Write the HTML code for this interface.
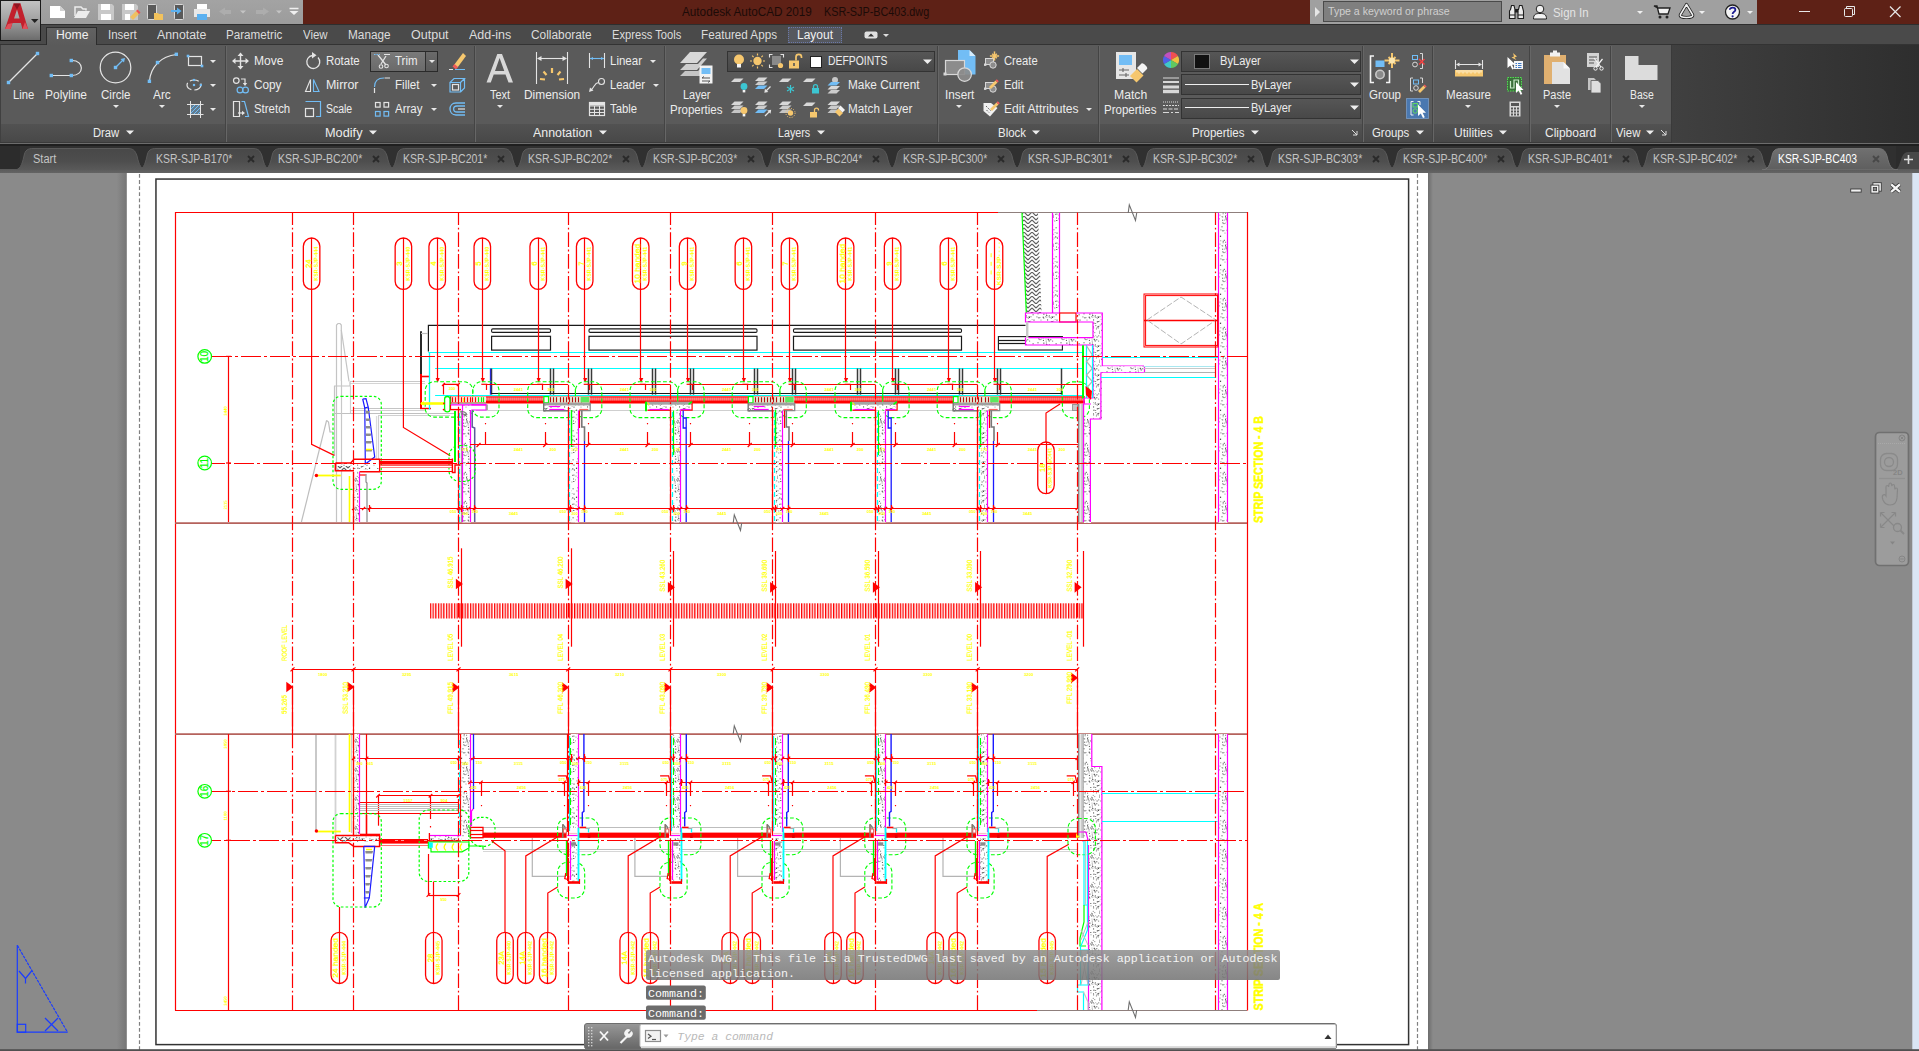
<!DOCTYPE html>
<html><head><meta charset="utf-8"><title>Autodesk AutoCAD 2019 - KSR-SJP-BC403.dwg</title>
<style>
html,body{margin:0;padding:0;background:#8a8a8a;overflow:hidden}
body{width:1919px;height:1051px;position:relative;font-family:"Liberation Sans",sans-serif}
.abs{position:absolute;display:block}
.t{position:absolute;white-space:nowrap;transform-origin:0 0;display:block}
</style></head><body>
<svg class="abs" style="left:0;top:0" width="1919" height="1051" fill="none" font-family="Liberation Sans, sans-serif">
<defs><pattern id="conc" width="23" height="29" patternUnits="userSpaceOnUse"><rect width="23" height="29" fill="#fff"/><rect x="13.7" y="20.8" width="0.8" height="0.8" fill="#333"/><rect x="10.2" y="26.4" width="0.8" height="0.8" fill="#666"/><rect x="2.5" y="13.1" width="1" height="1" fill="#999"/><rect x="12.0" y="16.1" width="0.8" height="0.8" fill="#777"/><rect x="4.8" y="7.8" width="1.1" height="1.1" fill="#666"/><rect x="16.8" y="2.0" width="1.1" height="1.1" fill="#666"/><rect x="2.9" y="27.2" width="0.8" height="0.8" fill="#666"/><rect x="17.0" y="26.9" width="1" height="1" fill="#333"/><rect x="3.7" y="8.8" width="1" height="1" fill="#555"/><rect x="19.3" y="17.5" width="1" height="1" fill="#777"/><rect x="4.3" y="27.0" width="1.1" height="1.1" fill="#888"/><rect x="0.5" y="11.6" width="1" height="1" fill="#888"/><rect x="1.4" y="8.4" width="0.8" height="0.8" fill="#555"/><rect x="14.9" y="9.5" width="1" height="1" fill="#888"/><rect x="18.0" y="13.5" width="1" height="1" fill="#666"/><rect x="10.6" y="19.7" width="0.8" height="0.8" fill="#888"/><rect x="21.5" y="0.6" width="1" height="1" fill="#333"/><rect x="8.9" y="15.4" width="1.1" height="1.1" fill="#888"/><rect x="8.3" y="23.6" width="1.1" height="1.1" fill="#444"/><rect x="15.6" y="17.5" width="1" height="1" fill="#444"/><rect x="16.6" y="26.0" width="1.1" height="1.1" fill="#888"/><rect x="11.3" y="25.0" width="1" height="1" fill="#333"/><rect x="10.2" y="16.5" width="1" height="1" fill="#333"/><rect x="6.5" y="12.1" width="0.8" height="0.8" fill="#666"/><rect x="7.5" y="17.1" width="1" height="1" fill="#888"/><rect x="6.1" y="19.7" width="0.8" height="0.8" fill="#888"/><rect x="15.1" y="8.6" width="0.8" height="0.8" fill="#777"/><rect x="3.3" y="19.3" width="1.1" height="1.1" fill="#666"/><rect x="15.8" y="2.3" width="1.1" height="1.1" fill="#444"/><rect x="5.2" y="16.6" width="1" height="1" fill="#999"/><rect x="14.3" y="4.1" width="0.8" height="0.8" fill="#333"/><rect x="10.9" y="23.5" width="1" height="1" fill="#777"/><rect x="12.4" y="3.7" width="1.1" height="1.1" fill="#444"/><rect x="3.7" y="10.4" width="0.8" height="0.8" fill="#333"/><rect x="9.3" y="4.0" width="1" height="1" fill="#555"/><rect x="10.0" y="13.7" width="1" height="1" fill="#999"/><rect x="6.0" y="13.2" width="1" height="1" fill="#444"/><rect x="8.3" y="27.7" width="1" height="1" fill="#777"/><rect x="20.6" y="24.3" width="1" height="1" fill="#444"/><rect x="10.8" y="14.4" width="1" height="1" fill="#444"/><rect x="17.3" y="21.7" width="0.8" height="0.8" fill="#333"/><rect x="6.7" y="15.7" width="1" height="1" fill="#333"/><rect x="10.7" y="21.6" width="1" height="1" fill="#888"/><rect x="14.3" y="16.3" width="0.8" height="0.8" fill="#999"/><rect x="12.0" y="7.0" width="1" height="1" fill="#999"/><rect x="6.4" y="14.0" width="1" height="1" fill="#888"/><rect x="6.0" y="9.7" width="1.1" height="1.1" fill="#888"/><rect x="20.3" y="4.8" width="1.1" height="1.1" fill="#888"/><rect x="21.0" y="14.5" width="1" height="1" fill="#666"/><rect x="18.4" y="26.2" width="1.1" height="1.1" fill="#888"/><rect x="15.2" y="20.2" width="1.1" height="1.1" fill="#666"/><rect x="13.6" y="26.2" width="1.1" height="1.1" fill="#888"/><rect x="13.7" y="21.7" width="1" height="1" fill="#777"/><rect x="21.9" y="5.5" width="1.1" height="1.1" fill="#555"/><rect x="14.3" y="6.1" width="1" height="1" fill="#777"/><rect x="15.8" y="27.6" width="1" height="1" fill="#666"/><rect x="1.2" y="3.7" width="1" height="1" fill="#666"/><rect x="10.6" y="15.4" width="1.1" height="1.1" fill="#999"/><rect x="7.7" y="18.6" width="0.8" height="0.8" fill="#555"/><rect x="4.5" y="20.1" width="1" height="1" fill="#444"/><rect x="7.7" y="26.7" width="1.1" height="1.1" fill="#333"/><rect x="2.5" y="23.3" width="1" height="1" fill="#444"/><rect x="12.1" y="8.4" width="1" height="1" fill="#555"/><rect x="11.3" y="26.6" width="1" height="1" fill="#888"/><rect x="18.0" y="11.7" width="1" height="1" fill="#999"/><rect x="3.1" y="16.7" width="1.1" height="1.1" fill="#666"/><rect x="21.3" y="17.0" width="1" height="1" fill="#333"/><rect x="19.7" y="0.0" width="0.8" height="0.8" fill="#888"/><rect x="12.4" y="17.2" width="1" height="1" fill="#888"/><rect x="13.8" y="25.0" width="1.1" height="1.1" fill="#999"/><rect x="9.5" y="6.3" width="1" height="1" fill="#999"/><rect x="21.4" y="10.6" width="1" height="1" fill="#555"/><rect x="13.1" y="20.7" width="1" height="1" fill="#999"/><rect x="5.5" y="0.6" width="1" height="1" fill="#999"/><rect x="20.4" y="4.0" width="0.8" height="0.8" fill="#444"/><rect x="14.5" y="26.9" width="1" height="1" fill="#888"/><rect x="0.9" y="3.8" width="1.1" height="1.1" fill="#444"/><rect x="10.6" y="15.7" width="1" height="1" fill="#999"/><rect x="17.2" y="6.9" width="1" height="1" fill="#333"/><rect x="3.4" y="27.7" width="1" height="1" fill="#999"/><rect x="13.4" y="13.3" width="0.8" height="0.8" fill="#444"/><rect x="16.7" y="8.4" width="1" height="1" fill="#555"/><rect x="6.5" y="14.8" width="1.1" height="1.1" fill="#888"/><rect x="7.9" y="20.9" width="1" height="1" fill="#444"/><rect x="0.1" y="15.5" width="0.8" height="0.8" fill="#777"/><rect x="12.0" y="0.4" width="1.1" height="1.1" fill="#555"/><rect x="12.7" y="19.8" width="1.1" height="1.1" fill="#333"/><rect x="20.1" y="10.8" width="1.1" height="1.1" fill="#777"/><rect x="18.7" y="5.5" width="1" height="1" fill="#999"/><rect x="18.3" y="1.8" width="0.8" height="0.8" fill="#777"/><rect x="17.1" y="16.3" width="1.1" height="1.1" fill="#888"/><rect x="3.1" y="13.4" width="1.1" height="1.1" fill="#888"/><rect x="11.8" y="11.9" width="0.8" height="0.8" fill="#444"/><rect x="16.1" y="7.5" width="0.8" height="0.8" fill="#333"/><rect x="1.4" y="26.4" width="1" height="1" fill="#777"/></pattern><pattern id="vh" width="2.67" height="4" patternUnits="userSpaceOnUse"><rect width="1.3" height="4" fill="#ff0000"/></pattern><pattern id="wt" width="2" height="4" patternUnits="userSpaceOnUse"><rect x=".5" width=".9" height="4" fill="#ffffff"/></pattern><pattern id="vh2" width="2.2" height="4" patternUnits="userSpaceOnUse"><rect width="1.5" height="4" fill="#ff0000"/></pattern><pattern id="herr" width="8" height="8" patternUnits="userSpaceOnUse"><rect width="8" height="8" fill="#fff"/><path d="M0 0L4 4M0 4L4 8M4 4L8 0M4 8L8 4" stroke="#5e5e5e" stroke-width="1.1" fill="none"/></pattern><linearGradient id="shl" x1="0" x2="1"><stop offset="0" stop-color="#8a8a8a"/><stop offset="1" stop-color="#757575"/></linearGradient><linearGradient id="shr" x1="0" x2="1"><stop offset="0" stop-color="#6c6c6c"/><stop offset="1" stop-color="#8a8a8a"/></linearGradient></defs>
<rect x="0" y="173" width="1919" height="878" fill="#8a8a8a" stroke="none" stroke-width="1" />
<rect x="116.8" y="173" width="10.2" height="878" fill="url(#shl)" stroke="none" stroke-width="1" />
<rect x="1428" y="173" width="5" height="878" fill="url(#shr)" stroke="none" stroke-width="1" />
<rect x="126.8" y="172.8" width="1301.2" height="879" fill="#ffffff" stroke="none" stroke-width="1" />
<path d="M139.5 174L139.5 1051" stroke="#808080" stroke-width="1.2" stroke-dasharray="3.8 2.3"/>
<path d="M1417.5 174L1417.5 1051" stroke="#808080" stroke-width="1.2" stroke-dasharray="3.8 2.3"/>
<rect x="155.95" y="179.05" width="1252.65" height="865.55" fill="none" stroke="#333" stroke-width="1.5" />
<rect x="1912.3" y="172.9" width="6.7" height="878" fill="#dae5f4" stroke="none" stroke-width="1" />
<path d="M175 212.5L998 212.5" stroke="#ff0000" stroke-width="1.2" />
<path d="M998 212.5L1247 212.5" stroke="#8f7f7c" stroke-width="1.2" />
<path d="M175 1010.5L1037 1010.5" stroke="#ff0000" stroke-width="1.2" />
<path d="M1037 1010.5L1247 1010.5" stroke="#8f7f7c" stroke-width="1.2" />
<path d="M175.5 212L175.5 1010.5" stroke="#ff0000" stroke-width="1.2" />
<path d="M1247.5 212L1247.5 1010.5" stroke="#ff0000" stroke-width="1.2" />
<path d="M1128.2 213L1129.3 204.8L1135.5 220.4L1136.7 213" stroke="#6e6e6e" stroke-width="1.1" fill="none" />
<path d="M1128.2 1010L1129.3 1001.8L1135.5 1017.4L1136.7 1010" stroke="#6e6e6e" stroke-width="1.1" fill="none" />
<path d="M175 523.1L1247 523.1" stroke="#b5625c" stroke-width="1.7" />
<path d="M175 734.2L1247 734.2" stroke="#b5625c" stroke-width="1.7" />
<path d="M733.2 523L734.3 514.8L740.5 530.4L741.7 523" stroke="#6e6e6e" stroke-width="1.1" fill="none" />
<path d="M733.2 734L734.3 725.8L740.5 741.4L741.7 734" stroke="#6e6e6e" stroke-width="1.1" fill="none" />
<path d="M228.5 356L228.5 522" stroke="#ff0000" stroke-width="1.2" />
<path d="M228.5 734L228.5 1010" stroke="#ff0000" stroke-width="1.2" />
<path d="M226 356.4L231 356.4" stroke="#ff0000" stroke-width="1.2" />
<path d="M226 463L231 463" stroke="#ff0000" stroke-width="1.2" />
<path d="M226 791.3L231 791.3" stroke="#ff0000" stroke-width="1.2" />
<path d="M226 840.3L231 840.3" stroke="#ff0000" stroke-width="1.2" />
<text x="227" y="411" font-size="4.2" fill="#ffff00" stroke="none" text-anchor="middle" font-weight="bold" transform="rotate(-90 227 411)">3440</text>
<text x="227" y="505" font-size="4.2" fill="#ffff00" stroke="none" text-anchor="middle" font-weight="bold" transform="rotate(-90 227 505)">2115</text>
<text x="227" y="744" font-size="4.2" fill="#ffff00" stroke="none" text-anchor="middle" font-weight="bold" transform="rotate(-90 227 744)">3050</text>
<text x="227" y="816" font-size="4.2" fill="#ffff00" stroke="none" text-anchor="middle" font-weight="bold" transform="rotate(-90 227 816)">1100</text>
<text x="227" y="1001" font-size="4.2" fill="#ffff00" stroke="none" text-anchor="middle" font-weight="bold" transform="rotate(-90 227 1001)">3450</text>
<circle cx="204.7" cy="356.4" r="6.8" fill="none" stroke="#00ff00" stroke-width="1.2"/>
<text x="208.2" y="356.4" font-size="10" fill="#00ff00" stroke="#00ff00" stroke-width="0.2" text-anchor="middle" transform="rotate(-90 208.2 356.4)">10</text>
<circle cx="204.7" cy="463" r="6.8" fill="none" stroke="#00ff00" stroke-width="1.2"/>
<text x="208.2" y="463" font-size="10" fill="#00ff00" stroke="#00ff00" stroke-width="0.2" text-anchor="middle" transform="rotate(-90 208.2 463)">11</text>
<circle cx="204.7" cy="791.3" r="6.8" fill="none" stroke="#00ff00" stroke-width="1.2"/>
<text x="208.2" y="791.3" font-size="10" fill="#00ff00" stroke="#00ff00" stroke-width="0.2" text-anchor="middle" transform="rotate(-90 208.2 791.3)">16</text>
<circle cx="204.7" cy="840.3" r="6.8" fill="none" stroke="#00ff00" stroke-width="1.2"/>
<text x="208.2" y="840.3" font-size="10" fill="#00ff00" stroke="#00ff00" stroke-width="0.2" text-anchor="middle" transform="rotate(-90 208.2 840.3)">17</text>
<rect x="430" y="603.3" width="654" height="15.2" fill="url(#vh)" stroke="none" stroke-width="1" />
<path d="M292.5 669.5L1077.5 669.5" stroke="#ff0000" stroke-width="1.2" />
<path d="M290.5 671.4L294.5 667.4" stroke="#ff0000" stroke-width="1.2" />
<path d="M351.6 671.4L355.6 667.4" stroke="#ff0000" stroke-width="1.2" />
<path d="M456.5 671.4L460.5 667.4" stroke="#ff0000" stroke-width="1.2" />
<path d="M566.2 671.4L570.2 667.4" stroke="#ff0000" stroke-width="1.2" />
<path d="M668.5 671.4L672.5 667.4" stroke="#ff0000" stroke-width="1.2" />
<path d="M770.7 671.4L774.7 667.4" stroke="#ff0000" stroke-width="1.2" />
<path d="M873.5 671.4L877.5 667.4" stroke="#ff0000" stroke-width="1.2" />
<path d="M975.7 671.4L979.7 667.4" stroke="#ff0000" stroke-width="1.2" />
<path d="M1075.2 671.4L1079.2 667.4" stroke="#ff0000" stroke-width="1.2" />
<path d="M461.5 548.3L461.5 646.7" stroke="#ff0000" stroke-width="1.2" />
<path d="M571.5 548.3L571.5 646.7" stroke="#ff0000" stroke-width="1.2" />
<path d="M673.5 551L673.5 646.7" stroke="#ff0000" stroke-width="1.2" />
<path d="M775.5 551L775.5 646.7" stroke="#ff0000" stroke-width="1.2" />
<path d="M878.5 551L878.5 646.7" stroke="#ff0000" stroke-width="1.2" />
<path d="M980.5 551L980.5 646.7" stroke="#ff0000" stroke-width="1.2" />
<path d="M1083.5 551L1083.5 646.7" stroke="#ff0000" stroke-width="1.2" />
<path d="M455.9 578.65L462.9 584L455.9 589.35Z" fill="#ff0000" stroke="none"/>
<text x="452.9" y="588.5" font-size="7" fill="#ffff00" stroke="#ffff00" stroke-width="0.2" text-anchor="start" transform="rotate(-90 452.9 588.5)" textLength="32" lengthAdjust="spacingAndGlyphs">SSL 46.915</text>
<text x="452.9" y="661" font-size="7" fill="#ffff00" stroke="#ffff00" stroke-width="0.2" text-anchor="start" transform="rotate(-90 452.9 661)" textLength="27.2" lengthAdjust="spacingAndGlyphs">LEVEL 05</text>
<path d="M452.3 682.15L459.3 687.5L452.3 692.85Z" fill="#ff0000" stroke="none"/>
<path d="M458.5 687.5L458.5 734" stroke="#ff0000" stroke-width="1.2" />
<text x="452.9" y="714" font-size="7" fill="#ffff00" stroke="#ffff00" stroke-width="0.2" text-anchor="start" transform="rotate(-90 452.9 714)" textLength="32" lengthAdjust="spacingAndGlyphs">FFL 49.915</text>
<path d="M565.6 578.65L572.6 584L565.6 589.35Z" fill="#ff0000" stroke="none"/>
<text x="562.6" y="588.5" font-size="7" fill="#ffff00" stroke="#ffff00" stroke-width="0.2" text-anchor="start" transform="rotate(-90 562.6 588.5)" textLength="32" lengthAdjust="spacingAndGlyphs">SSL 46.200</text>
<text x="562.6" y="661" font-size="7" fill="#ffff00" stroke="#ffff00" stroke-width="0.2" text-anchor="start" transform="rotate(-90 562.6 661)" textLength="27.2" lengthAdjust="spacingAndGlyphs">LEVEL 04</text>
<path d="M562 682.15L569 687.5L562 692.85Z" fill="#ff0000" stroke="none"/>
<path d="M568.5 687.5L568.5 734" stroke="#ff0000" stroke-width="1.2" />
<text x="562.6" y="714" font-size="7" fill="#ffff00" stroke="#ffff00" stroke-width="0.2" text-anchor="start" transform="rotate(-90 562.6 714)" textLength="32" lengthAdjust="spacingAndGlyphs">FFL 46.300</text>
<path d="M667.9 581.95L674.9 587.3L667.9 592.65Z" fill="#ff0000" stroke="none"/>
<text x="664.9" y="591.8" font-size="7" fill="#ffff00" stroke="#ffff00" stroke-width="0.2" text-anchor="start" transform="rotate(-90 664.9 591.8)" textLength="32" lengthAdjust="spacingAndGlyphs">SSL 43.260</text>
<text x="664.9" y="661" font-size="7" fill="#ffff00" stroke="#ffff00" stroke-width="0.2" text-anchor="start" transform="rotate(-90 664.9 661)" textLength="27.2" lengthAdjust="spacingAndGlyphs">LEVEL 03</text>
<path d="M664.3 682.15L671.3 687.5L664.3 692.85Z" fill="#ff0000" stroke="none"/>
<path d="M670.5 687.5L670.5 734" stroke="#ff0000" stroke-width="1.2" />
<text x="664.9" y="714" font-size="7" fill="#ffff00" stroke="#ffff00" stroke-width="0.2" text-anchor="start" transform="rotate(-90 664.9 714)" textLength="32" lengthAdjust="spacingAndGlyphs">FFL 43.090</text>
<path d="M770.1 581.95L777.1 587.3L770.1 592.65Z" fill="#ff0000" stroke="none"/>
<text x="767.1" y="591.8" font-size="7" fill="#ffff00" stroke="#ffff00" stroke-width="0.2" text-anchor="start" transform="rotate(-90 767.1 591.8)" textLength="32" lengthAdjust="spacingAndGlyphs">SSL 39.690</text>
<text x="767.1" y="661" font-size="7" fill="#ffff00" stroke="#ffff00" stroke-width="0.2" text-anchor="start" transform="rotate(-90 767.1 661)" textLength="27.2" lengthAdjust="spacingAndGlyphs">LEVEL 02</text>
<path d="M766.5 682.15L773.5 687.5L766.5 692.85Z" fill="#ff0000" stroke="none"/>
<path d="M772.5 687.5L772.5 734" stroke="#ff0000" stroke-width="1.2" />
<text x="767.1" y="714" font-size="7" fill="#ffff00" stroke="#ffff00" stroke-width="0.2" text-anchor="start" transform="rotate(-90 767.1 714)" textLength="32" lengthAdjust="spacingAndGlyphs">FFL 39.790</text>
<path d="M872.9 581.95L879.9 587.3L872.9 592.65Z" fill="#ff0000" stroke="none"/>
<text x="869.9" y="591.8" font-size="7" fill="#ffff00" stroke="#ffff00" stroke-width="0.2" text-anchor="start" transform="rotate(-90 869.9 591.8)" textLength="32" lengthAdjust="spacingAndGlyphs">SSL 36.590</text>
<text x="869.9" y="661" font-size="7" fill="#ffff00" stroke="#ffff00" stroke-width="0.2" text-anchor="start" transform="rotate(-90 869.9 661)" textLength="27.2" lengthAdjust="spacingAndGlyphs">LEVEL 01</text>
<path d="M869.3 682.15L876.3 687.5L869.3 692.85Z" fill="#ff0000" stroke="none"/>
<path d="M875.5 687.5L875.5 734" stroke="#ff0000" stroke-width="1.2" />
<text x="869.9" y="714" font-size="7" fill="#ffff00" stroke="#ffff00" stroke-width="0.2" text-anchor="start" transform="rotate(-90 869.9 714)" textLength="32" lengthAdjust="spacingAndGlyphs">FFL 36.490</text>
<path d="M975.1 581.95L982.1 587.3L975.1 592.65Z" fill="#ff0000" stroke="none"/>
<text x="972.1" y="591.8" font-size="7" fill="#ffff00" stroke="#ffff00" stroke-width="0.2" text-anchor="start" transform="rotate(-90 972.1 591.8)" textLength="32" lengthAdjust="spacingAndGlyphs">SSL 33.090</text>
<text x="972.1" y="661" font-size="7" fill="#ffff00" stroke="#ffff00" stroke-width="0.2" text-anchor="start" transform="rotate(-90 972.1 661)" textLength="27.2" lengthAdjust="spacingAndGlyphs">LEVEL 00</text>
<path d="M971.5 682.15L978.5 687.5L971.5 692.85Z" fill="#ff0000" stroke="none"/>
<path d="M977.5 687.5L977.5 734" stroke="#ff0000" stroke-width="1.2" />
<text x="972.1" y="714" font-size="7" fill="#ffff00" stroke="#ffff00" stroke-width="0.2" text-anchor="start" transform="rotate(-90 972.1 714)" textLength="32" lengthAdjust="spacingAndGlyphs">FFL 33.190</text>
<path d="M1074.6 581.95L1081.6 587.3L1074.6 592.65Z" fill="#ff0000" stroke="none"/>
<text x="1071.6" y="591.8" font-size="7" fill="#ffff00" stroke="#ffff00" stroke-width="0.2" text-anchor="start" transform="rotate(-90 1071.6 591.8)" textLength="32" lengthAdjust="spacingAndGlyphs">SSL 32.790</text>
<text x="1071.6" y="661" font-size="7" fill="#ffff00" stroke="#ffff00" stroke-width="0.2" text-anchor="start" transform="rotate(-90 1071.6 661)" textLength="30.6" lengthAdjust="spacingAndGlyphs">LEVEL -01</text>
<path d="M1071 672.45L1078 677.8L1071 683.15Z" fill="#ff0000" stroke="none"/>
<path d="M1077.5 677.8L1077.5 734" stroke="#ff0000" stroke-width="1.2" />
<text x="1071.6" y="704" font-size="7" fill="#ffff00" stroke="#ffff00" stroke-width="0.2" text-anchor="start" transform="rotate(-90 1071.6 704)" textLength="32" lengthAdjust="spacingAndGlyphs">FFL 29.990</text>
<path d="M286.3 681.65L293.3 687L286.3 692.35Z" fill="#ff0000" stroke="none"/>
<path d="M347.4 681.65L354.4 687L347.4 692.35Z" fill="#ff0000" stroke="none"/>
<path d="M292.5 687L292.5 734" stroke="#ff0000" stroke-width="1.2" />
<path d="M353.5 687L353.5 734" stroke="#ff0000" stroke-width="1.2" />
<text x="286.9" y="661" font-size="7" fill="#ffff00" stroke="#ffff00" stroke-width="0.2" text-anchor="start" transform="rotate(-90 286.9 661)" textLength="36" lengthAdjust="spacingAndGlyphs">ROOF LEVEL</text>
<text x="286.9" y="714" font-size="7" fill="#ffff00" stroke="#ffff00" stroke-width="0.2" text-anchor="start" transform="rotate(-90 286.9 714)" textLength="19" lengthAdjust="spacingAndGlyphs">55.265</text>
<text x="348" y="714" font-size="7" fill="#ffff00" stroke="#ffff00" stroke-width="0.2" text-anchor="start" transform="rotate(-90 348 714)" textLength="32" lengthAdjust="spacingAndGlyphs">SSL 53.210</text>
<text x="318" y="675.5" font-size="4.2" fill="#ffff00" stroke="none" text-anchor="start" font-weight="bold">1800</text>
<text x="402" y="675.5" font-size="4.2" fill="#ffff00" stroke="none" text-anchor="start" font-weight="bold">3295</text>
<text x="509" y="675.5" font-size="4.2" fill="#ffff00" stroke="none" text-anchor="start" font-weight="bold">3615</text>
<text x="615" y="675.5" font-size="4.2" fill="#ffff00" stroke="none" text-anchor="start" font-weight="bold">3210</text>
<text x="717" y="675.5" font-size="4.2" fill="#ffff00" stroke="none" text-anchor="start" font-weight="bold">3300</text>
<text x="820" y="675.5" font-size="4.2" fill="#ffff00" stroke="none" text-anchor="start" font-weight="bold">3300</text>
<text x="923" y="675.5" font-size="4.2" fill="#ffff00" stroke="none" text-anchor="start" font-weight="bold">3300</text>
<text x="1024" y="675.5" font-size="4.2" fill="#ffff00" stroke="none" text-anchor="start" font-weight="bold">3200</text>
<path d="M336.5 522L336.5 325L338 323.5L340 323.5L341.3 325L341.3 381" stroke="#c4c4c4" stroke-width="1.2" fill="none" />
<path d="M341.3 330L349 381.4" stroke="#c4c4c4" stroke-width="1.2" fill="none" />
<path d="M326.6 420.4L301.4 522" stroke="#bdbdbd" stroke-width="1.2" fill="none" />
<path d="M326.6 420.4L328.5 422L330 432L333 432" stroke="#bdbdbd" stroke-width="1.2" fill="none" />
<path d="M350 381.5L425 381.5" stroke="#c8c8c8" stroke-width="1.2" />
<path d="M350 383.5L425 383.5" stroke="#d4d4d4" stroke-width="1.2" />
<path d="M334 386L350 386L350 381.4" stroke="#c4c4c4" stroke-width="1.2" fill="none" />
<path d="M334.5 386L334.5 456" stroke="#c4c4c4" stroke-width="1.2" />
<path d="M354 408.5L425 408.5" stroke="#c4c4c4" stroke-width="1.2" />
<path d="M350 410.5L425 410.5" stroke="#d0d0d0" stroke-width="1.2" />
<path d="M335 413.5L455 413.5" stroke="#c0c0c0" stroke-width="1.2" />
<path d="M378 415.5L450 415.5" stroke="#d0d0d0" stroke-width="1.2" />
<path d="M350.5 386L350.5 413" stroke="#cfcfcf" stroke-width="1.2" />
<path d="M378.5 416L378.5 460" stroke="#cfcfcf" stroke-width="1.2" />
<path d="M376.5 416L376.5 460" stroke="#dcdcdc" stroke-width="1.2" />
<path d="M341.5 381L341.5 522" stroke="#c8c8c8" stroke-width="1.2" />
<path d="M476 410.5L1080 410.5" stroke="#cfcfcf" stroke-width="1.2" />
<path d="M428.4 351.5L428.4 325.4L1025.5 325.4" stroke="#1a1a1a" stroke-width="1.2" fill="none" />
<path d="M421 331.3L421 374" stroke="#2a2a2a" stroke-width="2" />
<path d="M421 333.5L428 333.5" stroke="#bdbdbd" stroke-width="1.2" />
<path d="M421 374L421 408.7" stroke="#ff0000" stroke-width="2" />
<path d="M421 376.5L429 376.5" stroke="#ff0000" stroke-width="1.6" />
<path d="M420 408.5L431 408.5" stroke="#ff0000" stroke-width="1.4" />
<rect x="491.6" y="328.9" width="58.9" height="3.5" fill="none" stroke="#1a1a1a" stroke-width="1.1" rx="1.2"/>
<rect x="491.6" y="336.3" width="58.9" height="13.8" fill="none" stroke="#1a1a1a" stroke-width="1.2" />
<rect x="589" y="328.9" width="168" height="3.5" fill="none" stroke="#1a1a1a" stroke-width="1.1" rx="1.2"/>
<rect x="589" y="336.3" width="168" height="13.8" fill="none" stroke="#1a1a1a" stroke-width="1.2" />
<rect x="793.5" y="328.9" width="168" height="3.5" fill="none" stroke="#1a1a1a" stroke-width="1.1" rx="1.2"/>
<rect x="793.5" y="336.3" width="168" height="13.8" fill="none" stroke="#1a1a1a" stroke-width="1.2" />
<rect x="998.4" y="336.6" width="64" height="13.4" fill="none" stroke="#1a1a1a" stroke-width="1.1" />
<path d="M998.4 340.5L1025 340.5" stroke="#1a1a1a" stroke-width="1.2" />
<path d="M998.4 343.5L1025 343.5" stroke="#1a1a1a" stroke-width="1.2" />
<path d="M428.4 352.5L1082 352.5" stroke="#00ffff" stroke-width="1.2" />
<path d="M429.5 352L429.5 409.5" stroke="#00ffff" stroke-width="1.3" />
<path d="M435.1 368.5L1082 368.5" stroke="#00ffff" stroke-width="1.2" />
<path d="M435.1 395.5L1082 395.5" stroke="#00ffff" stroke-width="1.2" />
<path d="M491.5 368.5L491.5 394.6" stroke="#3a3a3a" stroke-width="1.5" />
<path d="M550.5 368.5L550.5 394.6" stroke="#3a3a3a" stroke-width="1.5" />
<path d="M553.5 368.5L553.5 394.6" stroke="#3a3a3a" stroke-width="1.5" />
<path d="M588.5 368.5L588.5 394.6" stroke="#3a3a3a" stroke-width="1.5" />
<path d="M591.5 368.5L591.5 394.6" stroke="#3a3a3a" stroke-width="1.5" />
<path d="M652.5 368.5L652.5 394.6" stroke="#3a3a3a" stroke-width="1.5" />
<path d="M655.5 368.5L655.5 394.6" stroke="#3a3a3a" stroke-width="1.5" />
<path d="M690.5 368.5L690.5 394.6" stroke="#3a3a3a" stroke-width="1.5" />
<path d="M693.5 368.5L693.5 394.6" stroke="#3a3a3a" stroke-width="1.5" />
<path d="M754.5 368.5L754.5 394.6" stroke="#3a3a3a" stroke-width="1.5" />
<path d="M757.5 368.5L757.5 394.6" stroke="#3a3a3a" stroke-width="1.5" />
<path d="M792.5 368.5L792.5 394.6" stroke="#3a3a3a" stroke-width="1.5" />
<path d="M795.5 368.5L795.5 394.6" stroke="#3a3a3a" stroke-width="1.5" />
<path d="M857.5 368.5L857.5 394.6" stroke="#3a3a3a" stroke-width="1.5" />
<path d="M860.5 368.5L860.5 394.6" stroke="#3a3a3a" stroke-width="1.5" />
<path d="M895.5 368.5L895.5 394.6" stroke="#3a3a3a" stroke-width="1.5" />
<path d="M898.5 368.5L898.5 394.6" stroke="#3a3a3a" stroke-width="1.5" />
<path d="M959.5 368.5L959.5 394.6" stroke="#3a3a3a" stroke-width="1.5" />
<path d="M962.5 368.5L962.5 394.6" stroke="#3a3a3a" stroke-width="1.5" />
<path d="M997.5 368.5L997.5 394.6" stroke="#3a3a3a" stroke-width="1.5" />
<path d="M1000.5 368.5L1000.5 394.6" stroke="#3a3a3a" stroke-width="1.5" />
<path d="M1061.5 368.5L1061.5 394.6" stroke="#3a3a3a" stroke-width="1.5" />
<path d="M490.5 368.5L490.5 394.6" stroke="#2a2ad0" stroke-width="1.3" />
<path d="M491 393.5L1062 393.5" stroke="#1a1a1a" stroke-width="1.2" />
<path d="M486 384.5L568.2 384.5" stroke="#ff0000" stroke-width="1.2" />
<path d="M588.5 384.5L670.5 384.5" stroke="#ff0000" stroke-width="1.2" />
<path d="M690.8 384.5L772.7 384.5" stroke="#ff0000" stroke-width="1.2" />
<path d="M793 384.5L875.5 384.5" stroke="#ff0000" stroke-width="1.2" />
<path d="M895.8 384.5L977.7 384.5" stroke="#ff0000" stroke-width="1.2" />
<path d="M998 384.5L1082 384.5" stroke="#ff0000" stroke-width="1.2" />
<rect x="450" y="396.3" width="635" height="7.2" fill="#ff0000" stroke="none" stroke-width="1" />
<rect x="450" y="397.4" width="635" height="3.2" fill="url(#wt)" stroke="none" stroke-width="1" />
<rect x="303.35" y="238" width="16.5" height="51.4" fill="none" stroke="#ff0000" stroke-width="1.3" rx="8.25"/>
<path d="M311.5 238L311.5 289.4" stroke="#ff0000" stroke-width="1.2" />
<text x="310.6" y="263.7" font-size="7.6" fill="#ffff00" stroke="#ffff00" stroke-width="0.3" text-anchor="middle" transform="rotate(-90 310.6 263.7)">24</text>
<text x="318" y="263.7" font-size="5.2" fill="#ffff00" stroke="none" text-anchor="middle" font-weight="bold" transform="rotate(-90 318 263.7)" textLength="33.88" lengthAdjust="spacingAndGlyphs">KSR-SJP-444</text>
<path d="M311.6 289.4L311.6 444.4L334.3 455.4" stroke="#ff0000" stroke-width="1.2" fill="none" />
<rect x="395.15" y="238" width="16.5" height="51.4" fill="none" stroke="#ff0000" stroke-width="1.3" rx="8.25"/>
<path d="M403.5 238L403.5 289.4" stroke="#ff0000" stroke-width="1.2" />
<text x="402.4" y="263.7" font-size="7.6" fill="#ffff00" stroke="#ffff00" stroke-width="0.3" text-anchor="middle" transform="rotate(-90 402.4 263.7)">3</text>
<text x="409.8" y="263.7" font-size="5.2" fill="#ffff00" stroke="none" text-anchor="middle" font-weight="bold" transform="rotate(-90 409.8 263.7)" textLength="33.88" lengthAdjust="spacingAndGlyphs">KSR-SJP-440</text>
<path d="M403.4 289.4L403.4 427.4L450.2 455.8" stroke="#ff0000" stroke-width="1.2" fill="none" />
<rect x="428.95" y="238" width="16.5" height="51.4" fill="none" stroke="#ff0000" stroke-width="1.3" rx="8.25"/>
<path d="M437.5 238L437.5 289.4" stroke="#ff0000" stroke-width="1.2" />
<text x="436.2" y="263.7" font-size="7.6" fill="#ffff00" stroke="#ffff00" stroke-width="0.3" text-anchor="middle" transform="rotate(-90 436.2 263.7)">4</text>
<text x="443.6" y="263.7" font-size="5.2" fill="#ffff00" stroke="none" text-anchor="middle" font-weight="bold" transform="rotate(-90 443.6 263.7)" textLength="33.88" lengthAdjust="spacingAndGlyphs">KSR-SJP-440</text>
<path d="M437.5 289.4L437.5 381.4" stroke="#ff0000" stroke-width="1.2" />
<path d="M435.6 378L437.7 382.5L439.8 378Z" fill="#ff0000"/>
<rect x="474.05" y="238" width="16.5" height="51.4" fill="none" stroke="#ff0000" stroke-width="1.3" rx="8.25"/>
<path d="M482.5 238L482.5 289.4" stroke="#ff0000" stroke-width="1.2" />
<text x="481.3" y="263.7" font-size="7.6" fill="#ffff00" stroke="#ffff00" stroke-width="0.3" text-anchor="middle" transform="rotate(-90 481.3 263.7)">5</text>
<text x="488.7" y="263.7" font-size="5.2" fill="#ffff00" stroke="none" text-anchor="middle" font-weight="bold" transform="rotate(-90 488.7 263.7)" textLength="33.88" lengthAdjust="spacingAndGlyphs">KSR-SJP-440</text>
<path d="M482.5 289.4L482.5 381.4" stroke="#ff0000" stroke-width="1.2" />
<path d="M480.7 378L482.8 382.5L484.9 378Z" fill="#ff0000"/>
<path d="M486.5 384L486.5 390" stroke="#ff0000" stroke-width="1.2" />
<path d="M481.3 384.3L487.3 384.3" stroke="#ff0000" stroke-width="1.2" />
<rect x="529.95" y="238" width="16.5" height="51.4" fill="none" stroke="#ff0000" stroke-width="1.3" rx="8.25"/>
<path d="M538.5 238L538.5 289.4" stroke="#ff0000" stroke-width="1.2" />
<text x="537.2" y="263.7" font-size="7.6" fill="#ffff00" stroke="#ffff00" stroke-width="0.3" text-anchor="middle" transform="rotate(-90 537.2 263.7)">6</text>
<text x="544.6" y="263.7" font-size="5.2" fill="#ffff00" stroke="none" text-anchor="middle" font-weight="bold" transform="rotate(-90 544.6 263.7)" textLength="33.88" lengthAdjust="spacingAndGlyphs">KSR-SJP-441</text>
<path d="M538.5 289.4L538.5 381.4" stroke="#ff0000" stroke-width="1.2" />
<path d="M536.6 378L538.7 382.5L540.8 378Z" fill="#ff0000"/>
<path d="M542.5 384L542.5 390" stroke="#ff0000" stroke-width="1.2" />
<path d="M537.2 384.3L543.2 384.3" stroke="#ff0000" stroke-width="1.2" />
<rect x="576.45" y="238" width="16.5" height="51.4" fill="none" stroke="#ff0000" stroke-width="1.3" rx="8.25"/>
<path d="M584.5 238L584.5 289.4" stroke="#ff0000" stroke-width="1.2" />
<text x="583.7" y="263.7" font-size="7.6" fill="#ffff00" stroke="#ffff00" stroke-width="0.3" text-anchor="middle" transform="rotate(-90 583.7 263.7)">7</text>
<text x="591.1" y="263.7" font-size="5.2" fill="#ffff00" stroke="none" text-anchor="middle" font-weight="bold" transform="rotate(-90 591.1 263.7)" textLength="33.88" lengthAdjust="spacingAndGlyphs">KSR-SJP-441</text>
<path d="M584.5 289.4L584.5 381.4" stroke="#ff0000" stroke-width="1.2" />
<path d="M583.1 378L585.2 382.5L587.3 378Z" fill="#ff0000"/>
<path d="M589.5 384L589.5 390" stroke="#ff0000" stroke-width="1.2" />
<path d="M583.7 384.3L589.7 384.3" stroke="#ff0000" stroke-width="1.2" />
<rect x="632.45" y="238" width="16.5" height="51.4" fill="none" stroke="#ff0000" stroke-width="1.3" rx="8.25"/>
<path d="M640.5 238L640.5 289.4" stroke="#ff0000" stroke-width="1.2" />
<text x="639.7" y="263.7" font-size="7.6" fill="#ffff00" stroke="#ffff00" stroke-width="0.3" text-anchor="middle" transform="rotate(-90 639.7 263.7)" textLength="39.6" lengthAdjust="spacingAndGlyphs">10 handed</text>
<text x="647.1" y="263.7" font-size="5.2" fill="#ffff00" stroke="none" text-anchor="middle" font-weight="bold" transform="rotate(-90 647.1 263.7)" textLength="33.88" lengthAdjust="spacingAndGlyphs">KSR-SJP-441</text>
<path d="M640.5 289.4L640.5 381.4" stroke="#ff0000" stroke-width="1.2" />
<path d="M639.1 378L641.2 382.5L643.3 378Z" fill="#ff0000"/>
<path d="M645.5 384L645.5 390" stroke="#ff0000" stroke-width="1.2" />
<path d="M639.7 384.3L645.7 384.3" stroke="#ff0000" stroke-width="1.2" />
<rect x="679.35" y="238" width="16.5" height="51.4" fill="none" stroke="#ff0000" stroke-width="1.3" rx="8.25"/>
<path d="M687.5 238L687.5 289.4" stroke="#ff0000" stroke-width="1.2" />
<text x="686.6" y="263.7" font-size="7.6" fill="#ffff00" stroke="#ffff00" stroke-width="0.3" text-anchor="middle" transform="rotate(-90 686.6 263.7)">9</text>
<text x="694" y="263.7" font-size="5.2" fill="#ffff00" stroke="none" text-anchor="middle" font-weight="bold" transform="rotate(-90 694 263.7)" textLength="33.88" lengthAdjust="spacingAndGlyphs">KSR-SJP-441</text>
<path d="M687.5 289.4L687.5 381.4" stroke="#ff0000" stroke-width="1.2" />
<path d="M686 378L688.1 382.5L690.2 378Z" fill="#ff0000"/>
<path d="M692.5 384L692.5 390" stroke="#ff0000" stroke-width="1.2" />
<path d="M686.6 384.3L692.6 384.3" stroke="#ff0000" stroke-width="1.2" />
<rect x="735.15" y="238" width="16.5" height="51.4" fill="none" stroke="#ff0000" stroke-width="1.3" rx="8.25"/>
<path d="M743.5 238L743.5 289.4" stroke="#ff0000" stroke-width="1.2" />
<text x="742.4" y="263.7" font-size="7.6" fill="#ffff00" stroke="#ffff00" stroke-width="0.3" text-anchor="middle" transform="rotate(-90 742.4 263.7)">6</text>
<text x="749.8" y="263.7" font-size="5.2" fill="#ffff00" stroke="none" text-anchor="middle" font-weight="bold" transform="rotate(-90 749.8 263.7)" textLength="33.88" lengthAdjust="spacingAndGlyphs">KSR-SJP-441</text>
<path d="M743.5 289.4L743.5 381.4" stroke="#ff0000" stroke-width="1.2" />
<path d="M741.8 378L743.9 382.5L746 378Z" fill="#ff0000"/>
<path d="M747.5 384L747.5 390" stroke="#ff0000" stroke-width="1.2" />
<path d="M742.4 384.3L748.4 384.3" stroke="#ff0000" stroke-width="1.2" />
<rect x="781.25" y="238" width="16.5" height="51.4" fill="none" stroke="#ff0000" stroke-width="1.3" rx="8.25"/>
<path d="M789.5 238L789.5 289.4" stroke="#ff0000" stroke-width="1.2" />
<text x="788.5" y="263.7" font-size="7.6" fill="#ffff00" stroke="#ffff00" stroke-width="0.3" text-anchor="middle" transform="rotate(-90 788.5 263.7)">7</text>
<text x="795.9" y="263.7" font-size="5.2" fill="#ffff00" stroke="none" text-anchor="middle" font-weight="bold" transform="rotate(-90 795.9 263.7)" textLength="33.88" lengthAdjust="spacingAndGlyphs">KSR-SJP-441</text>
<path d="M789.5 289.4L789.5 381.4" stroke="#ff0000" stroke-width="1.2" />
<path d="M787.9 378L790 382.5L792.1 378Z" fill="#ff0000"/>
<path d="M794.5 384L794.5 390" stroke="#ff0000" stroke-width="1.2" />
<path d="M788.5 384.3L794.5 384.3" stroke="#ff0000" stroke-width="1.2" />
<rect x="837.35" y="238" width="16.5" height="51.4" fill="none" stroke="#ff0000" stroke-width="1.3" rx="8.25"/>
<path d="M845.5 238L845.5 289.4" stroke="#ff0000" stroke-width="1.2" />
<text x="844.6" y="263.7" font-size="7.6" fill="#ffff00" stroke="#ffff00" stroke-width="0.3" text-anchor="middle" transform="rotate(-90 844.6 263.7)" textLength="39.6" lengthAdjust="spacingAndGlyphs">10 handed</text>
<text x="852" y="263.7" font-size="5.2" fill="#ffff00" stroke="none" text-anchor="middle" font-weight="bold" transform="rotate(-90 852 263.7)" textLength="33.88" lengthAdjust="spacingAndGlyphs">KSR-SJP-441</text>
<path d="M845.5 289.4L845.5 381.4" stroke="#ff0000" stroke-width="1.2" />
<path d="M844 378L846.1 382.5L848.2 378Z" fill="#ff0000"/>
<path d="M850.5 384L850.5 390" stroke="#ff0000" stroke-width="1.2" />
<path d="M844.6 384.3L850.6 384.3" stroke="#ff0000" stroke-width="1.2" />
<rect x="884.35" y="238" width="16.5" height="51.4" fill="none" stroke="#ff0000" stroke-width="1.3" rx="8.25"/>
<path d="M892.5 238L892.5 289.4" stroke="#ff0000" stroke-width="1.2" />
<text x="891.6" y="263.7" font-size="7.6" fill="#ffff00" stroke="#ffff00" stroke-width="0.3" text-anchor="middle" transform="rotate(-90 891.6 263.7)">9</text>
<text x="899" y="263.7" font-size="5.2" fill="#ffff00" stroke="none" text-anchor="middle" font-weight="bold" transform="rotate(-90 899 263.7)" textLength="33.88" lengthAdjust="spacingAndGlyphs">KSR-SJP-441</text>
<path d="M892.5 289.4L892.5 381.4" stroke="#ff0000" stroke-width="1.2" />
<path d="M891 378L893.1 382.5L895.2 378Z" fill="#ff0000"/>
<path d="M897.5 384L897.5 390" stroke="#ff0000" stroke-width="1.2" />
<path d="M891.6 384.3L897.6 384.3" stroke="#ff0000" stroke-width="1.2" />
<rect x="940.15" y="238" width="16.5" height="51.4" fill="none" stroke="#ff0000" stroke-width="1.3" rx="8.25"/>
<path d="M948.5 238L948.5 289.4" stroke="#ff0000" stroke-width="1.2" />
<text x="947.4" y="263.7" font-size="7.6" fill="#ffff00" stroke="#ffff00" stroke-width="0.3" text-anchor="middle" transform="rotate(-90 947.4 263.7)">6</text>
<text x="954.8" y="263.7" font-size="5.2" fill="#ffff00" stroke="none" text-anchor="middle" font-weight="bold" transform="rotate(-90 954.8 263.7)" textLength="33.88" lengthAdjust="spacingAndGlyphs">KSR-SJP-441</text>
<path d="M948.5 289.4L948.5 381.4" stroke="#ff0000" stroke-width="1.2" />
<path d="M946.8 378L948.9 382.5L951 378Z" fill="#ff0000"/>
<path d="M952.5 384L952.5 390" stroke="#ff0000" stroke-width="1.2" />
<path d="M947.4 384.3L953.4 384.3" stroke="#ff0000" stroke-width="1.2" />
<rect x="986.25" y="238" width="16.5" height="51.4" fill="none" stroke="#ff0000" stroke-width="1.3" rx="8.25"/>
<path d="M994.5 238L994.5 289.4" stroke="#ff0000" stroke-width="1.2" />
<text x="993.5" y="263.7" font-size="7.6" fill="#ffff00" stroke="#ffff00" stroke-width="0.3" text-anchor="middle" transform="rotate(-90 993.5 263.7)" textLength="22" lengthAdjust="spacingAndGlyphs">- - -</text>
<text x="1000.9" y="263.7" font-size="5.2" fill="#ffff00" stroke="none" text-anchor="middle" font-weight="bold" transform="rotate(-90 1000.9 263.7)" textLength="43.12" lengthAdjust="spacingAndGlyphs">KSR-SJP- - - -</text>
<path d="M994.5 289.4L994.5 381.4" stroke="#ff0000" stroke-width="1.2" />
<path d="M992.9 378L995 382.5L997.1 378Z" fill="#ff0000"/>
<path d="M999.5 384L999.5 390" stroke="#ff0000" stroke-width="1.2" />
<path d="M993.5 384.3L999.5 384.3" stroke="#ff0000" stroke-width="1.2" />
<rect x="527.7" y="381.8" width="47.7" height="35.8" fill="none" stroke="#00ff00" stroke-width="1.1" rx="9" stroke-dasharray="3.8 2.2"/>
<rect x="575.4" y="381.8" width="26.4" height="35.8" fill="none" stroke="#00ff00" stroke-width="1.1" rx="9" stroke-dasharray="3.8 2.2"/>
<rect x="543.7" y="396.5" width="46" height="6.4" fill="#e6f6e0" stroke="none" stroke-width="1" />
<path d="M550.5 397.2L550.5 402.4" stroke="#b01010" stroke-width="1.2" />
<path d="M553.5 397.2L553.5 402.4" stroke="#b01010" stroke-width="1.2" />
<path d="M556.5 397.2L556.5 402.4" stroke="#b01010" stroke-width="1.2" />
<path d="M560.5 397.2L560.5 402.4" stroke="#b01010" stroke-width="1.2" />
<path d="M563.5 397.2L563.5 402.4" stroke="#b01010" stroke-width="1.2" />
<path d="M566.5 397.2L566.5 402.4" stroke="#b01010" stroke-width="1.2" />
<path d="M569.5 397.2L569.5 402.4" stroke="#b01010" stroke-width="1.2" />
<path d="M572.5 397.2L572.5 402.4" stroke="#b01010" stroke-width="1.2" />
<path d="M575.5 397.2L575.5 402.4" stroke="#b01010" stroke-width="1.2" />
<path d="M578.5 397.2L578.5 402.4" stroke="#b01010" stroke-width="1.2" />
<path d="M581.5 397.2L581.5 402.4" stroke="#b01010" stroke-width="1.2" />
<rect x="543.9" y="396.6" width="4.6" height="6.2" fill="#fff" stroke="#00ff00" stroke-width="1.2" />
<rect x="580.7" y="396.8" width="8.5" height="5.6" fill="#5de85d" stroke="none" stroke-width="1" />
<rect x="543.7" y="402.7" width="46.5" height="3" fill="#a0a0a0" stroke="none" stroke-width="1" />
<rect x="545.7" y="405.6" width="43" height="4.6" fill="url(#conc)" stroke="none" stroke-width="1" />
<path d="M543.7 402.7L543.7 410.7L569.2 410.7" stroke="#777" stroke-width="1.4" fill="none" />
<path d="M579.2 410.7L590.2 410.7L590.2 402.7" stroke="#888" stroke-width="1.3" fill="none" />
<path d="M549.2 406.5L560.2 406.5" stroke="#ff00ff" stroke-width="1.2" />
<path d="M549.2 409.5L564.2 409.5" stroke="#ff00ff" stroke-width="1.2" />
<path d="M579.2 409.5L588.2 409.5" stroke="#ff6060" stroke-width="1.2" />
<circle cx="544.7" cy="409.8" r="1.3" fill="none" stroke="#777"/>
<rect x="571.4" y="410.5" width="7" height="112" fill="url(#conc)" stroke="none" stroke-width="1" />
<path d="M568.5 410.5L568.5 522" stroke="#ff0000" stroke-width="1.2" />
<path d="M578.5 410.5L578.5 522" stroke="#ff00ff" stroke-width="1.2" />
<path d="M569.5 412L569.5 522" stroke="#00ffff" stroke-width="1.2" stroke-dasharray="5 3"/>
<path d="M571.5 410L571.5 447" stroke="#00ff00" stroke-width="1.4" />
<path d="M579.5 410.5L579.5 428" stroke="#ff0000" stroke-width="1.2" />
<path d="M581.8 410.5L581.8 427L584.5 427L584.5 441" stroke="#777" stroke-width="1.6" fill="none" />
<path d="M584.5 441L584.5 522" stroke="#1a1aff" stroke-width="1.3" />
<path d="M545.5 432L545.5 445" stroke="#ff0000" stroke-width="1.2" />
<path d="M545.5 423L545.5 424.3" stroke="#ff0000" stroke-width="1.2" />
<path d="M588.5 432L588.5 445" stroke="#ff0000" stroke-width="1.2" />
<path d="M588.5 423L588.5 424.3" stroke="#ff0000" stroke-width="1.2" />
<rect x="630" y="381.8" width="47.7" height="35.8" fill="none" stroke="#00ff00" stroke-width="1.1" rx="9" stroke-dasharray="3.8 2.2"/>
<rect x="677.7" y="381.8" width="26.4" height="35.8" fill="none" stroke="#00ff00" stroke-width="1.1" rx="9" stroke-dasharray="3.8 2.2"/>
<rect x="646.2" y="401.6" width="46" height="3.2" fill="#a4a4a4" stroke="none" stroke-width="1" />
<rect x="648" y="404.8" width="42.5" height="4.8" fill="url(#conc)" stroke="none" stroke-width="1" />
<path d="M646 401.8L646 411.2" stroke="#00ff00" stroke-width="2" />
<path d="M647.5 410.2L670.2 410.2" stroke="#ff0000" stroke-width="1.3" fill="none" />
<path d="M680.5 410.2L692.1 410.2L692.1 402" stroke="#ff0000" stroke-width="1.2" fill="none" />
<path d="M649.5 409.5L668.5 409.5" stroke="#ff00ff" stroke-width="1.2" />
<path d="M680.5 409.5L690.5 409.5" stroke="#ff00ff" stroke-width="1.2" />
<path d="M688.5 404.5L691.9 401.6" stroke="#00ff00" stroke-width="1.6" />
<path d="M647.5 402.5L649.5 405" stroke="#ffff00" stroke-width="1.2" />
<rect x="673.7" y="410.5" width="7" height="112" fill="url(#conc)" stroke="none" stroke-width="1" />
<path d="M670.5 410.5L670.5 522" stroke="#ff0000" stroke-width="1.2" />
<path d="M680.5 410.5L680.5 522" stroke="#ff00ff" stroke-width="1.2" />
<path d="M672.5 412L672.5 522" stroke="#00ffff" stroke-width="1.2" stroke-dasharray="5 3"/>
<path d="M673.5 410.5L673.5 455" stroke="#00ff00" stroke-width="1.2" />
<path d="M683.2 410.5L683.2 428L686.2 428" stroke="#1a1aff" stroke-width="1.3" fill="none" />
<path d="M683.2 418L686.2 418L686.2 522" stroke="#1a1aff" stroke-width="1.3" fill="none" />
<path d="M647.5 432L647.5 445" stroke="#ff0000" stroke-width="1.2" />
<path d="M647.5 423L647.5 424.3" stroke="#ff0000" stroke-width="1.2" />
<path d="M690.5 432L690.5 445" stroke="#ff0000" stroke-width="1.2" />
<path d="M690.5 423L690.5 424.3" stroke="#ff0000" stroke-width="1.2" />
<rect x="732.2" y="381.8" width="47.7" height="35.8" fill="none" stroke="#00ff00" stroke-width="1.1" rx="9" stroke-dasharray="3.8 2.2"/>
<rect x="779.9" y="381.8" width="26.4" height="35.8" fill="none" stroke="#00ff00" stroke-width="1.1" rx="9" stroke-dasharray="3.8 2.2"/>
<rect x="748.2" y="396.5" width="46" height="6.4" fill="#e6f6e0" stroke="none" stroke-width="1" />
<path d="M755.5 397.2L755.5 402.4" stroke="#b01010" stroke-width="1.2" />
<path d="M758.5 397.2L758.5 402.4" stroke="#b01010" stroke-width="1.2" />
<path d="M761.5 397.2L761.5 402.4" stroke="#b01010" stroke-width="1.2" />
<path d="M764.5 397.2L764.5 402.4" stroke="#b01010" stroke-width="1.2" />
<path d="M767.5 397.2L767.5 402.4" stroke="#b01010" stroke-width="1.2" />
<path d="M770.5 397.2L770.5 402.4" stroke="#b01010" stroke-width="1.2" />
<path d="M773.5 397.2L773.5 402.4" stroke="#b01010" stroke-width="1.2" />
<path d="M776.5 397.2L776.5 402.4" stroke="#b01010" stroke-width="1.2" />
<path d="M780.5 397.2L780.5 402.4" stroke="#b01010" stroke-width="1.2" />
<path d="M783.5 397.2L783.5 402.4" stroke="#b01010" stroke-width="1.2" />
<path d="M786.5 397.2L786.5 402.4" stroke="#b01010" stroke-width="1.2" />
<rect x="748.4" y="396.6" width="4.6" height="6.2" fill="#fff" stroke="#00ff00" stroke-width="1.2" />
<rect x="785.2" y="396.8" width="8.5" height="5.6" fill="#5de85d" stroke="none" stroke-width="1" />
<rect x="748.2" y="402.7" width="46.5" height="3" fill="#a0a0a0" stroke="none" stroke-width="1" />
<rect x="750.2" y="405.6" width="43" height="4.6" fill="url(#conc)" stroke="none" stroke-width="1" />
<path d="M748.2 402.7L748.2 410.7L773.7 410.7" stroke="#777" stroke-width="1.4" fill="none" />
<path d="M783.7 410.7L794.7 410.7L794.7 402.7" stroke="#888" stroke-width="1.3" fill="none" />
<path d="M753.7 406.5L764.7 406.5" stroke="#ff00ff" stroke-width="1.2" />
<path d="M753.7 409.5L768.7 409.5" stroke="#ff00ff" stroke-width="1.2" />
<path d="M783.7 409.5L792.7 409.5" stroke="#ff6060" stroke-width="1.2" />
<circle cx="749.2" cy="409.8" r="1.3" fill="none" stroke="#777"/>
<rect x="775.9" y="410.5" width="7" height="112" fill="url(#conc)" stroke="none" stroke-width="1" />
<path d="M772.5 410.5L772.5 522" stroke="#ff0000" stroke-width="1.2" />
<path d="M782.5 410.5L782.5 522" stroke="#ff00ff" stroke-width="1.2" />
<path d="M774.5 412L774.5 522" stroke="#00ffff" stroke-width="1.2" stroke-dasharray="5 3"/>
<path d="M775.5 410L775.5 447" stroke="#00ff00" stroke-width="1.4" />
<path d="M784.5 410.5L784.5 428" stroke="#ff0000" stroke-width="1.2" />
<path d="M786.3 410.5L786.3 427L789 427L789 441" stroke="#777" stroke-width="1.6" fill="none" />
<path d="M788.5 441L788.5 522" stroke="#1a1aff" stroke-width="1.3" />
<path d="M749.5 432L749.5 445" stroke="#ff0000" stroke-width="1.2" />
<path d="M749.5 423L749.5 424.3" stroke="#ff0000" stroke-width="1.2" />
<path d="M792.5 432L792.5 445" stroke="#ff0000" stroke-width="1.2" />
<path d="M792.5 423L792.5 424.3" stroke="#ff0000" stroke-width="1.2" />
<rect x="835" y="381.8" width="47.7" height="35.8" fill="none" stroke="#00ff00" stroke-width="1.1" rx="9" stroke-dasharray="3.8 2.2"/>
<rect x="882.7" y="381.8" width="26.4" height="35.8" fill="none" stroke="#00ff00" stroke-width="1.1" rx="9" stroke-dasharray="3.8 2.2"/>
<rect x="851.2" y="401.6" width="46" height="3.2" fill="#a4a4a4" stroke="none" stroke-width="1" />
<rect x="853" y="404.8" width="42.5" height="4.8" fill="url(#conc)" stroke="none" stroke-width="1" />
<path d="M851 401.8L851 411.2" stroke="#00ff00" stroke-width="2" />
<path d="M852.5 410.2L875.2 410.2" stroke="#ff0000" stroke-width="1.3" fill="none" />
<path d="M885.5 410.2L897.1 410.2L897.1 402" stroke="#ff0000" stroke-width="1.2" fill="none" />
<path d="M854.5 409.5L873.5 409.5" stroke="#ff00ff" stroke-width="1.2" />
<path d="M885.5 409.5L895.5 409.5" stroke="#ff00ff" stroke-width="1.2" />
<path d="M893.5 404.5L896.9 401.6" stroke="#00ff00" stroke-width="1.6" />
<path d="M852.5 402.5L854.5 405" stroke="#ffff00" stroke-width="1.2" />
<rect x="878.7" y="410.5" width="7" height="112" fill="url(#conc)" stroke="none" stroke-width="1" />
<path d="M875.5 410.5L875.5 522" stroke="#ff0000" stroke-width="1.2" />
<path d="M885.5 410.5L885.5 522" stroke="#ff00ff" stroke-width="1.2" />
<path d="M877.5 412L877.5 522" stroke="#00ffff" stroke-width="1.2" stroke-dasharray="5 3"/>
<path d="M878.5 410.5L878.5 455" stroke="#00ff00" stroke-width="1.2" />
<path d="M888.2 410.5L888.2 428L891.2 428" stroke="#1a1aff" stroke-width="1.3" fill="none" />
<path d="M888.2 418L891.2 418L891.2 522" stroke="#1a1aff" stroke-width="1.3" fill="none" />
<path d="M852.5 432L852.5 445" stroke="#ff0000" stroke-width="1.2" />
<path d="M852.5 423L852.5 424.3" stroke="#ff0000" stroke-width="1.2" />
<path d="M895.5 432L895.5 445" stroke="#ff0000" stroke-width="1.2" />
<path d="M895.5 423L895.5 424.3" stroke="#ff0000" stroke-width="1.2" />
<rect x="937.2" y="381.8" width="47.7" height="35.8" fill="none" stroke="#00ff00" stroke-width="1.1" rx="9" stroke-dasharray="3.8 2.2"/>
<rect x="984.9" y="381.8" width="26.4" height="35.8" fill="none" stroke="#00ff00" stroke-width="1.1" rx="9" stroke-dasharray="3.8 2.2"/>
<rect x="953.2" y="396.5" width="46" height="6.4" fill="#e6f6e0" stroke="none" stroke-width="1" />
<path d="M960.5 397.2L960.5 402.4" stroke="#b01010" stroke-width="1.2" />
<path d="M963.5 397.2L963.5 402.4" stroke="#b01010" stroke-width="1.2" />
<path d="M966.5 397.2L966.5 402.4" stroke="#b01010" stroke-width="1.2" />
<path d="M969.5 397.2L969.5 402.4" stroke="#b01010" stroke-width="1.2" />
<path d="M972.5 397.2L972.5 402.4" stroke="#b01010" stroke-width="1.2" />
<path d="M975.5 397.2L975.5 402.4" stroke="#b01010" stroke-width="1.2" />
<path d="M978.5 397.2L978.5 402.4" stroke="#b01010" stroke-width="1.2" />
<path d="M981.5 397.2L981.5 402.4" stroke="#b01010" stroke-width="1.2" />
<path d="M985.5 397.2L985.5 402.4" stroke="#b01010" stroke-width="1.2" />
<path d="M988.5 397.2L988.5 402.4" stroke="#b01010" stroke-width="1.2" />
<path d="M991.5 397.2L991.5 402.4" stroke="#b01010" stroke-width="1.2" />
<rect x="953.4" y="396.6" width="4.6" height="6.2" fill="#fff" stroke="#00ff00" stroke-width="1.2" />
<rect x="990.2" y="396.8" width="8.5" height="5.6" fill="#5de85d" stroke="none" stroke-width="1" />
<rect x="953.2" y="402.7" width="46.5" height="3" fill="#a0a0a0" stroke="none" stroke-width="1" />
<rect x="955.2" y="405.6" width="43" height="4.6" fill="url(#conc)" stroke="none" stroke-width="1" />
<path d="M953.2 402.7L953.2 410.7L978.7 410.7" stroke="#777" stroke-width="1.4" fill="none" />
<path d="M988.7 410.7L999.7 410.7L999.7 402.7" stroke="#888" stroke-width="1.3" fill="none" />
<path d="M958.7 406.5L969.7 406.5" stroke="#ff00ff" stroke-width="1.2" />
<path d="M958.7 409.5L973.7 409.5" stroke="#ff00ff" stroke-width="1.2" />
<path d="M988.7 409.5L997.7 409.5" stroke="#ff6060" stroke-width="1.2" />
<circle cx="954.2" cy="409.8" r="1.3" fill="none" stroke="#777"/>
<rect x="980.9" y="410.5" width="7" height="112" fill="url(#conc)" stroke="none" stroke-width="1" />
<path d="M977.5 410.5L977.5 522" stroke="#ff0000" stroke-width="1.2" />
<path d="M987.5 410.5L987.5 522" stroke="#ff00ff" stroke-width="1.2" />
<path d="M979.5 412L979.5 522" stroke="#00ffff" stroke-width="1.2" stroke-dasharray="5 3"/>
<path d="M980.5 410L980.5 447" stroke="#00ff00" stroke-width="1.4" />
<path d="M989.5 410.5L989.5 428" stroke="#ff0000" stroke-width="1.2" />
<path d="M991.3 410.5L991.3 427L994 427L994 441" stroke="#777" stroke-width="1.6" fill="none" />
<path d="M993.5 441L993.5 522" stroke="#1a1aff" stroke-width="1.3" />
<path d="M954.5 432L954.5 445" stroke="#ff0000" stroke-width="1.2" />
<path d="M954.5 423L954.5 424.3" stroke="#ff0000" stroke-width="1.2" />
<path d="M997.5 432L997.5 445" stroke="#ff0000" stroke-width="1.2" />
<path d="M997.5 423L997.5 424.3" stroke="#ff0000" stroke-width="1.2" />
<rect x="425.2" y="381.7" width="47.6" height="35.4" fill="none" stroke="#00ff00" stroke-width="1.1" rx="9" stroke-dasharray="3.8 2.2"/>
<rect x="472.8" y="381.7" width="26.2" height="35.4" fill="none" stroke="#00ff00" stroke-width="1.1" rx="9" stroke-dasharray="3.8 2.2"/>
<rect x="450" y="396.5" width="36" height="6" fill="#fbeee6" stroke="none" stroke-width="1" />
<path d="M450.5 396.5L450.5 410" stroke="#c01010" stroke-width="1.3" />
<path d="M452.5 397.2L452.5 402.2" stroke="#ff0000" stroke-width="1.2" />
<path d="M455.5 397.2L455.5 402.2" stroke="#ff0000" stroke-width="1.2" />
<path d="M458.5 397.2L458.5 402.2" stroke="#ff0000" stroke-width="1.2" />
<path d="M461.5 397.2L461.5 402.2" stroke="#ff0000" stroke-width="1.2" />
<path d="M464.5 397.2L464.5 402.2" stroke="#ff0000" stroke-width="1.2" />
<path d="M467.5 397.2L467.5 402.2" stroke="#ff0000" stroke-width="1.2" />
<path d="M470.5 397.2L470.5 402.2" stroke="#ff0000" stroke-width="1.2" />
<path d="M472.5 397.2L472.5 402.2" stroke="#ff0000" stroke-width="1.2" />
<path d="M475.5 397.2L475.5 402.2" stroke="#ff0000" stroke-width="1.2" />
<path d="M478.5 397.2L478.5 402.2" stroke="#00ff00" stroke-width="1.2" />
<path d="M481.5 397.2L481.5 402.2" stroke="#00ff00" stroke-width="1.2" />
<path d="M483.5 397.2L483.5 402.2" stroke="#00ff00" stroke-width="1.2" />
<path d="M463.5 398L463.5 402.5" stroke="#ffff00" stroke-width="1.2" />
<rect x="444.6" y="396.5" width="5.4" height="15.3" fill="#fff" stroke="#00ff00" stroke-width="1.3" rx="2.6"/>
<path d="M421 403.5L444 403.5" stroke="#ffff00" stroke-width="2.6" />
<path d="M420 403.4L424 401.200V405.600Z" fill="#ffff00"/>
<circle cx="444" cy="403.4" r="0.9" fill="#ff0000"/><circle cx="443.6" cy="409.6" r="0.9" fill="#ff0000"/>
<path d="M443.5 394.6L443.5 384.4L458.3 384.4" stroke="#ff0000" stroke-width="1.2" fill="none" />
<path d="M442 386L445 383" stroke="#ff0000" stroke-width="1.2" />
<path d="M456.8 386L459.8 383" stroke="#ff0000" stroke-width="1.2" />
<text x="452" y="390" font-size="4" fill="#ffff00" stroke="none" text-anchor="middle" font-weight="bold">300</text>
<path d="M452 403.5L486 403.5" stroke="#a8a8a8" stroke-width="1.4" />
<rect x="451" y="404.9" width="35" height="5" fill="#fff" stroke="none" stroke-width="1" />
<rect x="462.5" y="405" width="8.5" height="6" fill="url(#conc)" stroke="none" stroke-width="1" />
<path d="M450.5 404.9L486.5 404.9" stroke="#ff00ff" stroke-width="1.2" fill="none" />
<path d="M471.3 404.9L486.1 404.9L486.1 410L471.3 410" stroke="#ff00ff" stroke-width="1.2" fill="none" />
<path d="M450.5 409.6L461 409.6" stroke="#ff0000" stroke-width="1.4" fill="none" />
<path d="M450.5 404.9L450.5 410" stroke="#ff0000" stroke-width="1.2" />
<rect x="486.2" y="404.5" width="1.6" height="5.5" fill="#999" stroke="none" stroke-width="1" />
<rect x="462.4" y="410.5" width="8.3" height="112" fill="url(#conc)" stroke="none" stroke-width="1" />
<path d="M461.5 410.5L461.5 522" stroke="#a0a0a0" stroke-width="1.2" />
<path d="M462.5 405L462.5 522" stroke="#ff00ff" stroke-width="1.2" />
<path d="M470.5 410L470.5 522" stroke="#ff00ff" stroke-width="1.2" />
<path d="M458.5 410.5L458.5 522" stroke="#ff0000" stroke-width="1.2" stroke-dasharray="6 2"/>
<path d="M459.5 413L459.5 522" stroke="#00ffff" stroke-width="1.2" stroke-dasharray="5 3"/>
<path d="M455 411L455 462" stroke="#00ff00" stroke-width="2" />
<path d="M472.2 410.5L472.2 427L474.7 428L474.7 522" stroke="#5a5a9a" stroke-width="1.5" fill="none" />
<path d="M460 412C463 411 466 412 467 415M461 414C463 413.5 465 414 466 416" stroke="#777" stroke-width="1.2" fill="none"/>
<path d="M485.5 432L485.5 445" stroke="#ff0000" stroke-width="1.2" />
<path d="M485.5 423L485.5 424.3" stroke="#ff0000" stroke-width="1.2" />
<path d="M470 444.5L1078 444.5" stroke="#ff0000" stroke-width="1.2" />
<path d="M476.5 447L480.5 443" stroke="#ff0000" stroke-width="1.2" />
<path d="M586.2 447L590.2 443" stroke="#ff0000" stroke-width="1.2" />
<path d="M688.5 447L692.5 443" stroke="#ff0000" stroke-width="1.2" />
<path d="M790.7 447L794.7 443" stroke="#ff0000" stroke-width="1.2" />
<path d="M893.5 447L897.5 443" stroke="#ff0000" stroke-width="1.2" />
<path d="M995.7 447L999.7 443" stroke="#ff0000" stroke-width="1.2" />
<path d="M543.2 447L547.2 443" stroke="#ff0000" stroke-width="1.2" />
<path d="M645.5 447L649.5 443" stroke="#ff0000" stroke-width="1.2" />
<path d="M747.7 447L751.7 443" stroke="#ff0000" stroke-width="1.2" />
<path d="M850.5 447L854.5 443" stroke="#ff0000" stroke-width="1.2" />
<path d="M952.7 447L956.7 443" stroke="#ff0000" stroke-width="1.2" />
<path d="M353.6 508.5L1078 508.5" stroke="#ff0000" stroke-width="1.2" />
<path d="M352 510.2L355.2 506.8" stroke="#ff0000" stroke-width="1.2" />
<path d="M354.5 510.2L357.7 506.8" stroke="#ff0000" stroke-width="1.2" />
<path d="M362 510.2L365.2 506.8" stroke="#ff0000" stroke-width="1.2" />
<path d="M368 510.2L371.2 506.8" stroke="#ff0000" stroke-width="1.2" />
<path d="M356.5 505L356.5 512" stroke="#ff0000" stroke-width="1.2" />
<path d="M369.5 505L369.5 512" stroke="#ff0000" stroke-width="1.2" />
<path d="M456.9 510.2L460.1 506.8" stroke="#ff0000" stroke-width="1.2" />
<path d="M459.4 510.2L462.6 506.8" stroke="#ff0000" stroke-width="1.2" />
<path d="M466.9 510.2L470.1 506.8" stroke="#ff0000" stroke-width="1.2" />
<path d="M472.9 510.2L476.1 506.8" stroke="#ff0000" stroke-width="1.2" />
<path d="M461.5 505L461.5 512" stroke="#ff0000" stroke-width="1.2" />
<path d="M474.5 505L474.5 512" stroke="#ff0000" stroke-width="1.2" />
<path d="M566.6 510.2L569.8 506.8" stroke="#ff0000" stroke-width="1.2" />
<path d="M569.1 510.2L572.3 506.8" stroke="#ff0000" stroke-width="1.2" />
<path d="M576.6 510.2L579.8 506.8" stroke="#ff0000" stroke-width="1.2" />
<path d="M582.6 510.2L585.8 506.8" stroke="#ff0000" stroke-width="1.2" />
<path d="M570.5 505L570.5 512" stroke="#ff0000" stroke-width="1.2" />
<path d="M584.5 505L584.5 512" stroke="#ff0000" stroke-width="1.2" />
<path d="M668.9 510.2L672.1 506.8" stroke="#ff0000" stroke-width="1.2" />
<path d="M671.4 510.2L674.6 506.8" stroke="#ff0000" stroke-width="1.2" />
<path d="M678.9 510.2L682.1 506.8" stroke="#ff0000" stroke-width="1.2" />
<path d="M684.9 510.2L688.1 506.8" stroke="#ff0000" stroke-width="1.2" />
<path d="M673.5 505L673.5 512" stroke="#ff0000" stroke-width="1.2" />
<path d="M686.5 505L686.5 512" stroke="#ff0000" stroke-width="1.2" />
<path d="M771.1 510.2L774.3 506.8" stroke="#ff0000" stroke-width="1.2" />
<path d="M773.6 510.2L776.8 506.8" stroke="#ff0000" stroke-width="1.2" />
<path d="M781.1 510.2L784.3 506.8" stroke="#ff0000" stroke-width="1.2" />
<path d="M787.1 510.2L790.3 506.8" stroke="#ff0000" stroke-width="1.2" />
<path d="M775.5 505L775.5 512" stroke="#ff0000" stroke-width="1.2" />
<path d="M788.5 505L788.5 512" stroke="#ff0000" stroke-width="1.2" />
<path d="M873.9 510.2L877.1 506.8" stroke="#ff0000" stroke-width="1.2" />
<path d="M876.4 510.2L879.6 506.8" stroke="#ff0000" stroke-width="1.2" />
<path d="M883.9 510.2L887.1 506.8" stroke="#ff0000" stroke-width="1.2" />
<path d="M889.9 510.2L893.1 506.8" stroke="#ff0000" stroke-width="1.2" />
<path d="M878.5 505L878.5 512" stroke="#ff0000" stroke-width="1.2" />
<path d="M891.5 505L891.5 512" stroke="#ff0000" stroke-width="1.2" />
<path d="M976.1 510.2L979.3 506.8" stroke="#ff0000" stroke-width="1.2" />
<path d="M978.6 510.2L981.8 506.8" stroke="#ff0000" stroke-width="1.2" />
<path d="M986.1 510.2L989.3 506.8" stroke="#ff0000" stroke-width="1.2" />
<path d="M992.1 510.2L995.3 506.8" stroke="#ff0000" stroke-width="1.2" />
<path d="M980.5 505L980.5 512" stroke="#ff0000" stroke-width="1.2" />
<path d="M993.5 505L993.5 512" stroke="#ff0000" stroke-width="1.2" />
<path d="M1075.6 510.2L1078.8 506.8" stroke="#ff0000" stroke-width="1.2" />
<text x="513.35" y="515" font-size="4.2" fill="#ffff00" stroke="none" text-anchor="middle" font-weight="bold">3445</text>
<text x="518.35" y="450.6" font-size="4.2" fill="#ffff00" stroke="none" text-anchor="middle" font-weight="bold">2441</text>
<text x="518.35" y="390.5" font-size="4.2" fill="#ffff00" stroke="none" text-anchor="middle" font-weight="bold">2441</text>
<text x="461.5" y="450.6" font-size="4" fill="#ffff00" stroke="none" text-anchor="start" font-weight="bold">175</text>
<text x="556.2" y="450.6" font-size="4" fill="#ffff00" stroke="none" text-anchor="end" font-weight="bold">200</text>
<text x="461.5" y="515" font-size="4" fill="#ffff00" stroke="none" text-anchor="start" font-weight="bold">300</text>
<text x="471.5" y="513" font-size="4" fill="#ffff00" stroke="none" text-anchor="start" font-weight="bold">150</text>
<text x="456.5" y="513" font-size="4" fill="#ffff00" stroke="none" text-anchor="end" font-weight="bold">050</text>
<text x="554.2" y="390.5" font-size="4" fill="#ffff00" stroke="none" text-anchor="end" font-weight="bold">300</text>
<text x="619.35" y="515" font-size="4.2" fill="#ffff00" stroke="none" text-anchor="middle" font-weight="bold">3445</text>
<text x="624.35" y="450.6" font-size="4.2" fill="#ffff00" stroke="none" text-anchor="middle" font-weight="bold">2441</text>
<text x="624.35" y="390.5" font-size="4.2" fill="#ffff00" stroke="none" text-anchor="middle" font-weight="bold">2441</text>
<text x="571.2" y="450.6" font-size="4" fill="#ffff00" stroke="none" text-anchor="start" font-weight="bold">175</text>
<text x="658.5" y="450.6" font-size="4" fill="#ffff00" stroke="none" text-anchor="end" font-weight="bold">200</text>
<text x="571.2" y="515" font-size="4" fill="#ffff00" stroke="none" text-anchor="start" font-weight="bold">300</text>
<text x="581.2" y="513" font-size="4" fill="#ffff00" stroke="none" text-anchor="start" font-weight="bold">150</text>
<text x="566.2" y="513" font-size="4" fill="#ffff00" stroke="none" text-anchor="end" font-weight="bold">050</text>
<text x="656.5" y="390.5" font-size="4" fill="#ffff00" stroke="none" text-anchor="end" font-weight="bold">300</text>
<text x="721.6" y="515" font-size="4.2" fill="#ffff00" stroke="none" text-anchor="middle" font-weight="bold">3445</text>
<text x="726.6" y="450.6" font-size="4.2" fill="#ffff00" stroke="none" text-anchor="middle" font-weight="bold">2441</text>
<text x="726.6" y="390.5" font-size="4.2" fill="#ffff00" stroke="none" text-anchor="middle" font-weight="bold">2441</text>
<text x="673.5" y="450.6" font-size="4" fill="#ffff00" stroke="none" text-anchor="start" font-weight="bold">175</text>
<text x="760.7" y="450.6" font-size="4" fill="#ffff00" stroke="none" text-anchor="end" font-weight="bold">200</text>
<text x="673.5" y="515" font-size="4" fill="#ffff00" stroke="none" text-anchor="start" font-weight="bold">300</text>
<text x="683.5" y="513" font-size="4" fill="#ffff00" stroke="none" text-anchor="start" font-weight="bold">150</text>
<text x="668.5" y="513" font-size="4" fill="#ffff00" stroke="none" text-anchor="end" font-weight="bold">050</text>
<text x="758.7" y="390.5" font-size="4" fill="#ffff00" stroke="none" text-anchor="end" font-weight="bold">300</text>
<text x="824.1" y="515" font-size="4.2" fill="#ffff00" stroke="none" text-anchor="middle" font-weight="bold">3445</text>
<text x="829.1" y="450.6" font-size="4.2" fill="#ffff00" stroke="none" text-anchor="middle" font-weight="bold">2441</text>
<text x="829.1" y="390.5" font-size="4.2" fill="#ffff00" stroke="none" text-anchor="middle" font-weight="bold">2441</text>
<text x="775.7" y="450.6" font-size="4" fill="#ffff00" stroke="none" text-anchor="start" font-weight="bold">175</text>
<text x="863.5" y="450.6" font-size="4" fill="#ffff00" stroke="none" text-anchor="end" font-weight="bold">200</text>
<text x="775.7" y="515" font-size="4" fill="#ffff00" stroke="none" text-anchor="start" font-weight="bold">300</text>
<text x="785.7" y="513" font-size="4" fill="#ffff00" stroke="none" text-anchor="start" font-weight="bold">150</text>
<text x="770.7" y="513" font-size="4" fill="#ffff00" stroke="none" text-anchor="end" font-weight="bold">050</text>
<text x="861.5" y="390.5" font-size="4" fill="#ffff00" stroke="none" text-anchor="end" font-weight="bold">300</text>
<text x="926.6" y="515" font-size="4.2" fill="#ffff00" stroke="none" text-anchor="middle" font-weight="bold">3445</text>
<text x="931.6" y="450.6" font-size="4.2" fill="#ffff00" stroke="none" text-anchor="middle" font-weight="bold">2441</text>
<text x="931.6" y="390.5" font-size="4.2" fill="#ffff00" stroke="none" text-anchor="middle" font-weight="bold">2441</text>
<text x="878.5" y="450.6" font-size="4" fill="#ffff00" stroke="none" text-anchor="start" font-weight="bold">175</text>
<text x="965.7" y="450.6" font-size="4" fill="#ffff00" stroke="none" text-anchor="end" font-weight="bold">200</text>
<text x="878.5" y="515" font-size="4" fill="#ffff00" stroke="none" text-anchor="start" font-weight="bold">300</text>
<text x="888.5" y="513" font-size="4" fill="#ffff00" stroke="none" text-anchor="start" font-weight="bold">150</text>
<text x="873.5" y="513" font-size="4" fill="#ffff00" stroke="none" text-anchor="end" font-weight="bold">050</text>
<text x="963.7" y="390.5" font-size="4" fill="#ffff00" stroke="none" text-anchor="end" font-weight="bold">300</text>
<text x="1027.45" y="515" font-size="4.2" fill="#ffff00" stroke="none" text-anchor="middle" font-weight="bold">3445</text>
<text x="1032.45" y="450.6" font-size="4.2" fill="#ffff00" stroke="none" text-anchor="middle" font-weight="bold">2441</text>
<text x="1032.45" y="390.5" font-size="4.2" fill="#ffff00" stroke="none" text-anchor="middle" font-weight="bold">2441</text>
<text x="980.7" y="450.6" font-size="4" fill="#ffff00" stroke="none" text-anchor="start" font-weight="bold">175</text>
<text x="1065.2" y="450.6" font-size="4" fill="#ffff00" stroke="none" text-anchor="end" font-weight="bold">200</text>
<text x="980.7" y="515" font-size="4" fill="#ffff00" stroke="none" text-anchor="start" font-weight="bold">300</text>
<text x="990.7" y="513" font-size="4" fill="#ffff00" stroke="none" text-anchor="start" font-weight="bold">150</text>
<text x="975.7" y="513" font-size="4" fill="#ffff00" stroke="none" text-anchor="end" font-weight="bold">050</text>
<text x="1063.2" y="390.5" font-size="4" fill="#ffff00" stroke="none" text-anchor="end" font-weight="bold">300</text>
<rect x="333" y="396.3" width="48.3" height="93" fill="none" stroke="#00ff00" stroke-width="1.2" rx="8" stroke-dasharray="2.6 2.1"/>
<rect x="449" y="445.5" width="26.4" height="36" fill="none" stroke="#00ff00" stroke-width="1.2" rx="11" stroke-dasharray="2.6 2.1"/>
<rect x="1062.4" y="381.9" width="27" height="36" fill="none" stroke="#00ff00" stroke-width="1.1" rx="10" stroke-dasharray="3.8 2.2"/>
<path d="M362.7 399L366 398.6L368.2 407L374.7 457L365.3 464L364.8 408" stroke="#1a1aff" stroke-width="1.2" fill="none" />
<path d="M362.7 399L364.8 408L368.2 407" stroke="#1a1aff" stroke-width="1.2" fill="none" />
<path d="M365.5 411H369.82L368.82 413.6H366.2Z" fill="#8c8c8c"/>
<path d="M365.5 418.5H370.39L369.39 421.1H366.2Z" fill="#8c8c8c"/>
<path d="M365.5 426H370.95L369.95 428.6H366.2Z" fill="#8c8c8c"/>
<path d="M365.5 433.5H371.51L370.51 436.1H366.2Z" fill="#8c8c8c"/>
<path d="M365.5 441H372.07L371.07 443.6H366.2Z" fill="#8c8c8c"/>
<path d="M365.5 449H372.68L371.68 451.6H366.2Z" fill="#8c8c8c"/>
<path d="M366 449.5L372 449.5" stroke="#ffff00" stroke-width="1.5" />
<path d="M335.4 463L350.7 463L354 459.3L379.6 459.3L379.6 471.8L359.5 471.8" stroke="#ff0000" stroke-width="1.4" fill="none" />
<path d="M335.4 463L335.4 470.7L354 470.7" stroke="#ff0000" stroke-width="1.6" fill="none" />
<rect x="337" y="464.5" width="16" height="5.5" fill="url(#conc)" stroke="none" stroke-width="1" />
<rect x="354" y="464.5" width="25" height="5" fill="url(#conc)" stroke="none" stroke-width="1" />
<rect x="337.5" y="466" width="13" height="4" fill="url(#herr)" stroke="none" stroke-width="1" />
<rect x="380" y="460.8" width="72.4" height="3.8" fill="#ff0000" stroke="none" stroke-width="1" />
<path d="M380 459.5L452 459.5" stroke="#ff0000" stroke-width="1.2" />
<path d="M380 465.5L452 465.5" stroke="#ff5a5a" stroke-width="1.2" />
<path d="M380 467.5L452 467.5" stroke="#ff8080" stroke-width="1.2" />
<path d="M380 471.5L452 471.5" stroke="#ff0000" stroke-width="1.2" />
<path d="M452.4 458.5L452.4 472.5L455 472.5L455 465L460.5 465" stroke="#ff0000" stroke-width="1.4" fill="none" />
<path d="M317 475.5L340.8 475.5" stroke="#ffff00" stroke-width="1.8" />
<circle cx="316.4" cy="475.5" r="1.7" fill="#ff0000"/>
<path d="M349.5 476L349.5 522" stroke="#ffff00" stroke-width="1.6" />
<rect x="354.2" y="471.8" width="5.2" height="50.5" fill="url(#conc)" stroke="none" stroke-width="1" />
<path d="M353.5 471.8L353.5 522" stroke="#ff0000" stroke-width="1.2" />
<path d="M359.5 471.8L359.5 522" stroke="#ff00ff" stroke-width="1.2" />
<path d="M366 474L366 482L367 483L367 522" stroke="#8a8a8a" stroke-width="1.2" fill="none" />
<path d="M359.8 475L365.5 475" stroke="#ff0000" stroke-width="1.2" fill="none" />
<path d="M1022 212.8L1038 212.8L1041.5 313L1026.3 313Z" fill="url(#herr)"/>
<path d="M1022 212.8L1026.3 313" stroke="#00ff00" stroke-width="1.2" />
<rect x="1052" y="212.8" width="7.6" height="100.2" fill="url(#conc)" stroke="none" stroke-width="1" />
<path d="M1052.5 212.8L1052.5 313" stroke="#ff00ff" stroke-width="1.2" />
<path d="M1059.5 212.8L1059.5 313" stroke="#ff00ff" stroke-width="1.2" />
<rect x="1025.5" y="313" width="34" height="9" fill="url(#conc)" stroke="none" stroke-width="1" />
<rect x="1076" y="313" width="26" height="9" fill="url(#conc)" stroke="none" stroke-width="1" />
<rect x="1093" y="322" width="9" height="97" fill="url(#conc)" stroke="none" stroke-width="1" />
<rect x="1025.5" y="337.6" width="67.5" height="7.4" fill="url(#conc)" stroke="none" stroke-width="1" />
<rect x="1084" y="419" width="7" height="104" fill="url(#conc)" stroke="none" stroke-width="1" />
<rect x="1059.6" y="313" width="16.4" height="9" fill="#fff" stroke="#ff0000" stroke-width="1.2" />
<path d="M1059.6 313L1025.5 313L1025.5 322L1093 322L1093 337.6L1028.5 337.6" stroke="#ff00ff" stroke-width="1.2" fill="none" />
<path d="M1076 313L1102.3 313L1102.3 366.2L1144 366.2" stroke="#ff00ff" stroke-width="1.2" fill="none" />
<path d="M1144 372.3L1100.9 372.3L1100.9 419L1090.4 419L1090.4 522" stroke="#ff00ff" stroke-width="1.2" fill="none" />
<path d="M1025.5 337.6L1025.5 345L1093 345L1093 398L1084 398" stroke="#ff00ff" stroke-width="1.2" fill="none" />
<rect x="1026" y="322" width="2.4" height="15.6" fill="#c8c8c8" stroke="none" stroke-width="1" />
<path d="M1083 345.2L1083 398.5" stroke="#00ff00" stroke-width="2" />
<path d="M1086.5 345L1086.5 398" stroke="#00ffff" stroke-width="1.2" />
<path d="M1086.5 345.7L1092.3 355L1086.5 361.5L1092.3 368.5L1086.5 375L1092.3 381.5L1086.5 388" stroke="#b4b4b4" stroke-width="1.2" fill="none" />
<path d="M1092.5 345L1092.5 398" stroke="#00ffff" stroke-width="1.2" />
<path d="M1085.5 386L1092 391L1091 400L1086 395Z" fill="#ff0000"/>
<rect x="1078" y="404" width="5" height="118" fill="#c9c9c9" stroke="none" stroke-width="1" />
<path d="M1078.5 404L1078.5 522" stroke="#8a8a8a" stroke-width="1.2" />
<path d="M1083.5 404L1083.5 522" stroke="#8a8a8a" stroke-width="1.2" />
<path d="M1080.5 404L1080.5 522" stroke="#e8e8e8" stroke-width="1.2" />
<rect x="1072.5" y="404.5" width="5" height="6" fill="#c8c8c8" stroke="#999" stroke-width="1" />
<path d="M1084 398L1084 404L1091 404" stroke="#ff00ff" stroke-width="1.2" fill="none" />
<path d="M1083.5 404L1083.5 522" stroke="#ff00ff" stroke-width="1.2" />
<rect x="1100" y="366.2" width="44" height="6.1" fill="url(#conc)" stroke="none" stroke-width="1" />
<path d="M1144.5 366.2L1144.5 372.3" stroke="#ff00ff" stroke-width="1.2" />
<path d="M1144 366.5L1216 366.5" stroke="#a8e8f0" stroke-width="1.2" />
<path d="M1144 368.5L1216 368.5" stroke="#c8c8c8" stroke-width="1.2" />
<path d="M1144 372.5L1216 372.5" stroke="#b0b0b0" stroke-width="1.2" />
<path d="M1102 357.5L1218 357.5" stroke="#00ffff" stroke-width="1.2" />
<path d="M1101 377.5L1216 377.5" stroke="#00ffff" stroke-width="1.2" />
<rect x="1218.6" y="212.8" width="8.8" height="310" fill="url(#conc)" stroke="none" stroke-width="1" />
<path d="M1218.5 212.8L1218.5 522" stroke="#ff00ff" stroke-width="1.2" />
<path d="M1227.5 212.8L1227.5 522" stroke="#ff00ff" stroke-width="1.2" />
<rect x="1144" y="294" width="74" height="53" fill="none" stroke="#ff0000" stroke-width="1" />
<rect x="1145.6" y="295.6" width="72" height="49.8" fill="none" stroke="#ff0000" stroke-width="1" />
<path d="M1144 320.5L1218 320.5" stroke="#ff0000" stroke-width="1.4" />
<path d="M1147 320L1181 297L1216 320L1181 344Z" stroke="#b4b4b4" stroke-width="1" stroke-dasharray="6 2"/>
<rect x="1037.75" y="442" width="16.5" height="51.6" fill="none" stroke="#ff0000" stroke-width="1.3" rx="8.25"/>
<path d="M1046.5 442L1046.5 493.6" stroke="#ff0000" stroke-width="1.2" />
<text x="1045" y="467.8" font-size="7.6" fill="#ffff00" stroke="#ffff00" stroke-width="0.3" text-anchor="middle" transform="rotate(-90 1045 467.8)">18</text>
<text x="1052.4" y="467.8" font-size="5.2" fill="#ffff00" stroke="none" text-anchor="middle" font-weight="bold" transform="rotate(-90 1052.4 467.8)" textLength="40.04" lengthAdjust="spacingAndGlyphs">KSR-SJP-BC441</text>
<path d="M1046 442L1046 413L1060 404" stroke="#ff0000" stroke-width="1.2" fill="none" />
<text x="1263" y="523" font-size="12.2" fill="#ffff00" stroke="#ffff00" stroke-width="0.5" text-anchor="start" font-weight="bold" transform="rotate(-90 1263 523)" textLength="107" lengthAdjust="spacingAndGlyphs">STRIP SECTION - 4 B</text>
<path d="M316 735L316 831" stroke="#c9c9c9" stroke-width="2" />
<path d="M335.5 735L335.5 835" stroke="#d2d2d2" stroke-width="1.8" />
<path d="M351.5 735L351.5 833" stroke="#cccccc" stroke-width="1.2" />
<path d="M483 827.5L1078 827.5" stroke="#bdbdbd" stroke-width="1.2" />
<path d="M483 849.5L1078 849.5" stroke="#bdbdbd" stroke-width="1.2" />
<path d="M483 851.5L1078 851.5" stroke="#d6d6d6" stroke-width="1.2" />
<path d="M532.3 838L532.3 876.4L566 876.4" stroke="#b4b4b4" stroke-width="1.2" fill="none" />
<path d="M634.9 838L634.9 876.4L668 876.4" stroke="#b4b4b4" stroke-width="1.2" fill="none" />
<path d="M737.6 838L737.6 876.4L770 876.4" stroke="#b4b4b4" stroke-width="1.2" fill="none" />
<path d="M840.4 838L840.4 876.4L873 876.4" stroke="#b4b4b4" stroke-width="1.2" fill="none" />
<path d="M943 838L943 876.4L975 876.4" stroke="#b4b4b4" stroke-width="1.2" fill="none" />
<path d="M353.6 758.5L1078 758.5" stroke="#ff0000" stroke-width="1.2" />
<path d="M470 782.5L1078 782.5" stroke="#ff0000" stroke-width="1.2" />
<path d="M378 795.5L458.6 795.5" stroke="#ff0000" stroke-width="1.2" />
<path d="M378.5 795L378.5 825.7" stroke="#ff0000" stroke-width="1.2" />
<path d="M430.5 795L430.5 819" stroke="#ff0000" stroke-width="1.2" />
<path d="M430.5 826L430.5 827.5" stroke="#ff0000" stroke-width="1.2" />
<path d="M376.2 797.5L379.8 794" stroke="#ff0000" stroke-width="1.2" />
<path d="M428.7 797.5L432.3 794" stroke="#ff0000" stroke-width="1.2" />
<path d="M456.8 797.5L460.4 794" stroke="#ff0000" stroke-width="1.2" />
<path d="M359.4 802.5L458 802.5" stroke="#ff0000" stroke-width="1.2" />
<path d="M359.4 813.5L458 813.5" stroke="#ff0000" stroke-width="1.2" />
<path d="M360 804.5L458 804.5" stroke="#c0c0c0" stroke-width="1.2" />
<path d="M360 806.5L458 806.5" stroke="#c0c0c0" stroke-width="1.2" />
<path d="M360 808.5L458 808.5" stroke="#c0c0c0" stroke-width="1.2" />
<path d="M360 810.5L458 810.5" stroke="#c0c0c0" stroke-width="1.2" />
<path d="M349.5 734L349.5 832" stroke="#ffff00" stroke-width="1.6" />
<rect x="354.2" y="734" width="5.2" height="100.4" fill="url(#conc)" stroke="none" stroke-width="1" />
<path d="M353.5 734L353.5 835" stroke="#ff0000" stroke-width="1.2" />
<path d="M359.5 734L359.5 834" stroke="#ff00ff" stroke-width="1.2" />
<path d="M366.5 734L366.5 815" stroke="#ff0000" stroke-width="1.2" />
<path d="M366.5 815L366.5 834.4" stroke="#ff0000" stroke-width="1.6" />
<path d="M360 834.5L380 834.5" stroke="#ff0000" stroke-width="1.6" />
<path d="M317 831.5L340.8 831.5" stroke="#ffff00" stroke-width="1.8" />
<circle cx="316.4" cy="831" r="1.7" fill="#ff0000"/>
<rect x="337" y="836.5" width="42" height="5.5" fill="url(#conc)" stroke="none" stroke-width="1" />
<rect x="337.5" y="837" width="13" height="4.5" fill="url(#herr)" stroke="none" stroke-width="1" />
<path d="M335.4 835.5L379.6 835.5L379.6 846.4L354 846.4L348.5 842.7L335.4 842.7L335.4 835.5" stroke="#ff0000" stroke-width="1.5" fill="none" />
<rect x="380" y="840.6" width="48.4" height="3" fill="#ff0000" stroke="none" stroke-width="1" />
<path d="M380 839.5L428 839.5" stroke="#ff0000" stroke-width="1.2" />
<path d="M380 845.5L428 845.5" stroke="#ff7070" stroke-width="1.2" />
<path d="M363.8 846.4L374.7 846.4L369.3 897.9L365 907.7L363.8 846.4" stroke="#1a1aff" stroke-width="1.2" fill="none" />
<path d="M363.8 898L369.3 897.9" stroke="#1a1aff" stroke-width="1.2" fill="none" />
<path d="M365.2 851H373.15L372.35 853.6H365.6Z" fill="#8c8c8c"/>
<path d="M365.2 859H372.43L371.63 861.6H365.6Z" fill="#8c8c8c"/>
<path d="M365.2 867H371.71L370.91 869.6H365.6Z" fill="#8c8c8c"/>
<path d="M365.2 875H370.99L370.19 877.6H365.6Z" fill="#8c8c8c"/>
<path d="M365.2 883H370.27L369.47 885.6H365.6Z" fill="#8c8c8c"/>
<path d="M365.2 891H369.55L368.75 893.6H365.6Z" fill="#8c8c8c"/>
<path d="M366 849.5L372 849.5" stroke="#ffff00" stroke-width="1.5" />
<rect x="333" y="813.6" width="48.3" height="93.4" fill="none" stroke="#00ff00" stroke-width="1.2" rx="8" stroke-dasharray="2.6 2.1"/>
<rect x="461.2" y="734" width="8.8" height="102.6" fill="url(#conc)" stroke="none" stroke-width="1" />
<path d="M460.5 734L460.5 836.6" stroke="#ff0000" stroke-width="1.2" />
<path d="M470.5 734L470.5 836" stroke="#ff00ff" stroke-width="1.2" />
<path d="M459.5 740L459.5 834" stroke="#00ffff" stroke-width="1.2" stroke-dasharray="5 3"/>
<path d="M473.5 734L473.5 809" stroke="#1a1aff" stroke-width="1.3" />
<path d="M473.2 809L471.5 811L471.5 826" stroke="#ff00ff" stroke-width="1.2" fill="none" />
<rect x="429.4" y="835.5" width="32" height="4.6" fill="url(#conc)" stroke="none" stroke-width="1" />
<path d="M429.4 835.5L461 835.5" stroke="#ff00ff" stroke-width="1.2" />
<path d="M429.4 833L429.4 841L461 841" stroke="#ff0000" stroke-width="1.3" fill="none" />
<rect x="470.5" y="827.4" width="12.5" height="10.3" fill="#fff" stroke="#ff0000" stroke-width="1.3" />
<path d="M470.5 830.5L483 830.5" stroke="#ff0000" stroke-width="1.2" />
<path d="M470.5 834.5L483 834.5" stroke="#ff0000" stroke-width="1.2" />
<rect x="419.2" y="810" width="49.6" height="71.5" fill="none" stroke="#00ff00" stroke-width="1.2" rx="9" stroke-dasharray="2.6 2.1"/>
<rect x="470" y="817.3" width="25" height="29.1" fill="none" stroke="#00ff00" stroke-width="1.2" rx="11" stroke-dasharray="2.6 2.1"/>
<path d="M428.4 842L469 842L469 848L462 851.8L431 851.8L431 848L428.4 848L428.4 842" stroke="#00ff00" stroke-width="1.2" fill="none" />
<rect x="428.8" y="842.4" width="4" height="5.4" fill="#00ffff" stroke="none" stroke-width="1" />
<path d="M438 843.500C435.5 846 435.5 848.500 438 850.500" stroke="#ffff00" stroke-width="1.300"/>
<path d="M446 843.500C443.5 846 443.5 848.500 446 850.500" stroke="#ffff00" stroke-width="1.300"/>
<path d="M454 843.500C451.5 846 451.5 848.500 454 850.500" stroke="#ffff00" stroke-width="1.300"/>
<path d="M462 843.500C459.5 846 459.5 848.500 462 850.500" stroke="#ffff00" stroke-width="1.300"/>
<path d="M469 846L483 846L483 849.5" stroke="#00ff00" stroke-width="1.2" fill="none" />
<path d="M428.5 854L428.5 895" stroke="#ff0000" stroke-width="1.2" />
<path d="M428.4 895.5L458.6 895.5" stroke="#ff0000" stroke-width="1.2" />
<path d="M426.6 896.8L430.2 893.2" stroke="#ff0000" stroke-width="1.2" />
<path d="M456.8 896.8L460.4 893.2" stroke="#ff0000" stroke-width="1.2" />
<text x="443.5" y="901" font-size="4" fill="#ffff00" stroke="none" text-anchor="middle" font-weight="bold">950</text>
<rect x="483" y="832.6" width="600" height="5.2" fill="#ff0000" stroke="none" stroke-width="1" />
<rect x="557.6" y="818" width="40.9" height="36.7" fill="none" stroke="#00ff00" stroke-width="1.1" rx="10" stroke-dasharray="3.8 2.2"/>
<rect x="557.6" y="862.3" width="27.1" height="35.7" fill="none" stroke="#00ff00" stroke-width="1.1" rx="10" stroke-dasharray="3.8 2.2"/>
<rect x="570.8" y="734" width="7.4" height="148.5" fill="url(#conc)" stroke="none" stroke-width="1" />
<rect x="566.6" y="828" width="11.6" height="10" fill="#fff" stroke="none" stroke-width="1" />
<path d="M567.2 835.5L577.7 835.5" stroke="#ff00ff" stroke-width="1.2" />
<path d="M569.2 833.5L577.2 833.5" stroke="#f4c0c0" stroke-width="1.2" />
<path d="M567.5 734L567.5 832" stroke="#ff0000" stroke-width="1.2" />
<path d="M578.5 734L578.5 832" stroke="#ff00ff" stroke-width="1.2" />
<path d="M569.5 736L569.5 831" stroke="#00ffff" stroke-width="1.2" />
<path d="M570.5 738L570.5 828" stroke="#00ff00" stroke-width="1.1" stroke-dasharray="7 3"/>
<path d="M578.5 827.6L578.5 881.8" stroke="#00ffff" stroke-width="1.8" />
<path d="M570.5 841L570.5 880" stroke="#ff00ff" stroke-width="1.2" />
<path d="M567.5 841L567.5 860" stroke="#ff0000" stroke-width="1.2" />
<path d="M568 858L568 881" stroke="#ff0000" stroke-width="2" />
<path d="M566.5 841L566.5 876" stroke="#00ff00" stroke-width="1.3" />
<path d="M583.9 734L583.9 811.4L582.3 812.5L582.3 826.6" stroke="#1a1aff" stroke-width="1.4" fill="none" />
<rect x="579.8" y="827.6" width="9.6" height="5" fill="#fff" stroke="none" stroke-width="1" />
<path d="M579.7 827.5L586.2 827.5" stroke="#ff0000" stroke-width="1.6" />
<path d="M588.5 828L588.5 832.5" stroke="#00ffff" stroke-width="1.3" />
<path d="M585.2 828.5L589.7 828.5" stroke="#aaa" stroke-width="1.2" />
<rect x="587.7" y="834.5" width="2.6" height="3.4" fill="#e00000" stroke="none" stroke-width="1" />
<path d="M569 882.5L579.5 882.5" stroke="#ff0000" stroke-width="2.6" />
<path d="M568.5 876L568.5 884" stroke="#ff0000" stroke-width="1.4" />
<path d="M579.5 879L579.5 884" stroke="#ff0000" stroke-width="1.2" />
<path d="M565.8 873L564.8 878.5L567.7 879.5" stroke="#ff0000" stroke-width="1.3" fill="none" />
<rect x="570.9" y="842.3" width="5.2" height="3.4" fill="#8c8c8c" stroke="none" stroke-width="1" />
<path d="M562.8 824.3L562.8 838" stroke="#8a7a60" stroke-width="1.6" fill="none" />
<path d="M562.8 824.3L565 827L565 832" stroke="#777" stroke-width="1.2" fill="none" />
<rect x="563.4" y="829" width="3" height="4" fill="#fff" stroke="#e06060" stroke-width="1" />
<path d="M566.6 760L569.8 756.6" stroke="#ff0000" stroke-width="1.2" />
<path d="M569.6 760L572.8 756.6" stroke="#ff0000" stroke-width="1.2" />
<path d="M576.6 760L579.8 756.6" stroke="#ff0000" stroke-width="1.2" />
<path d="M582.6 760L585.8 756.6" stroke="#ff0000" stroke-width="1.2" />
<path d="M571.5 754L571.5 762" stroke="#ff0000" stroke-width="1.2" />
<path d="M584.5 754L584.5 762" stroke="#ff0000" stroke-width="1.2" />
<path d="M562.6 784L565.8 780.6" stroke="#ff0000" stroke-width="1.2" />
<path d="M577.1 784L580.3 780.6" stroke="#ff0000" stroke-width="1.2" />
<path d="M586.6 784L589.8 780.6" stroke="#ff0000" stroke-width="1.2" />
<path d="M564.5 782L564.5 796" stroke="#ff0000" stroke-width="1.2" />
<path d="M588.5 782L588.5 796" stroke="#ff0000" stroke-width="1.2" />
<path d="M578.5 779L578.5 786" stroke="#ff0000" stroke-width="1.2" />
<path d="M564.5 805L564.5 806.2" stroke="#ff0000" stroke-width="1.2" />
<path d="M588.5 805L588.5 806.2" stroke="#ff0000" stroke-width="1.2" />
<path d="M557.7 775.8L566.2 775.8L567.7 782" stroke="#ff0000" stroke-width="1.2" fill="none" />
<text x="558.7" y="780.8" font-size="3.8" fill="#ffff00" stroke="none" text-anchor="start" font-weight="bold">075</text>
<path d="M558.2 836.6L525.8 855.9L525.8 933" stroke="#ff0000" stroke-width="1.2" fill="none" />
<path d="M557.6 887L547.8 893L547.8 933" stroke="#ff0000" stroke-width="1.2" fill="none" />
<rect x="660" y="818" width="40.9" height="36.7" fill="none" stroke="#00ff00" stroke-width="1.1" rx="10" stroke-dasharray="3.8 2.2"/>
<rect x="660" y="862.3" width="27.1" height="35.7" fill="none" stroke="#00ff00" stroke-width="1.1" rx="10" stroke-dasharray="3.8 2.2"/>
<rect x="673.2" y="734" width="7.4" height="148.5" fill="url(#conc)" stroke="none" stroke-width="1" />
<rect x="669" y="828" width="11.6" height="10" fill="#fff" stroke="none" stroke-width="1" />
<path d="M669.6 835.5L680.1 835.5" stroke="#ff00ff" stroke-width="1.2" />
<path d="M671.6 833.5L679.6 833.5" stroke="#f4c0c0" stroke-width="1.2" />
<path d="M670.5 734L670.5 832" stroke="#ff0000" stroke-width="1.2" />
<path d="M680.5 734L680.5 832" stroke="#ff00ff" stroke-width="1.2" />
<path d="M671.5 736L671.5 831" stroke="#00ffff" stroke-width="1.2" />
<path d="M673.5 738L673.5 828" stroke="#00ff00" stroke-width="1.1" stroke-dasharray="7 3"/>
<path d="M681.5 827.6L681.5 881.8" stroke="#00ffff" stroke-width="1.8" />
<path d="M672.5 841L672.5 880" stroke="#ff00ff" stroke-width="1.2" />
<path d="M670.5 841L670.5 860" stroke="#ff0000" stroke-width="1.2" />
<path d="M670 858L670 881" stroke="#ff0000" stroke-width="2" />
<path d="M668.5 841L668.5 876" stroke="#00ff00" stroke-width="1.3" />
<path d="M686.3 734L686.3 811.4L684.7 812.5L684.7 826.6" stroke="#1a1aff" stroke-width="1.4" fill="none" />
<rect x="682.2" y="827.6" width="9.6" height="5" fill="#fff" stroke="none" stroke-width="1" />
<path d="M682.1 827.5L688.6 827.5" stroke="#ff0000" stroke-width="1.6" />
<path d="M691.5 828L691.5 832.5" stroke="#00ffff" stroke-width="1.3" />
<path d="M687.6 828.5L692.1 828.5" stroke="#aaa" stroke-width="1.2" />
<rect x="690.1" y="834.5" width="2.6" height="3.4" fill="#e00000" stroke="none" stroke-width="1" />
<path d="M671.4 882.5L681.9 882.5" stroke="#ff0000" stroke-width="2.6" />
<path d="M670.5 876L670.5 884" stroke="#ff0000" stroke-width="1.4" />
<path d="M681.5 879L681.5 884" stroke="#ff0000" stroke-width="1.2" />
<path d="M668.2 873L667.2 878.5L670.1 879.5" stroke="#ff0000" stroke-width="1.3" fill="none" />
<rect x="673.3" y="842.3" width="5.2" height="3.4" fill="#8c8c8c" stroke="none" stroke-width="1" />
<path d="M665.2 824.3L665.2 838" stroke="#8a7a60" stroke-width="1.6" fill="none" />
<path d="M665.2 824.3L667.4 827L667.4 832" stroke="#777" stroke-width="1.2" fill="none" />
<rect x="665.8" y="829" width="3" height="4" fill="#fff" stroke="#e06060" stroke-width="1" />
<path d="M669 760L672.2 756.6" stroke="#ff0000" stroke-width="1.2" />
<path d="M672 760L675.2 756.6" stroke="#ff0000" stroke-width="1.2" />
<path d="M679 760L682.2 756.6" stroke="#ff0000" stroke-width="1.2" />
<path d="M685 760L688.2 756.6" stroke="#ff0000" stroke-width="1.2" />
<path d="M673.5 754L673.5 762" stroke="#ff0000" stroke-width="1.2" />
<path d="M686.5 754L686.5 762" stroke="#ff0000" stroke-width="1.2" />
<path d="M665 784L668.2 780.6" stroke="#ff0000" stroke-width="1.2" />
<path d="M679.5 784L682.7 780.6" stroke="#ff0000" stroke-width="1.2" />
<path d="M689 784L692.2 780.6" stroke="#ff0000" stroke-width="1.2" />
<path d="M666.5 782L666.5 796" stroke="#ff0000" stroke-width="1.2" />
<path d="M690.5 782L690.5 796" stroke="#ff0000" stroke-width="1.2" />
<path d="M681.5 779L681.5 786" stroke="#ff0000" stroke-width="1.2" />
<path d="M666.5 805L666.5 806.2" stroke="#ff0000" stroke-width="1.2" />
<path d="M690.5 805L690.5 806.2" stroke="#ff0000" stroke-width="1.2" />
<path d="M660.1 775.8L668.6 775.8L670.1 782" stroke="#ff0000" stroke-width="1.2" fill="none" />
<text x="661.1" y="780.8" font-size="3.8" fill="#ffff00" stroke="none" text-anchor="start" font-weight="bold">075</text>
<path d="M660.6 836.6L628.2 855.9L628.2 933" stroke="#ff0000" stroke-width="1.2" fill="none" />
<path d="M660 887L650.2 893L650.2 933" stroke="#ff0000" stroke-width="1.2" fill="none" />
<rect x="762" y="818" width="40.9" height="36.7" fill="none" stroke="#00ff00" stroke-width="1.1" rx="10" stroke-dasharray="3.8 2.2"/>
<rect x="762" y="862.3" width="27.1" height="35.7" fill="none" stroke="#00ff00" stroke-width="1.1" rx="10" stroke-dasharray="3.8 2.2"/>
<rect x="775.2" y="734" width="7.4" height="148.5" fill="url(#conc)" stroke="none" stroke-width="1" />
<rect x="771" y="828" width="11.6" height="10" fill="#fff" stroke="none" stroke-width="1" />
<path d="M771.6 835.5L782.1 835.5" stroke="#ff00ff" stroke-width="1.2" />
<path d="M773.6 833.5L781.6 833.5" stroke="#f4c0c0" stroke-width="1.2" />
<path d="M772.5 734L772.5 832" stroke="#ff0000" stroke-width="1.2" />
<path d="M782.5 734L782.5 832" stroke="#ff00ff" stroke-width="1.2" />
<path d="M773.5 736L773.5 831" stroke="#00ffff" stroke-width="1.2" />
<path d="M775.5 738L775.5 828" stroke="#00ff00" stroke-width="1.1" stroke-dasharray="7 3"/>
<path d="M783.5 827.6L783.5 881.8" stroke="#00ffff" stroke-width="1.8" />
<path d="M774.5 841L774.5 880" stroke="#ff00ff" stroke-width="1.2" />
<path d="M772.5 841L772.5 860" stroke="#ff0000" stroke-width="1.2" />
<path d="M772 858L772 881" stroke="#ff0000" stroke-width="2" />
<path d="M770.5 841L770.5 876" stroke="#00ff00" stroke-width="1.3" />
<path d="M788.3 734L788.3 811.4L786.7 812.5L786.7 826.6" stroke="#1a1aff" stroke-width="1.4" fill="none" />
<rect x="784.2" y="827.6" width="9.6" height="5" fill="#fff" stroke="none" stroke-width="1" />
<path d="M784.1 827.5L790.6 827.5" stroke="#ff0000" stroke-width="1.6" />
<path d="M793.5 828L793.5 832.5" stroke="#00ffff" stroke-width="1.3" />
<path d="M789.6 828.5L794.1 828.5" stroke="#aaa" stroke-width="1.2" />
<rect x="792.1" y="834.5" width="2.6" height="3.4" fill="#e00000" stroke="none" stroke-width="1" />
<path d="M773.4 882.5L783.9 882.5" stroke="#ff0000" stroke-width="2.6" />
<path d="M772.5 876L772.5 884" stroke="#ff0000" stroke-width="1.4" />
<path d="M783.5 879L783.5 884" stroke="#ff0000" stroke-width="1.2" />
<path d="M770.2 873L769.2 878.5L772.1 879.5" stroke="#ff0000" stroke-width="1.3" fill="none" />
<rect x="775.3" y="842.3" width="5.2" height="3.4" fill="#8c8c8c" stroke="none" stroke-width="1" />
<path d="M767.2 824.3L767.2 838" stroke="#8a7a60" stroke-width="1.6" fill="none" />
<path d="M767.2 824.3L769.4 827L769.4 832" stroke="#777" stroke-width="1.2" fill="none" />
<rect x="767.8" y="829" width="3" height="4" fill="#fff" stroke="#e06060" stroke-width="1" />
<path d="M771 760L774.2 756.6" stroke="#ff0000" stroke-width="1.2" />
<path d="M774 760L777.2 756.6" stroke="#ff0000" stroke-width="1.2" />
<path d="M781 760L784.2 756.6" stroke="#ff0000" stroke-width="1.2" />
<path d="M787 760L790.2 756.6" stroke="#ff0000" stroke-width="1.2" />
<path d="M775.5 754L775.5 762" stroke="#ff0000" stroke-width="1.2" />
<path d="M788.5 754L788.5 762" stroke="#ff0000" stroke-width="1.2" />
<path d="M767 784L770.2 780.6" stroke="#ff0000" stroke-width="1.2" />
<path d="M781.5 784L784.7 780.6" stroke="#ff0000" stroke-width="1.2" />
<path d="M791 784L794.2 780.6" stroke="#ff0000" stroke-width="1.2" />
<path d="M768.5 782L768.5 796" stroke="#ff0000" stroke-width="1.2" />
<path d="M792.5 782L792.5 796" stroke="#ff0000" stroke-width="1.2" />
<path d="M783.5 779L783.5 786" stroke="#ff0000" stroke-width="1.2" />
<path d="M768.5 805L768.5 806.2" stroke="#ff0000" stroke-width="1.2" />
<path d="M792.5 805L792.5 806.2" stroke="#ff0000" stroke-width="1.2" />
<path d="M762.1 775.8L770.6 775.8L772.1 782" stroke="#ff0000" stroke-width="1.2" fill="none" />
<text x="763.1" y="780.8" font-size="3.8" fill="#ffff00" stroke="none" text-anchor="start" font-weight="bold">075</text>
<path d="M762.6 836.6L730.2 855.9L730.2 933" stroke="#ff0000" stroke-width="1.2" fill="none" />
<path d="M762 887L752.2 893L752.2 933" stroke="#ff0000" stroke-width="1.2" fill="none" />
<rect x="864.8" y="818" width="40.9" height="36.7" fill="none" stroke="#00ff00" stroke-width="1.1" rx="10" stroke-dasharray="3.8 2.2"/>
<rect x="864.8" y="862.3" width="27.1" height="35.7" fill="none" stroke="#00ff00" stroke-width="1.1" rx="10" stroke-dasharray="3.8 2.2"/>
<rect x="878" y="734" width="7.4" height="148.5" fill="url(#conc)" stroke="none" stroke-width="1" />
<rect x="873.8" y="828" width="11.6" height="10" fill="#fff" stroke="none" stroke-width="1" />
<path d="M874.4 835.5L884.9 835.5" stroke="#ff00ff" stroke-width="1.2" />
<path d="M876.4 833.5L884.4 833.5" stroke="#f4c0c0" stroke-width="1.2" />
<path d="M875.5 734L875.5 832" stroke="#ff0000" stroke-width="1.2" />
<path d="M885.5 734L885.5 832" stroke="#ff00ff" stroke-width="1.2" />
<path d="M876.5 736L876.5 831" stroke="#00ffff" stroke-width="1.2" />
<path d="M878.5 738L878.5 828" stroke="#00ff00" stroke-width="1.1" stroke-dasharray="7 3"/>
<path d="M885.5 827.6L885.5 881.8" stroke="#00ffff" stroke-width="1.8" />
<path d="M877.5 841L877.5 880" stroke="#ff00ff" stroke-width="1.2" />
<path d="M875.5 841L875.5 860" stroke="#ff0000" stroke-width="1.2" />
<path d="M875 858L875 881" stroke="#ff0000" stroke-width="2" />
<path d="M873.5 841L873.5 876" stroke="#00ff00" stroke-width="1.3" />
<path d="M891.1 734L891.1 811.4L889.5 812.5L889.5 826.6" stroke="#1a1aff" stroke-width="1.4" fill="none" />
<rect x="887" y="827.6" width="9.6" height="5" fill="#fff" stroke="none" stroke-width="1" />
<path d="M886.9 827.5L893.4 827.5" stroke="#ff0000" stroke-width="1.6" />
<path d="M896.5 828L896.5 832.5" stroke="#00ffff" stroke-width="1.3" />
<path d="M892.4 828.5L896.9 828.5" stroke="#aaa" stroke-width="1.2" />
<rect x="894.9" y="834.5" width="2.6" height="3.4" fill="#e00000" stroke="none" stroke-width="1" />
<path d="M876.2 882.5L886.7 882.5" stroke="#ff0000" stroke-width="2.6" />
<path d="M875.5 876L875.5 884" stroke="#ff0000" stroke-width="1.4" />
<path d="M886.5 879L886.5 884" stroke="#ff0000" stroke-width="1.2" />
<path d="M873 873L872 878.5L874.9 879.5" stroke="#ff0000" stroke-width="1.3" fill="none" />
<rect x="878.1" y="842.3" width="5.2" height="3.4" fill="#8c8c8c" stroke="none" stroke-width="1" />
<path d="M870 824.3L870 838" stroke="#8a7a60" stroke-width="1.6" fill="none" />
<path d="M870 824.3L872.2 827L872.2 832" stroke="#777" stroke-width="1.2" fill="none" />
<rect x="870.6" y="829" width="3" height="4" fill="#fff" stroke="#e06060" stroke-width="1" />
<path d="M873.8 760L877 756.6" stroke="#ff0000" stroke-width="1.2" />
<path d="M876.8 760L880 756.6" stroke="#ff0000" stroke-width="1.2" />
<path d="M883.8 760L887 756.6" stroke="#ff0000" stroke-width="1.2" />
<path d="M889.8 760L893 756.6" stroke="#ff0000" stroke-width="1.2" />
<path d="M878.5 754L878.5 762" stroke="#ff0000" stroke-width="1.2" />
<path d="M891.5 754L891.5 762" stroke="#ff0000" stroke-width="1.2" />
<path d="M869.8 784L873 780.6" stroke="#ff0000" stroke-width="1.2" />
<path d="M884.3 784L887.5 780.6" stroke="#ff0000" stroke-width="1.2" />
<path d="M893.8 784L897 780.6" stroke="#ff0000" stroke-width="1.2" />
<path d="M871.5 782L871.5 796" stroke="#ff0000" stroke-width="1.2" />
<path d="M895.5 782L895.5 796" stroke="#ff0000" stroke-width="1.2" />
<path d="M885.5 779L885.5 786" stroke="#ff0000" stroke-width="1.2" />
<path d="M871.5 805L871.5 806.2" stroke="#ff0000" stroke-width="1.2" />
<path d="M895.5 805L895.5 806.2" stroke="#ff0000" stroke-width="1.2" />
<path d="M864.9 775.8L873.4 775.8L874.9 782" stroke="#ff0000" stroke-width="1.2" fill="none" />
<text x="865.9" y="780.8" font-size="3.8" fill="#ffff00" stroke="none" text-anchor="start" font-weight="bold">075</text>
<path d="M865.4 836.6L833 855.9L833 933" stroke="#ff0000" stroke-width="1.2" fill="none" />
<path d="M864.8 887L855 893L855 933" stroke="#ff0000" stroke-width="1.2" fill="none" />
<rect x="967" y="818" width="40.9" height="36.7" fill="none" stroke="#00ff00" stroke-width="1.1" rx="10" stroke-dasharray="3.8 2.2"/>
<rect x="967" y="862.3" width="27.1" height="35.7" fill="none" stroke="#00ff00" stroke-width="1.1" rx="10" stroke-dasharray="3.8 2.2"/>
<rect x="980.2" y="734" width="7.4" height="148.5" fill="url(#conc)" stroke="none" stroke-width="1" />
<rect x="976" y="828" width="11.6" height="10" fill="#fff" stroke="none" stroke-width="1" />
<path d="M976.6 835.5L987.1 835.5" stroke="#ff00ff" stroke-width="1.2" />
<path d="M978.6 833.5L986.6 833.5" stroke="#f4c0c0" stroke-width="1.2" />
<path d="M977.5 734L977.5 832" stroke="#ff0000" stroke-width="1.2" />
<path d="M987.5 734L987.5 832" stroke="#ff00ff" stroke-width="1.2" />
<path d="M978.5 736L978.5 831" stroke="#00ffff" stroke-width="1.2" />
<path d="M980.5 738L980.5 828" stroke="#00ff00" stroke-width="1.1" stroke-dasharray="7 3"/>
<path d="M988.5 827.6L988.5 881.8" stroke="#00ffff" stroke-width="1.8" />
<path d="M979.5 841L979.5 880" stroke="#ff00ff" stroke-width="1.2" />
<path d="M977.5 841L977.5 860" stroke="#ff0000" stroke-width="1.2" />
<path d="M977 858L977 881" stroke="#ff0000" stroke-width="2" />
<path d="M975.5 841L975.5 876" stroke="#00ff00" stroke-width="1.3" />
<path d="M993.3 734L993.3 811.4L991.7 812.5L991.7 826.6" stroke="#1a1aff" stroke-width="1.4" fill="none" />
<rect x="989.2" y="827.6" width="9.6" height="5" fill="#fff" stroke="none" stroke-width="1" />
<path d="M989.1 827.5L995.6 827.5" stroke="#ff0000" stroke-width="1.6" />
<path d="M998.5 828L998.5 832.5" stroke="#00ffff" stroke-width="1.3" />
<path d="M994.6 828.5L999.1 828.5" stroke="#aaa" stroke-width="1.2" />
<rect x="997.1" y="834.5" width="2.6" height="3.4" fill="#e00000" stroke="none" stroke-width="1" />
<path d="M978.4 882.5L988.9 882.5" stroke="#ff0000" stroke-width="2.6" />
<path d="M977.5 876L977.5 884" stroke="#ff0000" stroke-width="1.4" />
<path d="M988.5 879L988.5 884" stroke="#ff0000" stroke-width="1.2" />
<path d="M975.2 873L974.2 878.5L977.1 879.5" stroke="#ff0000" stroke-width="1.3" fill="none" />
<rect x="980.3" y="842.3" width="5.2" height="3.4" fill="#8c8c8c" stroke="none" stroke-width="1" />
<path d="M972.2 824.3L972.2 838" stroke="#8a7a60" stroke-width="1.6" fill="none" />
<path d="M972.2 824.3L974.4 827L974.4 832" stroke="#777" stroke-width="1.2" fill="none" />
<rect x="972.8" y="829" width="3" height="4" fill="#fff" stroke="#e06060" stroke-width="1" />
<path d="M976 760L979.2 756.6" stroke="#ff0000" stroke-width="1.2" />
<path d="M979 760L982.2 756.6" stroke="#ff0000" stroke-width="1.2" />
<path d="M986 760L989.2 756.6" stroke="#ff0000" stroke-width="1.2" />
<path d="M992 760L995.2 756.6" stroke="#ff0000" stroke-width="1.2" />
<path d="M980.5 754L980.5 762" stroke="#ff0000" stroke-width="1.2" />
<path d="M993.5 754L993.5 762" stroke="#ff0000" stroke-width="1.2" />
<path d="M972 784L975.2 780.6" stroke="#ff0000" stroke-width="1.2" />
<path d="M986.5 784L989.7 780.6" stroke="#ff0000" stroke-width="1.2" />
<path d="M996 784L999.2 780.6" stroke="#ff0000" stroke-width="1.2" />
<path d="M973.5 782L973.5 796" stroke="#ff0000" stroke-width="1.2" />
<path d="M997.5 782L997.5 796" stroke="#ff0000" stroke-width="1.2" />
<path d="M988.5 779L988.5 786" stroke="#ff0000" stroke-width="1.2" />
<path d="M973.5 805L973.5 806.2" stroke="#ff0000" stroke-width="1.2" />
<path d="M997.5 805L997.5 806.2" stroke="#ff0000" stroke-width="1.2" />
<path d="M967.1 775.8L975.6 775.8L977.1 782" stroke="#ff0000" stroke-width="1.2" fill="none" />
<text x="968.1" y="780.8" font-size="3.8" fill="#ffff00" stroke="none" text-anchor="start" font-weight="bold">075</text>
<path d="M967.6 836.6L935.2 855.9L935.2 933" stroke="#ff0000" stroke-width="1.2" fill="none" />
<path d="M967 887L957.2 893L957.2 933" stroke="#ff0000" stroke-width="1.2" fill="none" />
<path d="M1066.7 775.8L1075.2 775.8L1076.7 782" stroke="#ff0000" stroke-width="1.2" fill="none" />
<path d="M1073.5 782L1073.5 796" stroke="#ff0000" stroke-width="1.2" />
<path d="M1073.5 805L1073.5 806.2" stroke="#ff0000" stroke-width="1.2" />
<path d="M1071.6 784L1074.8 780.6" stroke="#ff0000" stroke-width="1.2" />
<path d="M1075.6 760L1078.8 756.6" stroke="#ff0000" stroke-width="1.2" />
<text x="1067.7" y="780.8" font-size="3.8" fill="#ffff00" stroke="none" text-anchor="start" font-weight="bold">075</text>
<path d="M1068.8 844.3L1047.2 856.4L1047.2 933" stroke="#ff0000" stroke-width="1.2" fill="none" />
<path d="M339.5 907L339.5 933" stroke="#ff0000" stroke-width="1.2" />
<path d="M433.5 881.5L433.5 933" stroke="#ff0000" stroke-width="1.2" />
<path d="M491.8 841L505 850.8L505 933" stroke="#ff0000" stroke-width="1.2" fill="none" />
<rect x="331.05" y="932.3" width="16.5" height="51.2" fill="none" stroke="#ff0000" stroke-width="1.3" rx="8.25"/>
<path d="M339.5 932.3L339.5 983.5" stroke="#ff0000" stroke-width="1.2" />
<text x="338.3" y="957.9" font-size="7.6" fill="#ffff00" stroke="#ffff00" stroke-width="0.3" text-anchor="middle" transform="rotate(-90 338.3 957.9)" textLength="39.6" lengthAdjust="spacingAndGlyphs">24 handed</text>
<text x="345.7" y="957.9" font-size="5.2" fill="#ffff00" stroke="none" text-anchor="middle" font-weight="bold" transform="rotate(-90 345.7 957.9)" textLength="33.88" lengthAdjust="spacingAndGlyphs">KSR-SJP-444</text>
<rect x="425.55" y="932.3" width="16.5" height="51.2" fill="none" stroke="#ff0000" stroke-width="1.3" rx="8.25"/>
<path d="M433.5 932.3L433.5 983.5" stroke="#ff0000" stroke-width="1.2" />
<text x="432.8" y="957.9" font-size="7.6" fill="#ffff00" stroke="#ffff00" stroke-width="0.3" text-anchor="middle" transform="rotate(-90 432.8 957.9)">28</text>
<text x="440.2" y="957.9" font-size="5.2" fill="#ffff00" stroke="none" text-anchor="middle" font-weight="bold" transform="rotate(-90 440.2 957.9)" textLength="33.88" lengthAdjust="spacingAndGlyphs">KSR-SJP-445</text>
<rect x="496.75" y="932.3" width="16.5" height="51.2" fill="none" stroke="#ff0000" stroke-width="1.3" rx="8.25"/>
<path d="M505.5 932.3L505.5 983.5" stroke="#ff0000" stroke-width="1.2" />
<text x="504" y="957.9" font-size="7.6" fill="#ffff00" stroke="#ffff00" stroke-width="0.3" text-anchor="middle" transform="rotate(-90 504 957.9)">23A</text>
<text x="511.4" y="957.9" font-size="5.2" fill="#ffff00" stroke="none" text-anchor="middle" font-weight="bold" transform="rotate(-90 511.4 957.9)" textLength="33.88" lengthAdjust="spacingAndGlyphs">KSR-SJP-440</text>
<rect x="517.55" y="932.3" width="16.5" height="51.2" fill="none" stroke="#ff0000" stroke-width="1.3" rx="8.25"/>
<path d="M525.5 932.3L525.5 983.5" stroke="#ff0000" stroke-width="1.2" />
<text x="524.8" y="957.9" font-size="7.6" fill="#ffff00" stroke="#ffff00" stroke-width="0.3" text-anchor="middle" transform="rotate(-90 524.8 957.9)">14A</text>
<text x="532.2" y="957.9" font-size="5.2" fill="#ffff00" stroke="none" text-anchor="middle" font-weight="bold" transform="rotate(-90 532.2 957.9)" textLength="33.88" lengthAdjust="spacingAndGlyphs">KSR-SJP-442</text>
<rect x="539.45" y="932.3" width="16.5" height="51.2" fill="none" stroke="#ff0000" stroke-width="1.3" rx="8.25"/>
<path d="M547.5 932.3L547.5 983.5" stroke="#ff0000" stroke-width="1.2" />
<text x="546.7" y="957.9" font-size="7.6" fill="#ffff00" stroke="#ffff00" stroke-width="0.3" text-anchor="middle" transform="rotate(-90 546.7 957.9)" textLength="39.6" lengthAdjust="spacingAndGlyphs">16 handed</text>
<text x="554.1" y="957.9" font-size="5.2" fill="#ffff00" stroke="none" text-anchor="middle" font-weight="bold" transform="rotate(-90 554.1 957.9)" textLength="33.88" lengthAdjust="spacingAndGlyphs">KSR-SJP-442</text>
<rect x="619.95" y="932.3" width="16.5" height="51.2" fill="none" stroke="#ff0000" stroke-width="1.3" rx="8.25"/>
<path d="M628.5 932.3L628.5 983.5" stroke="#ff0000" stroke-width="1.2" />
<text x="627.2" y="957.9" font-size="7.6" fill="#ffff00" stroke="#ffff00" stroke-width="0.3" text-anchor="middle" transform="rotate(-90 627.2 957.9)">14A</text>
<text x="634.6" y="957.9" font-size="5.2" fill="#ffff00" stroke="none" text-anchor="middle" font-weight="bold" transform="rotate(-90 634.6 957.9)" textLength="33.88" lengthAdjust="spacingAndGlyphs">KSR-SJP-442</text>
<rect x="641.95" y="932.3" width="16.5" height="51.2" fill="none" stroke="#ff0000" stroke-width="1.3" rx="8.25"/>
<path d="M650.5 932.3L650.5 983.5" stroke="#ff0000" stroke-width="1.2" />
<text x="649.2" y="957.9" font-size="7.6" fill="#ffff00" stroke="#ffff00" stroke-width="0.3" text-anchor="middle" transform="rotate(-90 649.2 957.9)" textLength="39.6" lengthAdjust="spacingAndGlyphs">16 handed</text>
<text x="656.6" y="957.9" font-size="5.2" fill="#ffff00" stroke="none" text-anchor="middle" font-weight="bold" transform="rotate(-90 656.6 957.9)" textLength="33.88" lengthAdjust="spacingAndGlyphs">KSR-SJP-442</text>
<rect x="721.95" y="932.3" width="16.5" height="51.2" fill="none" stroke="#ff0000" stroke-width="1.3" rx="8.25"/>
<path d="M730.5 932.3L730.5 983.5" stroke="#ff0000" stroke-width="1.2" />
<text x="729.2" y="957.9" font-size="7.6" fill="#ffff00" stroke="#ffff00" stroke-width="0.3" text-anchor="middle" transform="rotate(-90 729.2 957.9)">14A</text>
<text x="736.6" y="957.9" font-size="5.2" fill="#ffff00" stroke="none" text-anchor="middle" font-weight="bold" transform="rotate(-90 736.6 957.9)" textLength="33.88" lengthAdjust="spacingAndGlyphs">KSR-SJP-442</text>
<rect x="743.95" y="932.3" width="16.5" height="51.2" fill="none" stroke="#ff0000" stroke-width="1.3" rx="8.25"/>
<path d="M752.5 932.3L752.5 983.5" stroke="#ff0000" stroke-width="1.2" />
<text x="751.2" y="957.9" font-size="7.6" fill="#ffff00" stroke="#ffff00" stroke-width="0.3" text-anchor="middle" transform="rotate(-90 751.2 957.9)" textLength="39.6" lengthAdjust="spacingAndGlyphs">16 handed</text>
<text x="758.6" y="957.9" font-size="5.2" fill="#ffff00" stroke="none" text-anchor="middle" font-weight="bold" transform="rotate(-90 758.6 957.9)" textLength="33.88" lengthAdjust="spacingAndGlyphs">KSR-SJP-442</text>
<rect x="824.75" y="932.3" width="16.5" height="51.2" fill="none" stroke="#ff0000" stroke-width="1.3" rx="8.25"/>
<path d="M833.5 932.3L833.5 983.5" stroke="#ff0000" stroke-width="1.2" />
<text x="832" y="957.9" font-size="7.6" fill="#ffff00" stroke="#ffff00" stroke-width="0.3" text-anchor="middle" transform="rotate(-90 832 957.9)">14A</text>
<text x="839.4" y="957.9" font-size="5.2" fill="#ffff00" stroke="none" text-anchor="middle" font-weight="bold" transform="rotate(-90 839.4 957.9)" textLength="33.88" lengthAdjust="spacingAndGlyphs">KSR-SJP-442</text>
<rect x="846.75" y="932.3" width="16.5" height="51.2" fill="none" stroke="#ff0000" stroke-width="1.3" rx="8.25"/>
<path d="M855.5 932.3L855.5 983.5" stroke="#ff0000" stroke-width="1.2" />
<text x="854" y="957.9" font-size="7.6" fill="#ffff00" stroke="#ffff00" stroke-width="0.3" text-anchor="middle" transform="rotate(-90 854 957.9)" textLength="39.6" lengthAdjust="spacingAndGlyphs">16 handed</text>
<text x="861.4" y="957.9" font-size="5.2" fill="#ffff00" stroke="none" text-anchor="middle" font-weight="bold" transform="rotate(-90 861.4 957.9)" textLength="33.88" lengthAdjust="spacingAndGlyphs">KSR-SJP-442</text>
<rect x="926.95" y="932.3" width="16.5" height="51.2" fill="none" stroke="#ff0000" stroke-width="1.3" rx="8.25"/>
<path d="M935.5 932.3L935.5 983.5" stroke="#ff0000" stroke-width="1.2" />
<text x="934.2" y="957.9" font-size="7.6" fill="#ffff00" stroke="#ffff00" stroke-width="0.3" text-anchor="middle" transform="rotate(-90 934.2 957.9)">14A</text>
<text x="941.6" y="957.9" font-size="5.2" fill="#ffff00" stroke="none" text-anchor="middle" font-weight="bold" transform="rotate(-90 941.6 957.9)" textLength="33.88" lengthAdjust="spacingAndGlyphs">KSR-SJP-442</text>
<rect x="948.95" y="932.3" width="16.5" height="51.2" fill="none" stroke="#ff0000" stroke-width="1.3" rx="8.25"/>
<path d="M957.5 932.3L957.5 983.5" stroke="#ff0000" stroke-width="1.2" />
<text x="956.2" y="957.9" font-size="7.6" fill="#ffff00" stroke="#ffff00" stroke-width="0.3" text-anchor="middle" transform="rotate(-90 956.2 957.9)" textLength="39.6" lengthAdjust="spacingAndGlyphs">16 handed</text>
<text x="963.6" y="957.9" font-size="5.2" fill="#ffff00" stroke="none" text-anchor="middle" font-weight="bold" transform="rotate(-90 963.6 957.9)" textLength="33.88" lengthAdjust="spacingAndGlyphs">KSR-SJP-442</text>
<rect x="1038.95" y="932.3" width="16.5" height="51.2" fill="none" stroke="#ff0000" stroke-width="1.3" rx="8.25"/>
<path d="M1047.5 932.3L1047.5 983.5" stroke="#ff0000" stroke-width="1.2" />
<text x="1046.2" y="957.9" font-size="7.6" fill="#ffff00" stroke="#ffff00" stroke-width="0.3" text-anchor="middle" transform="rotate(-90 1046.2 957.9)" textLength="39.6" lengthAdjust="spacingAndGlyphs">15 handed</text>
<text x="1053.6" y="957.9" font-size="5.2" fill="#ffff00" stroke="none" text-anchor="middle" font-weight="bold" transform="rotate(-90 1053.6 957.9)" textLength="33.88" lengthAdjust="spacingAndGlyphs">KSR-SJP-445</text>
<text x="518.4" y="764.5" font-size="4.2" fill="#ffff00" stroke="none" text-anchor="middle" font-weight="bold">3115</text>
<text x="521.4" y="788.5" font-size="4.2" fill="#ffff00" stroke="none" text-anchor="middle" font-weight="bold">2456</text>
<text x="462.1" y="764.5" font-size="4" fill="#ffff00" stroke="none" text-anchor="start" font-weight="bold">300</text>
<text x="475.6" y="763.5" font-size="4" fill="#ffff00" stroke="none" text-anchor="start" font-weight="bold">150</text>
<text x="457.1" y="763.5" font-size="4" fill="#ffff00" stroke="none" text-anchor="end" font-weight="bold">050</text>
<text x="470.1" y="788.5" font-size="4" fill="#ffff00" stroke="none" text-anchor="start" font-weight="bold">425</text>
<text x="624.4" y="764.5" font-size="4.2" fill="#ffff00" stroke="none" text-anchor="middle" font-weight="bold">3115</text>
<text x="627.4" y="788.5" font-size="4.2" fill="#ffff00" stroke="none" text-anchor="middle" font-weight="bold">2456</text>
<text x="571.7" y="764.5" font-size="4" fill="#ffff00" stroke="none" text-anchor="start" font-weight="bold">300</text>
<text x="585.2" y="763.5" font-size="4" fill="#ffff00" stroke="none" text-anchor="start" font-weight="bold">150</text>
<text x="566.7" y="763.5" font-size="4" fill="#ffff00" stroke="none" text-anchor="end" font-weight="bold">050</text>
<text x="579.7" y="788.5" font-size="4" fill="#ffff00" stroke="none" text-anchor="start" font-weight="bold">425</text>
<text x="726.6" y="764.5" font-size="4.2" fill="#ffff00" stroke="none" text-anchor="middle" font-weight="bold">3115</text>
<text x="729.6" y="788.5" font-size="4.2" fill="#ffff00" stroke="none" text-anchor="middle" font-weight="bold">2456</text>
<text x="674.1" y="764.5" font-size="4" fill="#ffff00" stroke="none" text-anchor="start" font-weight="bold">300</text>
<text x="687.6" y="763.5" font-size="4" fill="#ffff00" stroke="none" text-anchor="start" font-weight="bold">150</text>
<text x="669.1" y="763.5" font-size="4" fill="#ffff00" stroke="none" text-anchor="end" font-weight="bold">050</text>
<text x="682.1" y="788.5" font-size="4" fill="#ffff00" stroke="none" text-anchor="start" font-weight="bold">425</text>
<text x="829" y="764.5" font-size="4.2" fill="#ffff00" stroke="none" text-anchor="middle" font-weight="bold">3115</text>
<text x="832" y="788.5" font-size="4.2" fill="#ffff00" stroke="none" text-anchor="middle" font-weight="bold">2456</text>
<text x="776.1" y="764.5" font-size="4" fill="#ffff00" stroke="none" text-anchor="start" font-weight="bold">300</text>
<text x="789.6" y="763.5" font-size="4" fill="#ffff00" stroke="none" text-anchor="start" font-weight="bold">150</text>
<text x="771.1" y="763.5" font-size="4" fill="#ffff00" stroke="none" text-anchor="end" font-weight="bold">050</text>
<text x="784.1" y="788.5" font-size="4" fill="#ffff00" stroke="none" text-anchor="start" font-weight="bold">425</text>
<text x="931.5" y="764.5" font-size="4.2" fill="#ffff00" stroke="none" text-anchor="middle" font-weight="bold">3115</text>
<text x="934.5" y="788.5" font-size="4.2" fill="#ffff00" stroke="none" text-anchor="middle" font-weight="bold">2456</text>
<text x="878.9" y="764.5" font-size="4" fill="#ffff00" stroke="none" text-anchor="start" font-weight="bold">300</text>
<text x="892.4" y="763.5" font-size="4" fill="#ffff00" stroke="none" text-anchor="start" font-weight="bold">150</text>
<text x="873.9" y="763.5" font-size="4" fill="#ffff00" stroke="none" text-anchor="end" font-weight="bold">050</text>
<text x="886.9" y="788.5" font-size="4" fill="#ffff00" stroke="none" text-anchor="start" font-weight="bold">425</text>
<text x="1032.4" y="764.5" font-size="4.2" fill="#ffff00" stroke="none" text-anchor="middle" font-weight="bold">3115</text>
<text x="1035.4" y="788.5" font-size="4.2" fill="#ffff00" stroke="none" text-anchor="middle" font-weight="bold">2456</text>
<text x="981.1" y="764.5" font-size="4" fill="#ffff00" stroke="none" text-anchor="start" font-weight="bold">300</text>
<text x="994.6" y="763.5" font-size="4" fill="#ffff00" stroke="none" text-anchor="start" font-weight="bold">150</text>
<text x="976.1" y="763.5" font-size="4" fill="#ffff00" stroke="none" text-anchor="end" font-weight="bold">050</text>
<text x="989.1" y="788.5" font-size="4" fill="#ffff00" stroke="none" text-anchor="start" font-weight="bold">425</text>
<text x="366.5" y="764.5" font-size="4" fill="#ffff00" stroke="none" text-anchor="start" font-weight="bold">365</text>
<text x="356" y="764.5" font-size="4" fill="#ffff00" stroke="none" text-anchor="start" font-weight="bold">300</text>
<text x="408" y="801.5" font-size="4.2" fill="#ffff00" stroke="none" text-anchor="middle" font-weight="bold">1557</text>
<text x="444" y="801.5" font-size="4.2" fill="#ffff00" stroke="none" text-anchor="middle" font-weight="bold">904</text>
<path d="M352 760L355.2 756.6" stroke="#ff0000" stroke-width="1.2" />
<path d="M365.1 760L368.3 756.6" stroke="#ff0000" stroke-width="1.2" />
<path d="M457 760L460.2 756.6" stroke="#ff0000" stroke-width="1.2" />
<path d="M471.4 760L474.6 756.6" stroke="#ff0000" stroke-width="1.2" />
<path d="M468.4 784L471.6 780.6" stroke="#ff0000" stroke-width="1.2" />
<path d="M479.4 784L482.6 780.6" stroke="#ff0000" stroke-width="1.2" />
<path d="M481.5 782L481.5 796" stroke="#ff0000" stroke-width="1.2" />
<path d="M481.5 805L481.5 806.2" stroke="#ff0000" stroke-width="1.2" />
<rect x="1078" y="734" width="5" height="104" fill="#c9c9c9" stroke="none" stroke-width="1" />
<path d="M1078.5 734L1078.5 838" stroke="#8a8a8a" stroke-width="1.2" />
<path d="M1083.5 734L1083.5 838" stroke="#8a8a8a" stroke-width="1.2" />
<path d="M1080.5 734L1080.5 838" stroke="#e8e8e8" stroke-width="1.2" />
<rect x="1083.6" y="734" width="8.2" height="34" fill="url(#conc)" stroke="none" stroke-width="1" />
<rect x="1083.6" y="766.5" width="18.3" height="72" fill="url(#conc)" stroke="none" stroke-width="1" />
<rect x="1088.4" y="838" width="13.5" height="172" fill="url(#conc)" stroke="none" stroke-width="1" />
<path d="M1091.8 734L1091.8 766.5L1101.9 766.5L1101.9 1010" stroke="#ff00ff" stroke-width="1.2" fill="none" />
<path d="M1088.5 845L1088.5 1010" stroke="#ff00ff" stroke-width="1.2" />
<path d="M1102 793.5L1217.5 793.5" stroke="#00ffff" stroke-width="1.2" />
<path d="M1102 821.5L1217.5 821.5" stroke="#00ffff" stroke-width="1.2" />
<rect x="1068" y="818.5" width="27.4" height="36.2" fill="none" stroke="#00ff00" stroke-width="1.1" rx="10" stroke-dasharray="3.8 2.2"/>
<path d="M1077 832L1086 832L1088 840L1082 841" stroke="#ff00ff" stroke-width="1.2" fill="none" />
<path d="M1076 833L1080 837L1076 838Z" fill="#ffff00"/>
<path d="M1084 840L1084 905L1087.5 905L1087.5 840" stroke="#00ffff" stroke-width="1.2" fill="none" />
<path d="M1085.5 840L1085.5 905" stroke="#c8c8c8" stroke-width="1.2" />
<path d="M1084 905L1084 922L1080 938L1080 946L1086 946" stroke="#00ff00" stroke-width="1.2" fill="none" />
<path d="M1087.5 905L1087.5 930L1080.5 947L1080.5 985L1077.5 985L1077.5 992L1083.5 992L1083.5 1010" stroke="#00ffff" stroke-width="1.2" fill="none" />
<path d="M1080.5 950L1088 950L1088 985L1080.5 985" stroke="#00ffff" stroke-width="1.2" fill="none" />
<path d="M1081 950L1088 985M1088 950L1081 985M1081 930L1088 945M1088 922L1081 940" stroke="#bdbdbd" stroke-width="1"/>
<path d="M1083.5 992L1088 1002L1088 1010" stroke="#c8c8c8" stroke-width="1.2" fill="none" />
<rect x="1218.6" y="734" width="8.8" height="276" fill="url(#conc)" stroke="none" stroke-width="1" />
<path d="M1218.5 734L1218.5 1010" stroke="#ff00ff" stroke-width="1.2" />
<path d="M1227.5 734L1227.5 1010" stroke="#ff00ff" stroke-width="1.2" />
<text x="1263" y="1010.5" font-size="12.2" fill="#ffff00" stroke="#ffff00" stroke-width="0.5" text-anchor="start" font-weight="bold" transform="rotate(-90 1263 1010.5)" textLength="107.5" lengthAdjust="spacingAndGlyphs">STRIP SECTION - 4 A</text>
<path d="M292.5 212.5L292.5 1010" stroke="#ff0000" stroke-width="1.2" stroke-dasharray="14.6 2.7 1.8 2.7" stroke-dashoffset="2"/>
<path d="M353.5 212.5L353.5 1010" stroke="#ff0000" stroke-width="1.2" stroke-dasharray="14.6 2.7 1.8 2.7" stroke-dashoffset="2"/>
<path d="M458.5 212.5L458.5 1010" stroke="#ff0000" stroke-width="1.2" stroke-dasharray="14.6 2.7 1.8 2.7" stroke-dashoffset="2"/>
<path d="M568.5 212.5L568.5 1010" stroke="#ff0000" stroke-width="1.2" stroke-dasharray="14.6 2.7 1.8 2.7" stroke-dashoffset="2"/>
<path d="M670.5 212.5L670.5 1010" stroke="#ff0000" stroke-width="1.2" stroke-dasharray="14.6 2.7 1.8 2.7" stroke-dashoffset="2"/>
<path d="M772.5 212.5L772.5 1010" stroke="#ff0000" stroke-width="1.2" stroke-dasharray="14.6 2.7 1.8 2.7" stroke-dashoffset="2"/>
<path d="M875.5 212.5L875.5 1010" stroke="#ff0000" stroke-width="1.2" stroke-dasharray="14.6 2.7 1.8 2.7" stroke-dashoffset="2"/>
<path d="M977.5 212.5L977.5 1010" stroke="#ff0000" stroke-width="1.2" stroke-dasharray="14.6 2.7 1.8 2.7" stroke-dashoffset="2"/>
<path d="M1077.5 212.5L1077.5 1010" stroke="#ff0000" stroke-width="1.2" stroke-dasharray="14.6 2.7 1.8 2.7" stroke-dashoffset="2"/>
<path d="M1215.5 212.5L1215.5 1010" stroke="#ff0000" stroke-width="1.2" stroke-dasharray="14.6 2.7 1.8 2.7" stroke-dashoffset="2"/>
<path d="M212 356.5L1247 356.5" stroke="#ff0000" stroke-width="1.2" stroke-dasharray="20 3 3 3" stroke-dashoffset="0"/>
<path d="M212 463.5L1247 463.5" stroke="#ff0000" stroke-width="1.2" stroke-dasharray="20 3 3 3" stroke-dashoffset="7"/>
<path d="M212 791.5L1247 791.5" stroke="#ff0000" stroke-width="1.2" stroke-dasharray="20 3 3 3" stroke-dashoffset="3"/>
<path d="M212 840.5L1247 840.5" stroke="#ff0000" stroke-width="1.2" stroke-dasharray="20 3 3 3" stroke-dashoffset="11"/>
<rect x="0" y="1049.2" width="1919" height="1.8" fill="#505050" stroke="none" stroke-width="1" />
<path d="M17.3 945.3L17.3 1032.2L67.5 1032.2" stroke="#1a3cff" stroke-width="1.2" fill="none" />
<path d="M17.3 945.3L67.5 1032.2" stroke="#1a3cff" stroke-width="1.2" stroke-dasharray="3 1"/>
<rect x="17.3" y="1024.3" width="8.4" height="8" fill="none" stroke="#1a3cff" stroke-width="1.2" />
<path d="M19 971L25.5 978.5L32 970.5" stroke="#1a3cff" stroke-width="1.2" fill="none" />
<path d="M25.5 978.5L25.5 983.5" stroke="#1a3cff" stroke-width="1.2" />
<path d="M45 1018L58 1031" stroke="#1a3cff" stroke-width="1.2" />
<path d="M58 1018L45 1031" stroke="#1a3cff" stroke-width="1.2" />
<rect x="1850.7" y="189" width="10.5" height="3.1" fill="#f2f2f2" stroke="#383838" stroke-width="0.9" />
<rect x="1872.9" y="182.7" width="8.4" height="8.5" fill="#f2f2f2" stroke="#383838" stroke-width="0.9" />
<rect x="1870.9" y="185.1" width="8" height="8" fill="#f2f2f2" stroke="#383838" stroke-width="0.9" />
<rect x="1873.3" y="187.4" width="3.3" height="3.3" fill="#8a8a8a" stroke="#383838" stroke-width="0.8" />
<path d="M1891.200 184.300L1899.900 191.800M1899.900 184.300L1891.200 191.800" stroke="#383838" stroke-width="3.800"/><path d="M1891.200 184.300L1899.900 191.800M1899.900 184.300L1891.200 191.800" stroke="#f6f6f6" stroke-width="2.300"/>
<rect x="1875.5" y="432.5" width="33" height="133" fill="#9c9c9c" stroke="#707070" stroke-width="1.7" rx="4"/>
<path d="M1878 443.5L1906 443.5" stroke="#a9a9a9" stroke-width="1.2" stroke-dasharray="1 1"/>
<path d="M1879 478.5L1905 478.5" stroke="#909090" stroke-width="1.2" />
<circle cx="1902" cy="438" r="3" stroke="#858585" fill="none"/><path d="M1900.500 436.500L1903.500 439.500M1903.500 436.500L1900.500 439.500" stroke="#858585"/>
<circle cx="1902" cy="559" r="3" stroke="#858585" fill="none"/><path d="M1900.300 559H1903.700" stroke="#858585"/>
<rect x="1880.500" y="453.500" width="17" height="17" rx="6" stroke="#8a8a8a" stroke-width="1.300" fill="none"/><circle cx="1889" cy="462" r="4.500" stroke="#8a8a8a" stroke-width="1.300" fill="none"/>
<text x="1893" y="474.5" font-size="7.5" fill="#858585" stroke="none" text-anchor="start" font-weight="bold">2D</text>
<path d="M1883 500C1881 495 1884 493 1886 496L1886 487C1886 485 1888.500 485 1888.500 487L1889 484.500C1889 482.500 1891.500 482.500 1891.500 484.500L1892 486C1892 484 1894.500 484 1894.500 486L1895 489.500C1895 487.500 1897.500 487.500 1897.500 489.500L1897 498C1896.500 503 1894 505 1890 505C1886 505 1884.500 503.500 1883 500Z" stroke="#888" stroke-width="1.200" fill="none"/>
<path d="M1881 513L1895 527M1895 513L1881 527" stroke="#888" stroke-width="1.200"/><path d="M1880.500 512.500H1884.500M1880.500 512.500V516.500M1895.500 512.500H1891.500M1895.500 512.500V516.500M1880.500 527.500H1884.500M1880.500 527.500V523.500" stroke="#888" stroke-width="1.200"/><circle cx="1897.500" cy="527.500" r="4" stroke="#888" stroke-width="1.300" fill="#9b9b9b"/><path d="M1900.500 530.500L1904 534" stroke="#888" stroke-width="1.800"/>
<path d="M1890 541.500H1895L1892.500 544.500Z" fill="#858585"/>
<defs><linearGradient id="msg" x1="0" x2="0" y1="0" y2="1"><stop offset="0" stop-color="#8e8e8e"/><stop offset="1" stop-color="#737373"/></linearGradient></defs>
<rect x="646" y="950" width="634" height="30" fill="url(#msg)" stroke="none" stroke-width="1" rx="2" opacity=".86"/>
<text x="648" y="962" font-size="11.67" fill="#f4f4f4" font-family="Liberation Mono, DejaVu Sans Mono, monospace" xml:space="preserve">Autodesk DWG.  This file is a TrustedDWG last saved by an Autodesk application or Autodesk</text>
<text x="648" y="977" font-size="11.67" fill="#f4f4f4" font-family="Liberation Mono, DejaVu Sans Mono, monospace">licensed application.</text>
<rect x="646" y="985.4" width="59.8" height="14.4" fill="#6c6c6c" stroke="none" stroke-width="1" rx="2"/>
<text x="648" y="996.6999999999999" font-size="11.67" fill="#ffffff" font-family="Liberation Mono, DejaVu Sans Mono, monospace">Command:</text>
<rect x="646" y="1005.4" width="59.8" height="14.4" fill="#6c6c6c" stroke="none" stroke-width="1" rx="2"/>
<text x="648" y="1016.6999999999999" font-size="11.67" fill="#ffffff" font-family="Liberation Mono, DejaVu Sans Mono, monospace">Command:</text>
<defs><linearGradient id="clg" x1="0" x2="0" y1="0" y2="1"><stop offset="0" stop-color="#989898"/><stop offset="1" stop-color="#666"/></linearGradient></defs>
<rect x="584.5" y="1023.5" width="752" height="25.5" fill="url(#clg)" stroke="#6e6e6e" stroke-width="1" rx="2.5"/>
<rect x="640" y="1024.5" width="696" height="22.5" fill="#ffffff" stroke="#c0c0c0" stroke-width="1" rx="1.5"/>
<path d="M641 1047.5L1336 1047.5" stroke="#d8d8d8" stroke-width="1.4" />
<rect x="588" y="1027" width="1.4" height="1.4" fill="#d0d0d0" stroke="none" stroke-width="1" />
<rect x="591" y="1027" width="1.4" height="1.4" fill="#d0d0d0" stroke="none" stroke-width="1" />
<rect x="588" y="1030" width="1.4" height="1.4" fill="#d0d0d0" stroke="none" stroke-width="1" />
<rect x="591" y="1030" width="1.4" height="1.4" fill="#d0d0d0" stroke="none" stroke-width="1" />
<rect x="588" y="1033" width="1.4" height="1.4" fill="#d0d0d0" stroke="none" stroke-width="1" />
<rect x="591" y="1033" width="1.4" height="1.4" fill="#d0d0d0" stroke="none" stroke-width="1" />
<rect x="588" y="1036" width="1.4" height="1.4" fill="#d0d0d0" stroke="none" stroke-width="1" />
<rect x="591" y="1036" width="1.4" height="1.4" fill="#d0d0d0" stroke="none" stroke-width="1" />
<rect x="588" y="1039" width="1.4" height="1.4" fill="#d0d0d0" stroke="none" stroke-width="1" />
<rect x="591" y="1039" width="1.4" height="1.4" fill="#d0d0d0" stroke="none" stroke-width="1" />
<rect x="588" y="1042" width="1.4" height="1.4" fill="#d0d0d0" stroke="none" stroke-width="1" />
<rect x="591" y="1042" width="1.4" height="1.4" fill="#d0d0d0" stroke="none" stroke-width="1" />
<rect x="588" y="1045" width="1.4" height="1.4" fill="#d0d0d0" stroke="none" stroke-width="1" />
<rect x="591" y="1045" width="1.4" height="1.4" fill="#d0d0d0" stroke="none" stroke-width="1" />
<path d="M600 1031.5L608 1040.5" stroke="#f8f8f8" stroke-width="1.8" />
<path d="M608 1031.5L600 1040.5" stroke="#f8f8f8" stroke-width="1.8" />
<path d="M620.500 1043L627.500 1036" stroke="#f4f4f4" stroke-width="2.200"/><path d="M626 1036.500A3.600 3.600 0 1 0 631.500 1031L629 1034L627.800 1032.800L630.500 1030A3.600 3.600 0 0 0 626 1036.500Z" fill="#f4f4f4"/>
<rect x="645.5" y="1030.5" width="15" height="11" fill="#f2f2f2" stroke="#8e8e8e" stroke-width="1.2" />
<path d="M648 1034L651 1036.2L648 1038.4" stroke="#555" stroke-width="1.2" fill="none" />
<path d="M652 1039.5L656 1039.5" stroke="#555" stroke-width="1.2" />
<path d="M663.500 1034.500H668.500L666 1037.500Z" fill="#9a9a9a"/>
<text x="677.300" y="1040" font-size="11.400" fill="#b9b9b9" font-style="italic" font-family="Liberation Mono, DejaVu Sans Mono, monospace">Type a command</text>
<path d="M1324.500 1039H1331.500L1328 1034.500Z" fill="#333"/>
</svg>
<div class="abs" style="left:0;top:0;width:1919px;height:24px;background:#5e2116"></div>
<div class="abs" style="left:41px;top:0;width:262px;height:24px;background:linear-gradient(#a3a3a3,#9c9c9c)"></div>
<div class="abs" style="left:1310px;top:0;width:447px;height:24px;background:#a0a0a0"></div>
<div class="abs" style="left:1323px;top:1px;width:179px;height:21px;background:#7f7f7f;border:1px solid #4a4a4a;box-sizing:border-box"></div>
<svg class="abs" style="left:1312px;top:5px" width="10" height="14"><path d="M3 2 L8 7 L3 12Z" fill="#e6e6e6"/></svg>
<span class="t" style="left:1327.5px;top:4.0px;font-size:11px;line-height:15px;color:#cfcfcf;transform:scaleX(0.9616);font-family:"Liberation Sans",sans-serif;font-style:italic;">Type a keyword or phrase</span>
<span class="t" style="left:1553.0px;top:4.5px;font-size:12px;line-height:16px;color:#e4e4e4;transform:scaleX(0.9502);font-family:"Liberation Sans",sans-serif;">Sign In</span>
<span class="t" style="left:682.0px;top:4.0px;font-size:12px;line-height:16px;color:#1c0b08;transform:scaleX(0.9777);font-family:"Liberation Sans",sans-serif;">Autodesk AutoCAD 2019</span>
<span class="t" style="left:824.3px;top:4.0px;font-size:12px;line-height:16px;color:#1c0b08;transform:scaleX(0.9013);font-family:"Liberation Sans",sans-serif;">KSR-SJP-BC403.dwg</span>
<svg class="abs" style="left:1780px;top:0" width="139" height="24" fill="none" stroke="#e8e8e8" stroke-width="1"><path d="M19 11.5H30"/><rect x="64.5" y="8.5" width="8" height="8" rx="1"/><path d="M66.5 8.5V6.5H74.5V14.5H72.5"/><path d="M110 6.5L120.5 17M120.5 6.5L110 17" stroke-width="1.2"/></svg>
<div class="abs" style="left:0;top:24px;width:1919px;height:21px;background:#4a4a4a;border-top:1px solid #2e2e2e;box-sizing:border-box"></div>
<div class="abs" style="left:0;top:44px;width:1919px;height:100px;background:linear-gradient(90deg,#404040 0,#404040 1672px,#2e2e2e 100%)"></div>
<div class="abs" style="left:1px;top:45px;width:1670px;height:98px;background:#5a5a5a"></div>
<div class="abs" style="left:1px;top:124px;width:1670px;height:18px;background:linear-gradient(#525252,#484848)"></div>
<div class="abs" style="left:0;top:44px;width:1919px;height:1px;background:#333"></div>
<div class="abs" style="left:0;top:142px;width:1672px;height:1px;background:#3a3a3a"></div>
<div class="abs" style="left:0;top:143px;width:1919px;height:1px;background:#6c6c6c"></div>
<div class="abs" style="left:0;top:144px;width:1919px;height:2px;background:#1f1f1f"></div>
<div class="abs" style="left:46px;top:27px;width:51px;height:18px;background:linear-gradient(#626262,#5a5a5a);border:1px solid #2c2c2c;border-bottom:none;box-sizing:border-box"></div>
<div class="abs" style="left:788px;top:27px;width:54px;height:16px;background:#55585f;border:1px dotted #6b78a8;box-sizing:border-box"></div>
<span class="t" style="left:55.5px;top:27.0px;font-size:12px;line-height:16px;color:#f0f0f0;transform:scaleX(1.0153);font-family:"Liberation Sans",sans-serif;">Home</span>
<span class="t" style="left:108.0px;top:27.0px;font-size:12px;line-height:16px;color:#dcdcdc;transform:scaleX(0.9596);font-family:"Liberation Sans",sans-serif;">Insert</span>
<span class="t" style="left:157.0px;top:27.0px;font-size:12px;line-height:16px;color:#dcdcdc;transform:scaleX(1.0262);font-family:"Liberation Sans",sans-serif;">Annotate</span>
<span class="t" style="left:226.3px;top:27.0px;font-size:12px;line-height:16px;color:#dcdcdc;transform:scaleX(0.9704);font-family:"Liberation Sans",sans-serif;">Parametric</span>
<span class="t" style="left:303.0px;top:27.0px;font-size:12px;line-height:16px;color:#dcdcdc;transform:scaleX(0.9538);font-family:"Liberation Sans",sans-serif;">View</span>
<span class="t" style="left:348.3px;top:27.0px;font-size:12px;line-height:16px;color:#dcdcdc;transform:scaleX(0.9824);font-family:"Liberation Sans",sans-serif;">Manage</span>
<span class="t" style="left:411.4px;top:27.0px;font-size:12px;line-height:16px;color:#dcdcdc;transform:scaleX(1.0438);font-family:"Liberation Sans",sans-serif;">Output</span>
<span class="t" style="left:469.0px;top:27.0px;font-size:12px;line-height:16px;color:#dcdcdc;transform:scaleX(1.0396);font-family:"Liberation Sans",sans-serif;">Add-ins</span>
<span class="t" style="left:531.3px;top:27.0px;font-size:12px;line-height:16px;color:#dcdcdc;transform:scaleX(0.9891);font-family:"Liberation Sans",sans-serif;">Collaborate</span>
<span class="t" style="left:612.0px;top:27.0px;font-size:12px;line-height:16px;color:#dcdcdc;transform:scaleX(0.9305);font-family:"Liberation Sans",sans-serif;">Express Tools</span>
<span class="t" style="left:701.0px;top:27.0px;font-size:12px;line-height:16px;color:#dcdcdc;transform:scaleX(0.9737);font-family:"Liberation Sans",sans-serif;">Featured Apps</span>
<span class="t" style="left:797.0px;top:27.0px;font-size:12px;line-height:16px;color:#f0f0f0;transform:scaleX(0.9992);font-family:"Liberation Sans",sans-serif;">Layout</span>
<svg class="abs" style="left:862px;top:28px" width="30" height="14"><rect x="2.5" y="3.5" width="13" height="7" rx="2" fill="#e0e0e0"/><path d="M6 8.5L9 5.5L12 8.5Z" fill="#333"/><path d="M21 6L27 6L24 9Z" fill="#ddd"/></svg>
<div class="abs" style="left:0;top:0;width:41px;height:41px;background:#1a1a1a"></div>
<div class="abs" style="left:1px;top:1px;width:39px;height:39px;background:linear-gradient(#c2c2c2 0%,#a4a4a4 45%,#6c6c6c 100%)"></div>
<svg class="abs" style="left:0;top:0" width="41" height="41"><path d="M5 29 L13.5 3.5 L20.5 3.5 L28 29 L22.5 29 L20.8 23 L12.5 23 L10.5 29 Z M14 18.5 L19.6 18.5 L17 9.5 Z" fill="#c2202c" fill-rule="evenodd"/><path d="M13.5 3.5L17 9.5L20.5 3.5Z" fill="#8e1420"/><path d="M5 29L10.5 29L12.5 23L8 24Z" fill="#e0505a"/><path d="M22.5 29L28 29L25 22Z" fill="#e0505a"/><path d="M31 19L38.5 19L34.7 23Z" fill="#222"/></svg>
<div class="abs" style="left:225px;top:46px;width:1px;height:96px;background:#444"></div>
<div class="abs" style="left:226px;top:46px;width:1px;height:96px;background:#666"></div>
<div class="abs" style="left:474px;top:46px;width:1px;height:96px;background:#444"></div>
<div class="abs" style="left:475px;top:46px;width:1px;height:96px;background:#666"></div>
<div class="abs" style="left:664px;top:46px;width:1px;height:96px;background:#444"></div>
<div class="abs" style="left:665px;top:46px;width:1px;height:96px;background:#666"></div>
<div class="abs" style="left:937px;top:46px;width:1px;height:96px;background:#444"></div>
<div class="abs" style="left:938px;top:46px;width:1px;height:96px;background:#666"></div>
<div class="abs" style="left:1098px;top:46px;width:1px;height:96px;background:#444"></div>
<div class="abs" style="left:1099px;top:46px;width:1px;height:96px;background:#666"></div>
<div class="abs" style="left:1362px;top:46px;width:1px;height:96px;background:#444"></div>
<div class="abs" style="left:1363px;top:46px;width:1px;height:96px;background:#666"></div>
<div class="abs" style="left:1432px;top:46px;width:1px;height:96px;background:#444"></div>
<div class="abs" style="left:1433px;top:46px;width:1px;height:96px;background:#666"></div>
<div class="abs" style="left:1529px;top:46px;width:1px;height:96px;background:#444"></div>
<div class="abs" style="left:1530px;top:46px;width:1px;height:96px;background:#666"></div>
<div class="abs" style="left:1610px;top:46px;width:1px;height:96px;background:#444"></div>
<div class="abs" style="left:1611px;top:46px;width:1px;height:96px;background:#666"></div>
<div class="abs" style="left:1671px;top:45px;width:1px;height:98px;background:#3a3a3a"></div>
<span class="t" style="left:12.5px;top:87.0px;font-size:12px;line-height:16px;color:#ececec;transform:scaleX(0.9389);font-family:"Liberation Sans",sans-serif;">Line</span>
<span class="t" style="left:45.0px;top:87.0px;font-size:12px;line-height:16px;color:#ececec;transform:scaleX(0.9995);font-family:"Liberation Sans",sans-serif;">Polyline</span>
<span class="t" style="left:101.3px;top:87.0px;font-size:12px;line-height:16px;color:#ececec;transform:scaleX(0.9619);font-family:"Liberation Sans",sans-serif;">Circle</span>
<span class="t" style="left:153.0px;top:87.0px;font-size:12px;line-height:16px;color:#ececec;transform:scaleX(0.9888);font-family:"Liberation Sans",sans-serif;">Arc</span>
<span class="t" style="left:254.3px;top:53.0px;font-size:12px;line-height:16px;color:#ececec;transform:scaleX(1.0053);font-family:"Liberation Sans",sans-serif;">Move</span>
<span class="t" style="left:254.3px;top:77.0px;font-size:12px;line-height:16px;color:#ececec;transform:scaleX(0.9817);font-family:"Liberation Sans",sans-serif;">Copy</span>
<span class="t" style="left:254.3px;top:101.0px;font-size:12px;line-height:16px;color:#ececec;transform:scaleX(0.9522);font-family:"Liberation Sans",sans-serif;">Stretch</span>
<span class="t" style="left:326.3px;top:53.0px;font-size:12px;line-height:16px;color:#ececec;transform:scaleX(0.9532);font-family:"Liberation Sans",sans-serif;">Rotate</span>
<span class="t" style="left:326.3px;top:77.0px;font-size:12px;line-height:16px;color:#ececec;transform:scaleX(1.0375);font-family:"Liberation Sans",sans-serif;">Mirror</span>
<span class="t" style="left:326.3px;top:101.0px;font-size:12px;line-height:16px;color:#ececec;transform:scaleX(0.8728);font-family:"Liberation Sans",sans-serif;">Scale</span>
<span class="t" style="left:395.0px;top:101.0px;font-size:12px;line-height:16px;color:#ececec;transform:scaleX(0.9591);font-family:"Liberation Sans",sans-serif;">Array</span>
<span class="t" style="left:395.0px;top:77.0px;font-size:12px;line-height:16px;color:#ececec;transform:scaleX(0.9671);font-family:"Liberation Sans",sans-serif;">Fillet</span>
<span class="t" style="left:490.0px;top:87.0px;font-size:12px;line-height:16px;color:#ececec;transform:scaleX(0.9088);font-family:"Liberation Sans",sans-serif;">Text</span>
<span class="t" style="left:524.3px;top:87.0px;font-size:12px;line-height:16px;color:#ececec;transform:scaleX(0.9914);font-family:"Liberation Sans",sans-serif;">Dimension</span>
<span class="t" style="left:610.0px;top:53.0px;font-size:12px;line-height:16px;color:#ececec;transform:scaleX(0.9593);font-family:"Liberation Sans",sans-serif;">Linear</span>
<span class="t" style="left:610.0px;top:77.0px;font-size:12px;line-height:16px;color:#ececec;transform:scaleX(0.9367);font-family:"Liberation Sans",sans-serif;">Leader</span>
<span class="t" style="left:610.0px;top:101.0px;font-size:12px;line-height:16px;color:#ececec;transform:scaleX(0.9412);font-family:"Liberation Sans",sans-serif;">Table</span>
<span class="t" style="left:683.0px;top:87.0px;font-size:12px;line-height:16px;color:#ececec;transform:scaleX(0.9161);font-family:"Liberation Sans",sans-serif;">Layer</span>
<span class="t" style="left:670.0px;top:102.0px;font-size:12px;line-height:16px;color:#ececec;transform:scaleX(0.9599);font-family:"Liberation Sans",sans-serif;">Properties</span>
<span class="t" style="left:848.0px;top:77.0px;font-size:12px;line-height:16px;color:#ececec;transform:scaleX(0.9836);font-family:"Liberation Sans",sans-serif;">Make Current</span>
<span class="t" style="left:848.0px;top:101.0px;font-size:12px;line-height:16px;color:#ececec;transform:scaleX(0.9768);font-family:"Liberation Sans",sans-serif;">Match Layer</span>
<span class="t" style="left:944.5px;top:87.0px;font-size:12px;line-height:16px;color:#ececec;transform:scaleX(0.9763);font-family:"Liberation Sans",sans-serif;">Insert</span>
<span class="t" style="left:1004.3px;top:53.0px;font-size:12px;line-height:16px;color:#ececec;transform:scaleX(0.9357);font-family:"Liberation Sans",sans-serif;">Create</span>
<span class="t" style="left:1004.3px;top:77.0px;font-size:12px;line-height:16px;color:#ececec;transform:scaleX(0.9430);font-family:"Liberation Sans",sans-serif;">Edit</span>
<span class="t" style="left:1004.3px;top:101.0px;font-size:12px;line-height:16px;color:#ececec;transform:scaleX(1.0062);font-family:"Liberation Sans",sans-serif;">Edit Attributes</span>
<span class="t" style="left:1114.3px;top:87.0px;font-size:12px;line-height:16px;color:#ececec;transform:scaleX(1.0160);font-family:"Liberation Sans",sans-serif;">Match</span>
<span class="t" style="left:1104.3px;top:102.0px;font-size:12px;line-height:16px;color:#ececec;transform:scaleX(0.9599);font-family:"Liberation Sans",sans-serif;">Properties</span>
<span class="t" style="left:1369.3px;top:87.0px;font-size:12px;line-height:16px;color:#ececec;transform:scaleX(0.9595);font-family:"Liberation Sans",sans-serif;">Group</span>
<span class="t" style="left:1446.2px;top:87.0px;font-size:12px;line-height:16px;color:#ececec;transform:scaleX(0.9639);font-family:"Liberation Sans",sans-serif;">Measure</span>
<span class="t" style="left:1543.2px;top:87.0px;font-size:12px;line-height:16px;color:#ececec;transform:scaleX(0.9125);font-family:"Liberation Sans",sans-serif;">Paste</span>
<span class="t" style="left:1629.5px;top:87.0px;font-size:12px;line-height:16px;color:#ececec;transform:scaleX(0.8665);font-family:"Liberation Sans",sans-serif;">Base</span>
<span class="t" style="left:93.3px;top:125.0px;font-size:12px;line-height:16px;color:#ececec;transform:scaleX(0.9357);font-family:"Liberation Sans",sans-serif;">Draw</span>
<svg class="abs" style="left:126px;top:130px" width="8" height="6"><path d="M0 0.5L8 0.5L4 4.5Z" fill="#eee"/></svg>
<span class="t" style="left:325.0px;top:125.0px;font-size:12px;line-height:16px;color:#ececec;transform:scaleX(1.0610);font-family:"Liberation Sans",sans-serif;">Modify</span>
<svg class="abs" style="left:368.5px;top:130px" width="8" height="6"><path d="M0 0.5L8 0.5L4 4.5Z" fill="#eee"/></svg>
<span class="t" style="left:533.3px;top:125.0px;font-size:12px;line-height:16px;color:#ececec;transform:scaleX(1.0317);font-family:"Liberation Sans",sans-serif;">Annotation</span>
<svg class="abs" style="left:598.5px;top:130px" width="8" height="6"><path d="M0 0.5L8 0.5L4 4.5Z" fill="#eee"/></svg>
<span class="t" style="left:778.3px;top:125.0px;font-size:12px;line-height:16px;color:#ececec;transform:scaleX(0.8940);font-family:"Liberation Sans",sans-serif;">Layers</span>
<svg class="abs" style="left:817.3px;top:130px" width="8" height="6"><path d="M0 0.5L8 0.5L4 4.5Z" fill="#eee"/></svg>
<span class="t" style="left:997.5px;top:125.0px;font-size:12px;line-height:16px;color:#ececec;transform:scaleX(0.9542);font-family:"Liberation Sans",sans-serif;">Block</span>
<svg class="abs" style="left:1032.3px;top:130px" width="8" height="6"><path d="M0 0.5L8 0.5L4 4.5Z" fill="#eee"/></svg>
<span class="t" style="left:1192.0px;top:125.0px;font-size:12px;line-height:16px;color:#ececec;transform:scaleX(0.9599);font-family:"Liberation Sans",sans-serif;">Properties</span>
<svg class="abs" style="left:1251px;top:130px" width="8" height="6"><path d="M0 0.5L8 0.5L4 4.5Z" fill="#eee"/></svg>
<span class="t" style="left:1372.0px;top:125.0px;font-size:12px;line-height:16px;color:#ececec;transform:scaleX(0.9479);font-family:"Liberation Sans",sans-serif;">Groups</span>
<svg class="abs" style="left:1416px;top:130px" width="8" height="6"><path d="M0 0.5L8 0.5L4 4.5Z" fill="#eee"/></svg>
<span class="t" style="left:1454.2px;top:125.0px;font-size:12px;line-height:16px;color:#ececec;transform:scaleX(1.0034);font-family:"Liberation Sans",sans-serif;">Utilities</span>
<svg class="abs" style="left:1499.2px;top:130px" width="8" height="6"><path d="M0 0.5L8 0.5L4 4.5Z" fill="#eee"/></svg>
<span class="t" style="left:1544.5px;top:125.0px;font-size:12px;line-height:16px;color:#ececec;transform:scaleX(0.9969);font-family:"Liberation Sans",sans-serif;">Clipboard</span>
<span class="t" style="left:1615.7px;top:125.0px;font-size:12px;line-height:16px;color:#ececec;transform:scaleX(0.9421);font-family:"Liberation Sans",sans-serif;">View</span>
<svg class="abs" style="left:1646px;top:130px" width="8" height="6"><path d="M0 0.5L8 0.5L4 4.5Z" fill="#eee"/></svg>
<svg class="abs" style="left:209.5px;top:59.5px" width="6" height="4"><path d="M0 0L6 0L3 3Z" fill="#e8e8e8"/></svg>
<svg class="abs" style="left:209.5px;top:83.5px" width="6" height="4"><path d="M0 0L6 0L3 3Z" fill="#e8e8e8"/></svg>
<svg class="abs" style="left:209.5px;top:107.5px" width="6" height="4"><path d="M0 0L6 0L3 3Z" fill="#e8e8e8"/></svg>
<svg class="abs" style="left:430.5px;top:83.5px" width="6" height="4"><path d="M0 0L6 0L3 3Z" fill="#e8e8e8"/></svg>
<svg class="abs" style="left:430.5px;top:107.5px" width="6" height="4"><path d="M0 0L6 0L3 3Z" fill="#e8e8e8"/></svg>
<svg class="abs" style="left:112.5px;top:104.5px" width="6" height="4"><path d="M0 0L6 0L3 3Z" fill="#e8e8e8"/></svg>
<svg class="abs" style="left:158.5px;top:104.5px" width="6" height="4"><path d="M0 0L6 0L3 3Z" fill="#e8e8e8"/></svg>
<svg class="abs" style="left:496.5px;top:104.5px" width="6" height="4"><path d="M0 0L6 0L3 3Z" fill="#e8e8e8"/></svg>
<svg class="abs" style="left:649.5px;top:59.5px" width="6" height="4"><path d="M0 0L6 0L3 3Z" fill="#e8e8e8"/></svg>
<svg class="abs" style="left:652.8px;top:83.5px" width="6" height="4"><path d="M0 0L6 0L3 3Z" fill="#e8e8e8"/></svg>
<svg class="abs" style="left:955.8px;top:104.5px" width="6" height="4"><path d="M0 0L6 0L3 3Z" fill="#e8e8e8"/></svg>
<svg class="abs" style="left:1086.3px;top:107.5px" width="6" height="4"><path d="M0 0L6 0L3 3Z" fill="#e8e8e8"/></svg>
<svg class="abs" style="left:1465.3px;top:104.5px" width="6" height="4"><path d="M0 0L6 0L3 3Z" fill="#e8e8e8"/></svg>
<svg class="abs" style="left:1554.3px;top:104.5px" width="6" height="4"><path d="M0 0L6 0L3 3Z" fill="#e8e8e8"/></svg>
<svg class="abs" style="left:1638.5px;top:104.5px" width="6" height="4"><path d="M0 0L6 0L3 3Z" fill="#e8e8e8"/></svg>
<div class="abs" style="left:370px;top:51px;width:68px;height:21px;background:linear-gradient(#7a7a7a,#6a6a6a);border:1px solid #2a2a2a;box-sizing:border-box"></div>
<div class="abs" style="left:425px;top:52px;width:1px;height:19px;background:#2f2f2f"></div>
<div class="abs" style="left:426px;top:52px;width:11px;height:19px;background:linear-gradient(#6a6a6a,#5a5a5a)"></div>
<span class="t" style="left:395.0px;top:53.0px;font-size:12px;line-height:16px;color:#ececec;transform:scaleX(0.9557);font-family:"Liberation Sans",sans-serif;">Trim</span>
<svg class="abs" style="left:428.5px;top:59.5px" width="6" height="4"><path d="M0 0L6 0L3 3Z" fill="#e8e8e8"/></svg>
<div class="abs" style="left:727px;top:51px;width:208px;height:21px;background:linear-gradient(#565656,#484848);border:1px solid #333;box-sizing:border-box"></div>
<div class="abs" style="left:809.5px;top:55.5px;width:12.5px;height:12.5px;background:#fff;border:1px solid #222;box-sizing:border-box"></div>
<span class="t" style="left:828.0px;top:53.0px;font-size:12px;line-height:16px;color:#ececec;transform:scaleX(0.8664);font-family:"Liberation Sans",sans-serif;">DEFPOINTS</span>
<svg class="abs" style="left:923px;top:58.5px" width="9" height="6"><path d="M0 0.5L9 0.5L4.5 5Z" fill="#eee"/></svg>
<div class="abs" style="left:1181px;top:51px;width:180px;height:21px;background:linear-gradient(#565656,#484848);border:1px solid #333;box-sizing:border-box"></div>
<svg class="abs" style="left:1350px;top:58.5px" width="9" height="6"><path d="M0 0.5L9 0.5L4.5 5Z" fill="#eee"/></svg>
<div class="abs" style="left:1194px;top:53.5px;width:15.5px;height:15px;background:#111;border:1px solid #7a7a7a;box-sizing:border-box"></div>
<span class="t" style="left:1220.0px;top:53.0px;font-size:12px;line-height:16px;color:#ececec;transform:scaleX(0.9268);font-family:"Liberation Sans",sans-serif;">ByLayer</span>
<div class="abs" style="left:1181px;top:74px;width:180px;height:21px;background:linear-gradient(#565656,#484848);border:1px solid #333;box-sizing:border-box"></div>
<svg class="abs" style="left:1350px;top:81.5px" width="9" height="6"><path d="M0 0.5L9 0.5L4.5 5Z" fill="#eee"/></svg>
<div class="abs" style="left:1185px;top:83.5px;width:64px;height:1px;background:#eee"></div>
<span class="t" style="left:1251.3px;top:76.5px;font-size:12px;line-height:16px;color:#ececec;transform:scaleX(0.9200);font-family:"Liberation Sans",sans-serif;">ByLayer</span>
<div class="abs" style="left:1181px;top:97.5px;width:180px;height:21px;background:linear-gradient(#565656,#484848);border:1px solid #333;box-sizing:border-box"></div>
<svg class="abs" style="left:1350px;top:105.0px" width="9" height="6"><path d="M0 0.5L9 0.5L4.5 5Z" fill="#eee"/></svg>
<div class="abs" style="left:1185px;top:107.0px;width:64px;height:1px;background:#eee"></div>
<span class="t" style="left:1251.3px;top:100.0px;font-size:12px;line-height:16px;color:#ececec;transform:scaleX(0.9200);font-family:"Liberation Sans",sans-serif;">ByLayer</span>
<svg class="abs" style="left:1351px;top:129px" width="8" height="8"><path d="M1 1L6 6M6 2V6H2" stroke="#ddd" fill="none"/></svg>
<svg class="abs" style="left:1660px;top:129px" width="8" height="8"><path d="M1 1L6 6M6 2V6H2" stroke="#ddd" fill="none"/></svg>
<div class="abs" style="left:0;top:146px;width:1919px;height:27px;background:#303030"></div>
<div class="abs" style="left:0;top:146px;width:20px;height:24px;background:#2c2c2c"></div>
<div class="abs" style="left:1896px;top:146px;width:23px;height:24px;background:#2c2c2c"></div>
<div class="abs" style="left:0;top:168.5px;width:1919px;height:4.5px;background:linear-gradient(#5a5a5a,#646464)"></div>
<svg class="abs" style="left:14px;top:146.5px" width="134" height="23"><path d="M0 23 C6 23 8 18 10 9 C11 3 14 1.5 19 1.5 L113 1.5 C119 1.5 121 3 123 9 C125 18 127 23 134 23 Z" fill="url(#tgi)" stroke="#5a5a5a" stroke-width="1"/></svg>
<span class="t" style="left:32.5px;top:150.5px;font-size:12px;line-height:16px;color:#c4c4c4;transform:scaleX(0.9194);font-family:"Liberation Sans",sans-serif;">Start</span>
<svg class="abs" style="left:137px;top:146.5px" width="136" height="23"><path d="M0 23 C6 23 8 18 10 9 C11 3 14 1.5 19 1.5 L115 1.5 C121 1.5 123 3 125 9 C127 18 129 23 136 23 Z" fill="url(#tgi)" stroke="#5a5a5a" stroke-width="1"/></svg>
<span class="t" style="left:155.5px;top:150.5px;font-size:12px;line-height:16px;color:#c4c4c4;transform:scaleX(0.8733);font-family:"Liberation Sans",sans-serif;">KSR-SJP-B170*</span>
<svg class="abs" style="left:246.8px;top:154.5px" width="8" height="8"><path d="M1 1L7 7M7 1L1 7" stroke="#2a2a2a" stroke-width="1.9"/></svg>
<svg class="abs" style="left:262px;top:146.5px" width="136" height="23"><path d="M0 23 C6 23 8 18 10 9 C11 3 14 1.5 19 1.5 L115 1.5 C121 1.5 123 3 125 9 C127 18 129 23 136 23 Z" fill="url(#tgi)" stroke="#5a5a5a" stroke-width="1"/></svg>
<span class="t" style="left:278.3px;top:150.5px;font-size:12px;line-height:16px;color:#c4c4c4;transform:scaleX(0.8778);font-family:"Liberation Sans",sans-serif;">KSR-SJP-BC200*</span>
<svg class="abs" style="left:371.8px;top:154.5px" width="8" height="8"><path d="M1 1L7 7M7 1L1 7" stroke="#2a2a2a" stroke-width="1.9"/></svg>
<svg class="abs" style="left:387px;top:146.5px" width="136" height="23"><path d="M0 23 C6 23 8 18 10 9 C11 3 14 1.5 19 1.5 L115 1.5 C121 1.5 123 3 125 9 C127 18 129 23 136 23 Z" fill="url(#tgi)" stroke="#5a5a5a" stroke-width="1"/></svg>
<span class="t" style="left:403.3px;top:150.5px;font-size:12px;line-height:16px;color:#c4c4c4;transform:scaleX(0.8778);font-family:"Liberation Sans",sans-serif;">KSR-SJP-BC201*</span>
<svg class="abs" style="left:496.8px;top:154.5px" width="8" height="8"><path d="M1 1L7 7M7 1L1 7" stroke="#2a2a2a" stroke-width="1.9"/></svg>
<svg class="abs" style="left:512px;top:146.5px" width="136" height="23"><path d="M0 23 C6 23 8 18 10 9 C11 3 14 1.5 19 1.5 L115 1.5 C121 1.5 123 3 125 9 C127 18 129 23 136 23 Z" fill="url(#tgi)" stroke="#5a5a5a" stroke-width="1"/></svg>
<span class="t" style="left:528.3px;top:150.5px;font-size:12px;line-height:16px;color:#c4c4c4;transform:scaleX(0.8778);font-family:"Liberation Sans",sans-serif;">KSR-SJP-BC202*</span>
<svg class="abs" style="left:621.8px;top:154.5px" width="8" height="8"><path d="M1 1L7 7M7 1L1 7" stroke="#2a2a2a" stroke-width="1.9"/></svg>
<svg class="abs" style="left:637px;top:146.5px" width="136" height="23"><path d="M0 23 C6 23 8 18 10 9 C11 3 14 1.5 19 1.5 L115 1.5 C121 1.5 123 3 125 9 C127 18 129 23 136 23 Z" fill="url(#tgi)" stroke="#5a5a5a" stroke-width="1"/></svg>
<span class="t" style="left:653.3px;top:150.5px;font-size:12px;line-height:16px;color:#c4c4c4;transform:scaleX(0.8778);font-family:"Liberation Sans",sans-serif;">KSR-SJP-BC203*</span>
<svg class="abs" style="left:746.8px;top:154.5px" width="8" height="8"><path d="M1 1L7 7M7 1L1 7" stroke="#2a2a2a" stroke-width="1.9"/></svg>
<svg class="abs" style="left:762px;top:146.5px" width="136" height="23"><path d="M0 23 C6 23 8 18 10 9 C11 3 14 1.5 19 1.5 L115 1.5 C121 1.5 123 3 125 9 C127 18 129 23 136 23 Z" fill="url(#tgi)" stroke="#5a5a5a" stroke-width="1"/></svg>
<span class="t" style="left:778.3px;top:150.5px;font-size:12px;line-height:16px;color:#c4c4c4;transform:scaleX(0.8778);font-family:"Liberation Sans",sans-serif;">KSR-SJP-BC204*</span>
<svg class="abs" style="left:871.8px;top:154.5px" width="8" height="8"><path d="M1 1L7 7M7 1L1 7" stroke="#2a2a2a" stroke-width="1.9"/></svg>
<svg class="abs" style="left:887px;top:146.5px" width="136" height="23"><path d="M0 23 C6 23 8 18 10 9 C11 3 14 1.5 19 1.5 L115 1.5 C121 1.5 123 3 125 9 C127 18 129 23 136 23 Z" fill="url(#tgi)" stroke="#5a5a5a" stroke-width="1"/></svg>
<span class="t" style="left:903.3px;top:150.5px;font-size:12px;line-height:16px;color:#c4c4c4;transform:scaleX(0.8778);font-family:"Liberation Sans",sans-serif;">KSR-SJP-BC300*</span>
<svg class="abs" style="left:996.8px;top:154.5px" width="8" height="8"><path d="M1 1L7 7M7 1L1 7" stroke="#2a2a2a" stroke-width="1.9"/></svg>
<svg class="abs" style="left:1012px;top:146.5px" width="136" height="23"><path d="M0 23 C6 23 8 18 10 9 C11 3 14 1.5 19 1.5 L115 1.5 C121 1.5 123 3 125 9 C127 18 129 23 136 23 Z" fill="url(#tgi)" stroke="#5a5a5a" stroke-width="1"/></svg>
<span class="t" style="left:1028.3px;top:150.5px;font-size:12px;line-height:16px;color:#c4c4c4;transform:scaleX(0.8778);font-family:"Liberation Sans",sans-serif;">KSR-SJP-BC301*</span>
<svg class="abs" style="left:1121.8px;top:154.5px" width="8" height="8"><path d="M1 1L7 7M7 1L1 7" stroke="#2a2a2a" stroke-width="1.9"/></svg>
<svg class="abs" style="left:1137px;top:146.5px" width="136" height="23"><path d="M0 23 C6 23 8 18 10 9 C11 3 14 1.5 19 1.5 L115 1.5 C121 1.5 123 3 125 9 C127 18 129 23 136 23 Z" fill="url(#tgi)" stroke="#5a5a5a" stroke-width="1"/></svg>
<span class="t" style="left:1153.3px;top:150.5px;font-size:12px;line-height:16px;color:#c4c4c4;transform:scaleX(0.8778);font-family:"Liberation Sans",sans-serif;">KSR-SJP-BC302*</span>
<svg class="abs" style="left:1246.8px;top:154.5px" width="8" height="8"><path d="M1 1L7 7M7 1L1 7" stroke="#2a2a2a" stroke-width="1.9"/></svg>
<svg class="abs" style="left:1262px;top:146.5px" width="136" height="23"><path d="M0 23 C6 23 8 18 10 9 C11 3 14 1.5 19 1.5 L115 1.5 C121 1.5 123 3 125 9 C127 18 129 23 136 23 Z" fill="url(#tgi)" stroke="#5a5a5a" stroke-width="1"/></svg>
<span class="t" style="left:1278.3px;top:150.5px;font-size:12px;line-height:16px;color:#c4c4c4;transform:scaleX(0.8778);font-family:"Liberation Sans",sans-serif;">KSR-SJP-BC303*</span>
<svg class="abs" style="left:1371.8px;top:154.5px" width="8" height="8"><path d="M1 1L7 7M7 1L1 7" stroke="#2a2a2a" stroke-width="1.9"/></svg>
<svg class="abs" style="left:1387px;top:146.5px" width="136" height="23"><path d="M0 23 C6 23 8 18 10 9 C11 3 14 1.5 19 1.5 L115 1.5 C121 1.5 123 3 125 9 C127 18 129 23 136 23 Z" fill="url(#tgi)" stroke="#5a5a5a" stroke-width="1"/></svg>
<span class="t" style="left:1403.3px;top:150.5px;font-size:12px;line-height:16px;color:#c4c4c4;transform:scaleX(0.8778);font-family:"Liberation Sans",sans-serif;">KSR-SJP-BC400*</span>
<svg class="abs" style="left:1496.8px;top:154.5px" width="8" height="8"><path d="M1 1L7 7M7 1L1 7" stroke="#2a2a2a" stroke-width="1.9"/></svg>
<svg class="abs" style="left:1512px;top:146.5px" width="136" height="23"><path d="M0 23 C6 23 8 18 10 9 C11 3 14 1.5 19 1.5 L115 1.5 C121 1.5 123 3 125 9 C127 18 129 23 136 23 Z" fill="url(#tgi)" stroke="#5a5a5a" stroke-width="1"/></svg>
<span class="t" style="left:1528.3px;top:150.5px;font-size:12px;line-height:16px;color:#c4c4c4;transform:scaleX(0.8778);font-family:"Liberation Sans",sans-serif;">KSR-SJP-BC401*</span>
<svg class="abs" style="left:1621.8px;top:154.5px" width="8" height="8"><path d="M1 1L7 7M7 1L1 7" stroke="#2a2a2a" stroke-width="1.9"/></svg>
<svg class="abs" style="left:1637px;top:146.5px" width="136" height="23"><path d="M0 23 C6 23 8 18 10 9 C11 3 14 1.5 19 1.5 L115 1.5 C121 1.5 123 3 125 9 C127 18 129 23 136 23 Z" fill="url(#tgi)" stroke="#5a5a5a" stroke-width="1"/></svg>
<span class="t" style="left:1653.3px;top:150.5px;font-size:12px;line-height:16px;color:#c4c4c4;transform:scaleX(0.8778);font-family:"Liberation Sans",sans-serif;">KSR-SJP-BC402*</span>
<svg class="abs" style="left:1746.8px;top:154.5px" width="8" height="8"><path d="M1 1L7 7M7 1L1 7" stroke="#2a2a2a" stroke-width="1.9"/></svg>
<svg class="abs" style="left:1762px;top:146.5px" width="136" height="23"><defs><linearGradient id="tga" x1="0" x2="0" y1="0" y2="1"><stop offset="0" stop-color="#707070"/><stop offset="1" stop-color="#5e5e5e"/></linearGradient><linearGradient id="tgi" x1="0" x2="0" y1="0" y2="1"><stop offset="0" stop-color="#484848"/><stop offset=".6" stop-color="#4e4e4e"/><stop offset="1" stop-color="#5a5a5a"/></linearGradient></defs><path d="M0 23 C6 23 8 18 10 9 C11 3 14 1.5 19 1.5 L115 1.5 C121 1.5 123 3 125 9 C127 18 129 23 136 23 Z" fill="url(#tga)" stroke="#747474" stroke-width="1"/></svg>
<span class="t" style="left:1778.3px;top:150.5px;font-size:12px;line-height:16px;color:#ffffff;transform:scaleX(0.8657);font-family:"Liberation Sans",sans-serif;">KSR-SJP-BC403</span>
<svg class="abs" style="left:1871.8px;top:154.5px" width="8" height="8"><path d="M1 1L7 7M7 1L1 7" stroke="#484848" stroke-width="1.9"/></svg>
<svg class="abs" style="left:1896px;top:147px" width="23" height="22"><path d="M0 22 C5 21 4 5 12 5 L23 5 L23 22Z" fill="#484848"/><path d="M8 12.5H17M12.5 8V17" stroke="#ddd" stroke-width="1.6"/></svg>
<svg class="abs" style="left:0;top:0" width="1919" height="146" fill="none" stroke-linecap="butt">
<path d="M50 6H60L65 11V18H50Z" fill="#fff"/><path d="M60 6V11H65Z" fill="#d0d0d0"/>
<path d="M74 18L78 11H90L86 18Z" fill="#ececec"/><path d="M75 16V7H81L83 9H86V10.5" stroke="#ececec" stroke-width="1.5"/>
<path d="M98 4H112L114 6V20H98Z" fill="#c8c8c8"/><rect x="101" y="4" width="9" height="6" fill="#fff"/><rect x="101" y="14" width="10" height="6" fill="#fff"/>
<path d="M122 4H136L138 6V20H122Z" fill="#c8c8c8"/><rect x="125" y="4" width="9" height="6" fill="#fff"/><rect x="125" y="14" width="5" height="6" fill="#fff"/><path d="M130 17L136 11L139 14L133 20Z" fill="#f0c060"/><path d="M136 11L137.5 9.5L140.5 12.5L139 14Z" fill="#f05050"/>
<rect x="147.5" y="4.5" width="9" height="15" rx="1" fill="#5a5a5a" stroke="#d8d8d8"/><path d="M154 13H158L159 14H163V20H154Z" fill="#f2c25c"/>
<rect x="174.5" y="4.5" width="9" height="15" rx="1" fill="#5a5a5a" stroke="#d8d8d8"/><path d="M171 10H177V7.5L181.5 11L177 14.5V12H171Z" fill="#5ab0f0"/>
<rect x="197" y="4" width="10" height="5" fill="#fff"/><path d="M194 9H210V17H194Z" fill="#e8e8e8"/><rect x="197" y="14" width="10" height="6" fill="#5ab0f0"/>
<path d="M219 11.5L225 7.5V10H231V14H225V15.5Z" fill="#adadad"/><path d="M240 10.5H246L243 13.5Z" fill="#c4c4c4"/>
<path d="M269 11.5L263 7.5V10H256V14H263V15.5Z" fill="#adadad"/><path d="M276 10.5H282L279 13.5Z" fill="#c4c4c4"/>
<path d="M289.5 8.5H298.5" stroke="#f0f0f0" stroke-width="1.5"/><path d="M289.5 11H298.5L294 15Z" fill="#f0f0f0"/>
<path d="M1510.500 9.500L1511.500 5.500H1514L1515 9.500V18.500H1509.500V11Z" fill="#ececec" stroke="#1e1e1e" stroke-width="1.1"/><path d="M1518.500 9.500L1519.500 5.500H1522L1523.500 11V18.500H1518V9.500Z" fill="#ececec" stroke="#1e1e1e" stroke-width="1.1"/><rect x="1514.800" y="9" width="3.400" height="3.500" fill="#1e1e1e"/><path d="M1509.500 15H1515M1518 15H1523.500" stroke="#1e1e1e" stroke-width="1"/>
<circle cx="1540" cy="9" r="3.8" fill="#f2f2f2" stroke="#222"/><path d="M1533.5 19C1533.5 14 1536 13.5 1540 13.5C1544 13.5 1546.5 14 1546.5 19Z" fill="#f2f2f2" stroke="#222"/>
<path d="M1637 11H1643L1640 14Z" fill="#f0f0f0"/>
<path d="M1654 6H1657L1659 14H1668L1670 8H1658Z" fill="#f0f0f0" stroke="#222" stroke-width="1.3"/><circle cx="1660" cy="17" r="1.5" fill="#222"/><circle cx="1667" cy="17" r="1.5" fill="#222"/>
<path d="M1686.500 4.500L1692.500 14.500C1693.500 16.500 1691 17.500 1686.500 17.500C1682 17.500 1679.500 16.500 1680.500 14.500Z" stroke="#222" stroke-width="3.200" stroke-linejoin="round"/><path d="M1686.500 4.500L1692.500 14.500C1693.500 16.500 1691 17.500 1686.500 17.500C1682 17.500 1679.500 16.500 1680.500 14.500Z" stroke="#f2f2f2" stroke-width="1.500" stroke-linejoin="round"/><path d="M1699 11H1705L1702 14Z" fill="#f0f0f0"/>
<circle cx="1732.5" cy="12" r="7" fill="#f4f4f4" stroke="#222" stroke-width="1.3"/>
<path d="M1729.8 9.8C1729.8 7 1735.4 7 1735.4 9.9C1735.4 11.8 1732.6 11.8 1732.6 14" stroke="#1a1a90" stroke-width="1.8"/><circle cx="1732.6" cy="16.3" r="1.1" fill="#1a1a90"/>
<path d="M1747 11H1753L1750 14Z" fill="#f0f0f0"/>
<path d="M8.5 82.5L37.5 53.5" stroke="#e4e4e4" stroke-width="1.2"/>
<rect x="6.8" y="80.8" width="3.4" height="3.4" fill="#72bdf5"/>
<rect x="35.8" y="51.8" width="3.4" height="3.4" fill="#72bdf5"/>
<path d="M51 75.5H71.5M72 60.5C84.5 60.5 84.5 75.5 72 75.5" stroke="#e4e4e4" stroke-width="1.2"/>
<rect x="49.6" y="73.8" width="3.4" height="3.4" fill="#72bdf5"/>
<rect x="69.6" y="73.8" width="3.4" height="3.4" fill="#72bdf5"/>
<rect x="69.6" y="58.8" width="3.4" height="3.4" fill="#72bdf5"/>
<circle cx="115.5" cy="67.5" r="15.3" stroke="#e4e4e4" stroke-width="1.2"/><path d="M116 67L123 60" stroke="#72bdf5" stroke-width="1.2"/><path d="M125 58L124 62.5L120.5 59Z" fill="#72bdf5"/>
<rect x="113.8" y="65.8" width="3.4" height="3.4" fill="#72bdf5"/>
<path d="M149.5 81C150.5 67 161 56 176.5 54.5" stroke="#e4e4e4" stroke-width="1.2"/>
<rect x="147.7" y="79.6" width="3.4" height="3.4" fill="#72bdf5"/>
<rect x="155.8" y="60.8" width="3.4" height="3.4" fill="#72bdf5"/>
<rect x="174.6" y="52.6" width="3.4" height="3.4" fill="#72bdf5"/>
<rect x="188.5" y="56.5" width="13" height="9" stroke="#e4e4e4" stroke-width="1.2"/>
<rect x="186.7" y="54.7" width="2.6" height="2.6" fill="#72bdf5"/>
<rect x="200.7" y="64.7" width="2.6" height="2.6" fill="#72bdf5"/>
<ellipse cx="194" cy="85" rx="7" ry="5" stroke="#e4e4e4" stroke-width="1.2" stroke-dasharray="9 3"/>
<rect x="192.9" y="83.9" width="2.2" height="2.2" fill="#72bdf5"/>
<rect x="192.9" y="78.9" width="2.2" height="2.2" fill="#72bdf5"/>
<rect x="199.7" y="83.9" width="2.2" height="2.2" fill="#72bdf5"/>
<rect x="191" y="105" width="9" height="9" fill="#72bdf5" opacity=".35"/><path d="M191 109L195 105M191 113L199 105M194 114L200 108M198 114L200 112" stroke="#72bdf5" stroke-width="1"/><path d="M187 104.500H203.500M187 114.500H203.500M190.500 101V118M200.500 101V118" stroke="#e4e4e4" stroke-width="1"/>
<path d="M240.5 54V68M233.5 61H247.5" stroke="#e4e4e4" stroke-width="1.4"/><path d="M240.5 52.5L243.5 56H237.5ZM240.5 69.5L243.5 66H237.5ZM232 61L235.5 58V64ZM249 61L245.5 58V64Z" fill="#e4e4e4"/>
<circle cx="236.3" cy="80.6" r="2.8" stroke="#e4e4e4" stroke-width="1.2"/><path d="M241 79H245V84" stroke="#e4e4e4" stroke-width="1.2"/><path d="M245 86L242.8 83H247.2Z" fill="#e4e4e4"/><circle cx="240" cy="90" r="2.9" stroke="#72bdf5" stroke-width="1.2"/><circle cx="245.5" cy="90" r="2.9" stroke="#72bdf5" stroke-width="1.2"/>
<path d="M233.5 101.5H239.5V116.5H233.5Z" stroke="#e4e4e4" stroke-width="1.2"/><path d="M241.5 101.5H244.5L248.5 116.5H245" stroke="#72bdf5" stroke-width="1.2"/><path d="M238 113H243" stroke="#e4e4e4" stroke-width="1.2"/><path d="M245 113L242 110.8V115.2Z" fill="#e4e4e4"/>
<path d="M318 57.5A6.5 6.5 0 1 1 312.5 55.5" stroke="#e4e4e4" stroke-width="1.3"/><path d="M316.5 55.2L312 52V58.5Z" fill="#e4e4e4"/>
<path d="M310.5 79.5V91.5H305.5Z" stroke="#e4e4e4" stroke-width="1.1"/><path d="M313.5 79.5V91.5H319Z" stroke="#72bdf5" stroke-width="1.1"/>
<path d="M305.5 101.5H320.5V116.5H316" stroke="#72bdf5" stroke-width="1.2"/><rect x="305.5" y="108.5" width="8" height="8" stroke="#e4e4e4" stroke-width="1.2"/>
<path d="M374 54.5H380" stroke="#72bdf5" stroke-width="1" stroke-dasharray="1.5 1"/><path d="M384 54.5H390" stroke="#e4e4e4" stroke-width="1"/><path d="M378 55L386 65M386 56L381 64" stroke="#e4e4e4" stroke-width="1.3"/><circle cx="381" cy="66.5" r="1.8" stroke="#e4e4e4" stroke-width="1.1"/><circle cx="386.5" cy="66" r="1.8" stroke="#e4e4e4" stroke-width="1.1"/>
<path d="M374.5 87C374.5 81 378 78 384 78" stroke="#72bdf5" stroke-width="1.2"/><path d="M374.5 88V93M384.5 78H390" stroke="#e4e4e4" stroke-width="1.2"/>
<rect x="375.5" y="102.5" width="4.6" height="4.6" stroke="#e4e4e4" stroke-width="1.2"/>
<rect x="384" y="102.5" width="4.6" height="4.6" stroke="#e4e4e4" stroke-width="1.2"/>
<rect x="375.5" y="111.5" width="4.6" height="4.6" stroke="#72bdf5" stroke-width="1.2"/>
<rect x="384" y="111.5" width="4.6" height="4.6" stroke="#72bdf5" stroke-width="1.2"/>
<path d="M454 65L463 53L466 56L457.5 67.5Z" fill="#f6c76e"/><path d="M452.5 66.5L454.5 64L458 67L456 69.5Z" fill="#f05a5a"/><path d="M449 69.5H453" stroke="#e4e4e4"/><path d="M455 69.5H465" stroke="#72bdf5"/>
<path d="M450 82.5H460.5V92H450ZM450 82.5L454 78.5H464.5L460.5 82.5M464.5 78.5V88L460.5 92" stroke="#72bdf5" stroke-width="1.2"/><rect x="452.5" y="84.5" width="6" height="5.5" stroke="#e4e4e4" stroke-width="1.2"/>
<path d="M465 103H456C448 103 448 115 456 115H465" stroke="#72bdf5" stroke-width="1.3"/><path d="M465 106H457C452.5 106 452.5 112 457 112H465" stroke="#72bdf5" stroke-width="1.3"/><path d="M465 109H458" stroke="#e4e4e4" stroke-width="1.2"/>
<path d="M486.5 82.5L497.3 54H502L513 82.5H508.5L505.5 74.5H493.7L490.8 82.5ZM495 71H504.3L499.6 58Z" fill="#d8d8d8"/>
<path d="M536.5 52V84M567.5 52V84" stroke="#e4e4e4" stroke-width="1.1"/><path d="M538 58.5H566" stroke="#e4e4e4" stroke-width="1.1"/><path d="M537 58.5L541.5 56V61ZM567 58.5L562.5 56V61Z" fill="#e4e4e4"/>
<path d="M552 68L552 73" stroke="#f6c76e" stroke-width="2.2"/>
<path d="M543.5 71.5L546.5 75" stroke="#f6c76e" stroke-width="2.2"/>
<path d="M560.5 71.5L557.5 75" stroke="#f6c76e" stroke-width="2.2"/>
<path d="M540 79L545 79.5" stroke="#f6c76e" stroke-width="2.2"/>
<path d="M564 79L559 79.5" stroke="#f6c76e" stroke-width="2.2"/>
<path d="M589.5 53V68M604.5 53V68" stroke="#e4e4e4" stroke-width="1.1"/><path d="M590 58.5H604" stroke="#72bdf5" stroke-width="1.1"/><path d="M590 58.5L593 57V60ZM604 58.5L601 57V60Z" fill="#72bdf5"/>
<circle cx="601.5" cy="81.5" r="3" stroke="#e4e4e4" stroke-width="1.1"/><path d="M598.5 82.5C594 83 595 87 590.5 90.5" stroke="#e4e4e4" stroke-width="1.1"/><path d="M589 92L590 87.5L593.5 90.5Z" fill="#e4e4e4"/>
<rect x="589.5" y="102.5" width="15" height="13" stroke="#e4e4e4" stroke-width="1.2"/><path d="M589.5 106H604.5M589.5 109.3H604.5M589.5 112.5H604.5M594.5 106V115.5M599.5 106V115.5" stroke="#e4e4e4" stroke-width="1"/><rect x="590" y="103" width="14" height="2.5" fill="#e4e4e4"/>
<path d="M680 63L690 52H707L697 63Z" fill="#d8d8d8"/><path d="M680 70L686 64H698L703 58.5L707 58.5L697 70Z" fill="#d8d8d8" opacity=".92"/><path d="M680 76L685 71H698L700 69V76Z" fill="#d8d8d8" opacity=".85"/>
<rect x="699.5" y="65.5" width="13" height="18" fill="#f2f2f2"/><rect x="701.5" y="68" width="9" height="6" fill="#72bdf5"/><path d="M702 78H710M702 81H710" stroke="#555" stroke-width="1"/><path d="M702 78L704 76.5M710 81L708 82.5" stroke="#555" stroke-width="1"/>
<circle cx="739" cy="59.5" r="5" fill="#f6c76e"/><rect x="737" y="64" width="4" height="3.5" fill="#f4f4f4"/>
<circle cx="757.5" cy="61" r="4.2" fill="#f6c76e"/>
<path d="M763.0 61.0L765.0 61.0" stroke="#f6c76e" stroke-width="1.2"/>
<path d="M761.4 64.9L762.8 66.3" stroke="#f6c76e" stroke-width="1.2"/>
<path d="M757.5 66.5L757.5 68.5" stroke="#f6c76e" stroke-width="1.2"/>
<path d="M753.6 64.9L752.2 66.3" stroke="#f6c76e" stroke-width="1.2"/>
<path d="M752.0 61.0L750.0 61.0" stroke="#f6c76e" stroke-width="1.2"/>
<path d="M753.6 57.1L752.2 55.7" stroke="#f6c76e" stroke-width="1.2"/>
<path d="M757.5 55.5L757.5 53.5" stroke="#f6c76e" stroke-width="1.2"/>
<path d="M761.4 57.1L762.8 55.7" stroke="#f6c76e" stroke-width="1.2"/>
<rect x="772" y="56" width="9" height="9" fill="#8a8a8a"/><path d="M769.5 57.5V54.5H772.5M780.5 54.5H783.5V57.5M769.5 64.5V67.5H772.5" stroke="#e4e4e4" stroke-width="1.1"/><circle cx="780.5" cy="65.5" r="2.6" fill="#f6c76e"/>
<rect x="789" y="60.5" width="10" height="8" fill="#f6c76e"/><path d="M796 60.5V57C796 53.5 801.5 53.5 801.5 57V58" stroke="#f6c76e" stroke-width="1.7"/><rect x="793.2" y="63" width="1.6" height="3" fill="#555"/>
<path d="M731 82.0L734.5 78.5H743.5L740 82.0Z" fill="#d8d8d8" opacity="1"/>
<circle cx="744" cy="86.5" r="3.4" fill="#3cc6d2"/><rect x="742.7" y="90" width="2.6" height="2.4" fill="#f4f4f4"/>
<path d="M755 81.0L758.5 77.5H767.5L764 81.0Z" fill="#d8d8d8" opacity="1"/>
<path d="M755 85.0L758.5 81.5H767.5L764 85.0Z" fill="#d8d8d8" opacity="0.9"/>
<path d="M755 89.0L758.5 85.5H767.5L764 89.0Z" fill="#72bdf5" opacity="1"/>
<path d="M770.5 86.5L765.5 91.5" stroke="#e4e4e4" stroke-width="1.2"/><path d="M764.3 92.8L765 88.8L768.3 92Z" fill="#e4e4e4"/>
<path d="M779 82.0L782.5 78.5H791.5L788 82.0Z" fill="#d8d8d8" opacity="1"/>
<path d="M790.5 85V93M787 87L794 91M794 87L787 91" stroke="#3cc6d2" stroke-width="1.2"/>
<path d="M803 82.0L806.5 78.5H815.5L812 82.0Z" fill="#d8d8d8" opacity="1"/>
<rect x="812" y="88" width="7" height="5.5" fill="#3cc6d2"/><path d="M813.5 88V86.5C813.5 84 817.5 84 817.5 86.5V88" stroke="#3cc6d2" stroke-width="1.3"/>
<circle cx="835" cy="80" r="3" fill="#c8c8c8"/>
<path d="M827.5 85.5L831.0 82H840.0L836.5 85.5Z" fill="#72bdf5" opacity="1"/>
<path d="M827.5 89.5L831.0 86H840.0L836.5 89.5Z" fill="#d8d8d8" opacity="1"/>
<path d="M827.5 93.5L831.0 90H840.0L836.5 93.5Z" fill="#d8d8d8" opacity="0.9"/>
<path d="M731 105.0L734.5 101.5H743.5L740 105.0Z" fill="#d8d8d8" opacity="1"/>
<path d="M731 109.0L734.5 105.5H743.5L740 109.0Z" fill="#d8d8d8" opacity="0.9"/>
<path d="M731 113.0L734.5 109.5H743.5L740 113.0Z" fill="#d8d8d8" opacity="0.85"/>
<circle cx="744" cy="110.5" r="3.4" fill="#f6c76e"/><rect x="742.7" y="114" width="2.6" height="2.4" fill="#f4f4f4"/>
<path d="M755 105.0L758.5 101.5H767.5L764 105.0Z" fill="#d8d8d8" opacity="1"/>
<path d="M755 109.0L758.5 105.5H767.5L764 109.0Z" fill="#d8d8d8" opacity="0.9"/>
<path d="M755 113.0L758.5 109.5H767.5L764 113.0Z" fill="#72bdf5" opacity="1"/>
<path d="M765 116L770 111" stroke="#e4e4e4" stroke-width="1.2"/><path d="M771.2 109.8L770.5 113.8L767.2 110.6Z" fill="#e4e4e4"/>
<path d="M779 105.0L782.5 101.5H791.5L788 105.0Z" fill="#d8d8d8" opacity="1"/>
<path d="M779 109.0L782.5 105.5H791.5L788 109.0Z" fill="#d8d8d8" opacity="0.9"/>
<path d="M779 113.0L782.5 109.5H791.5L788 113.0Z" fill="#d8d8d8" opacity="0.85"/>
<circle cx="790.5" cy="113" r="2.7" fill="#f6c76e"/><circle cx="790.5" cy="113" r="4.6" stroke="#f6c76e" stroke-width="1" stroke-dasharray="1 1.4"/>
<path d="M803 106.0L806.5 102.5H815.5L812 106.0Z" fill="#d8d8d8" opacity="1"/>
<rect x="810" y="112" width="7" height="5.5" fill="#f6c76e"/><path d="M814.5 112V110C814.5 107.5 818.5 107.5 818.5 110V110.5" stroke="#f6c76e" stroke-width="1.3"/>
<path d="M827.5 105.0L831.0 101.5H840.0L836.5 105.0Z" fill="#d8d8d8" opacity="1"/>
<path d="M827.5 109.0L831.0 105.5H840.0L836.5 109.0Z" fill="#d8d8d8" opacity="0.9"/>
<path d="M827.5 113.0L831.0 109.5H840.0L836.5 113.0Z" fill="#d8d8d8" opacity="0.85"/>
<path d="M835 112L838.5 108.5L843 113L839.5 116.5Z" fill="#f6c76e"/><path d="M838 108L840.5 105.5L845 110L842.5 112.5Z" fill="#f4f4f4"/>
<path d="M958 50H969.500L975.500 56V74.500H958Z" fill="#72bdf5"/><path d="M969.500 50V56H975.500Z" fill="#d6ecfc"/><rect x="945.5" y="60.5" width="19" height="14" fill="#8c8c8c" stroke="#d8d8d8" stroke-width="1.2"/><circle cx="964.600" cy="74.600" r="6.800" fill="#8c8c8c" fill-opacity=".9" stroke="#d8d8d8" stroke-width="1.2"/><rect x="943.5" y="72.5" width="3" height="3" fill="#d8d8d8"/>
<rect x="985.5" y="58.5" width="8" height="6" fill="#8c8c8c" stroke="#d8d8d8" stroke-width="1"/><circle cx="993.0" cy="65.0" r="3.2" fill="#8c8c8c" stroke="#d8d8d8" stroke-width="1"/><rect x="984.0" y="63.5" width="2.4" height="2.4" fill="#d8d8d8"/>
<path d="M994.5 56L999.1 56.0" stroke="#f6c76e" stroke-width="1.5"/>
<path d="M994.5 56L996.8 58.3" stroke="#f6c76e" stroke-width="1.5"/>
<path d="M994.5 56L994.5 60.6" stroke="#f6c76e" stroke-width="1.5"/>
<path d="M994.5 56L992.2 58.3" stroke="#f6c76e" stroke-width="1.5"/>
<path d="M994.5 56L989.9 56.0" stroke="#f6c76e" stroke-width="1.5"/>
<path d="M994.5 56L992.2 53.7" stroke="#f6c76e" stroke-width="1.5"/>
<path d="M994.5 56L994.5 51.4" stroke="#f6c76e" stroke-width="1.5"/>
<path d="M994.5 56L996.8 53.7" stroke="#f6c76e" stroke-width="1.5"/>
<rect x="985.5" y="82.5" width="8" height="6" fill="#8c8c8c" stroke="#d8d8d8" stroke-width="1"/><circle cx="993.0" cy="89.0" r="3.2" fill="#8c8c8c" stroke="#d8d8d8" stroke-width="1"/><rect x="984.0" y="87.5" width="2.4" height="2.4" fill="#d8d8d8"/>
<path d="M989 87L995.5 80.5L997.5 82.5L991 89Z" fill="#f6c76e"/><path d="M995.5 80.5L996.8 79.2L998.8 81.2L997.5 82.5Z" fill="#f05a5a"/>
<path d="M983.5 103H991L997.5 108L990 116.5L983.5 111Z" fill="#f0f0f0"/><path d="M986 106L991 111M986.5 110L989 112.5" stroke="#666" stroke-width="1" stroke-dasharray="1.5 1"/><path d="M990 109L996.5 102.5L998.5 104.5L992 111Z" fill="#f6c76e"/><path d="M996.5 102.5L997.8 101.2L999.8 103.2L998.5 104.5Z" fill="#f05a5a"/>
<rect x="1116" y="52" width="20" height="27" fill="#e6e6e6"/><rect x="1119" y="55" width="13" height="10" fill="#72bdf5"/><path d="M1119 70H1129M1119 75H1129M1123 68V72M1126 73V77" stroke="#666" stroke-width="1.1"/><path d="M1130 76L1137 69L1143.5 75.5L1136.5 82.5Z" fill="#f6c76e"/><path d="M1137 68L1141.5 63.5C1143 62 1148.5 67.5 1147 69L1142.5 73.5Z" fill="#f4f4f4"/>
<path d="M1171 60L1171.00 52.00A8 8 0 0 1 1177.93 56.00Z" fill="#f05050"/>
<path d="M1171 60L1177.93 56.00A8 8 0 0 1 1177.93 64.00Z" fill="#f0c040"/>
<path d="M1171 60L1177.93 64.00A8 8 0 0 1 1171.00 68.00Z" fill="#60c860"/>
<path d="M1171 60L1171.00 68.00A8 8 0 0 1 1164.07 64.00Z" fill="#40c8c8"/>
<path d="M1171 60L1164.07 64.00A8 8 0 0 1 1164.07 56.00Z" fill="#5060e8"/>
<path d="M1171 60L1164.07 56.00A8 8 0 0 1 1171.00 52.00Z" fill="#c050c0"/>
<path d="M1163 78H1179" stroke="#d8d8d8" stroke-width="1"/><path d="M1163 82H1179" stroke="#d8d8d8" stroke-width="2"/><path d="M1163 87H1179" stroke="#d8d8d8" stroke-width="3"/><path d="M1163 91.5H1179" stroke="#d8d8d8" stroke-width="3.4"/>
<path d="M1163 102H1179" stroke="#d8d8d8" stroke-width="1" stroke-dasharray="1 1"/><path d="M1163 105.5H1179" stroke="#d8d8d8" stroke-width="1" stroke-dasharray="2 1"/><path d="M1163 109H1179" stroke="#d8d8d8" stroke-width="1" stroke-dasharray="4 1.5"/><path d="M1163 112.5H1179" stroke="#d8d8d8" stroke-width="1" stroke-dasharray="6 2 2 2"/>
<path d="M1374 56H1370.5V82.5H1374M1386 82.5H1389.5V70" stroke="#f4f4f4" stroke-width="1.6"/><rect x="1375.500" y="60.5" width="9" height="6.5" fill="#72bdf5"/><circle cx="1380" cy="74.500" r="4.2" fill="#8a8a8a" stroke="#c8c8c8" stroke-width="1.6"/>
<path d="M1392 60.5L1399.5 60.5" stroke="#f6c76e" stroke-width="2"/>
<path d="M1392 60.5L1395.5 64.0" stroke="#f6c76e" stroke-width="2"/>
<path d="M1392 60.5L1392.0 68.0" stroke="#f6c76e" stroke-width="2"/>
<path d="M1392 60.5L1388.5 64.0" stroke="#f6c76e" stroke-width="2"/>
<path d="M1392 60.5L1384.5 60.5" stroke="#f6c76e" stroke-width="2"/>
<path d="M1392 60.5L1388.5 57.0" stroke="#f6c76e" stroke-width="2"/>
<path d="M1392 60.5L1392.0 53.0" stroke="#f6c76e" stroke-width="2"/>
<path d="M1392 60.5L1395.5 57.0" stroke="#f6c76e" stroke-width="2"/>
<circle cx="1392" cy="60.500" r="3" fill="#fbe6b0"/>
<rect x="1412.500" y="55.5" width="5" height="4" stroke="#72bdf5"/><circle cx="1415" cy="64.500" r="2.4" stroke="#d8d8d8"/><path d="M1420 53.5H1422.500V68.500H1420" stroke="#d8d8d8"/><path d="M1419 59L1424.500 64.500M1424.500 59L1419 64.500" stroke="#f04040" stroke-width="1.5"/>
<path d="M1413 78H1410.500V91H1413M1420 78H1422.500V83" stroke="#d8d8d8"/><rect x="1413.500" y="80" width="5" height="4" stroke="#72bdf5"/><circle cx="1416" cy="88" r="2.300" stroke="#d8d8d8"/><path d="M1418 91L1423.500 85.5L1425.500 87.5L1420 93Z" fill="#f6c76e"/><path d="M1423.500 85.5L1424.600 84.400L1426.600 86.400L1425.500 87.5Z" fill="#f05a5a"/>
<rect x="1406.500" y="98.5" width="22" height="20" fill="#4a78b0" stroke="#8fb8ea" stroke-width="1" stroke-dasharray="1 1"/><path d="M1413.500 101.5H1411V115H1413.500M1417.500 101.5H1420V105" stroke="#f0f0f0"/><rect x="1413" y="103.5" width="4.500" height="3.5" stroke="#60d860"/><circle cx="1415.200" cy="111" r="2.200" stroke="#60d860"/><path d="M1418 104.500V116L1420.800 113.400L1423 118L1424.800 117.200L1422.600 112.800H1426Z" fill="#fff"/>
<rect x="1455" y="70" width="28" height="6.5" fill="#f6c76e"/>
<path d="M1457 70V72.5" stroke="#fff5dc" stroke-width="1"/>
<path d="M1459 70V73.5" stroke="#fff5dc" stroke-width="1"/>
<path d="M1461 70V72.5" stroke="#fff5dc" stroke-width="1"/>
<path d="M1463 70V73.5" stroke="#fff5dc" stroke-width="1"/>
<path d="M1465 70V72.5" stroke="#fff5dc" stroke-width="1"/>
<path d="M1467 70V73.5" stroke="#fff5dc" stroke-width="1"/>
<path d="M1469 70V72.5" stroke="#fff5dc" stroke-width="1"/>
<path d="M1471 70V73.5" stroke="#fff5dc" stroke-width="1"/>
<path d="M1473 70V72.5" stroke="#fff5dc" stroke-width="1"/>
<path d="M1475 70V73.5" stroke="#fff5dc" stroke-width="1"/>
<path d="M1477 70V72.5" stroke="#fff5dc" stroke-width="1"/>
<path d="M1479 70V73.5" stroke="#fff5dc" stroke-width="1"/>
<path d="M1481 70V72.5" stroke="#fff5dc" stroke-width="1"/>
<path d="M1455.500 60V69M1482.500 60V69M1457 64.500H1481" stroke="#e4e4e4" stroke-width="1.1"/><path d="M1456 64.500L1459.500 62.500V66.500ZM1482 64.500L1478.500 62.500V66.500Z" fill="#e4e4e4"/>
<path d="M1507.500 57V68L1510.300 65.400L1512.300 69.600L1514 68.800L1512 64.700H1515.500Z" fill="#fff"/><rect x="1514" y="61" width="9" height="8" fill="#f4f4f4"/><path d="M1515.500 63.5H1517M1518 63.5H1521.500M1515.500 65.5H1517M1518 65.5H1521.500M1515.500 67.500H1517M1518 67.500H1521.500" stroke="#3a78c8" stroke-width="1"/><path d="M1513 53L1517 56.5L1514.500 57.5L1516.500 60L1511.500 57.5L1514 56.500Z" fill="#f6c76e"/>
<rect x="1507.500" y="77.500" width="14" height="13.5" fill="#3a6e3a" stroke="#50e050" stroke-width="1" stroke-dasharray="1.500 1"/><path d="M1510.500 81V88H1514V80H1518.500V88" stroke="#c8e8c8" stroke-width="1.2"/><path d="M1516 82V93L1518.600 90.600L1520.600 94.800L1522.300 94L1520.300 89.900H1523.500Z" fill="#fff"/>
<rect x="1509.500" y="101.500" width="11" height="15" fill="#d8d8d8"/><rect x="1511" y="103" width="8" height="3" fill="#555"/>
<rect x="1511" y="107.5" width="2" height="2" fill="#555"/>
<rect x="1514" y="107.5" width="2" height="2" fill="#555"/>
<rect x="1517" y="107.5" width="2" height="2" fill="#555"/>
<rect x="1511" y="110.5" width="2" height="2" fill="#555"/>
<rect x="1514" y="110.5" width="2" height="2" fill="#555"/>
<rect x="1517" y="110.5" width="2" height="2" fill="#555"/>
<rect x="1511" y="113.5" width="2" height="2" fill="#555"/>
<rect x="1514" y="113.5" width="2" height="2" fill="#555"/>
<rect x="1517" y="113.5" width="2" height="2" fill="#555"/>
<path d="M1544 55H1566V84H1544Z" fill="#e0b070"/><rect x="1550" y="52.500" width="10" height="4" fill="#f2f2f2"/><rect x="1553" y="50.5" width="4" height="3" fill="#f2f2f2"/><path d="M1552 62H1563.500L1570 68.500V84H1552Z" fill="#e2e2e2"/><path d="M1563.500 62V68.500H1570Z" fill="#f8f8f8"/>
<rect x="1587" y="53" width="12" height="14" fill="#d4d4d4"/><path d="M1589 57H1597M1589 60H1597M1589 63H1594" stroke="#555" stroke-width="1.2"/><path d="M1594 58L1601 67M1602.500 59L1596 67" stroke="#f4f4f4" stroke-width="1.2"/><circle cx="1595.500" cy="68.500" r="1.700" stroke="#f4f4f4" stroke-width="1"/><circle cx="1601.500" cy="68.500" r="1.700" stroke="#f4f4f4" stroke-width="1"/>
<path d="M1588 78H1594L1597 81V90H1588Z" fill="#c4c4c4"/><path d="M1591 80.500H1598L1601 83.500V93H1591Z" fill="#dedede" stroke="#5a5a5a" stroke-width=".8"/>
<path d="M1625 56H1638.500V65H1657.500V80H1625Z" fill="#dcdcdc"/>
</svg>
</body></html>
